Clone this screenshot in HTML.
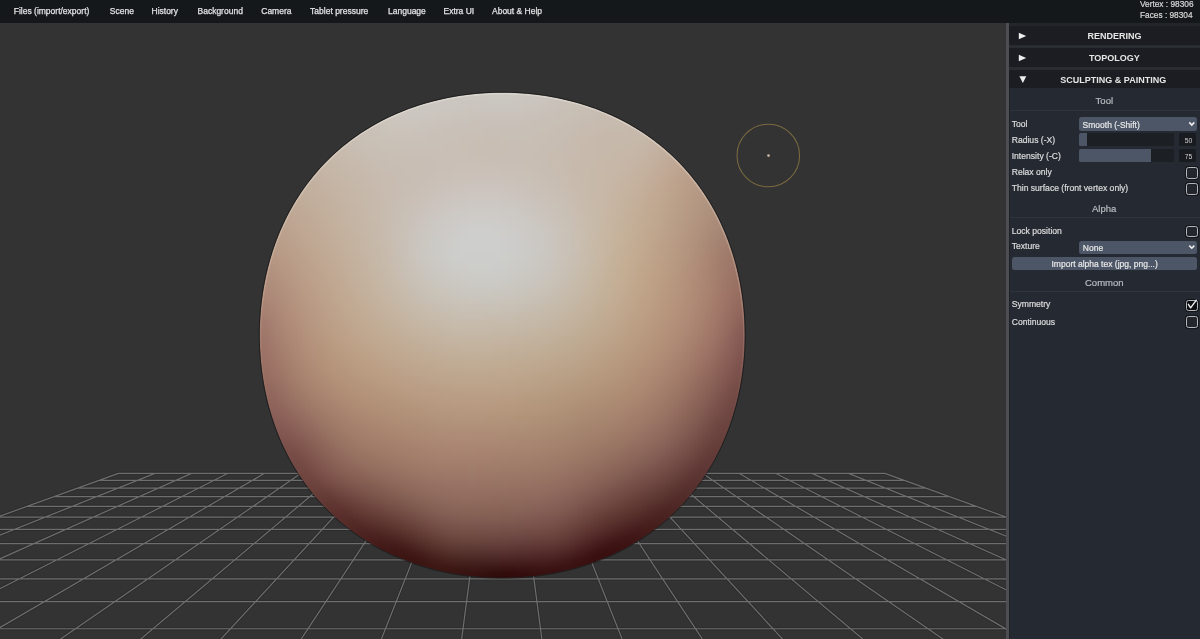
<!DOCTYPE html>
<html><head><meta charset="utf-8"><style>
html,body{-webkit-font-smoothing:antialiased;margin:0;padding:0;width:1200px;height:639px;overflow:hidden;background:#333333;font-family:"Liberation Sans",sans-serif}
#vp{position:absolute;left:0;top:0;width:1200px;height:639px}
#top{will-change:transform;position:absolute;left:0;top:0;width:1200px;height:23px;background:#14181b}
.mi{position:absolute;top:5.5px;font-size:8.5px;line-height:11px;color:#e2e2e2;white-space:pre;-webkit-text-stroke:0.25px #e2e2e2}
.st{position:absolute;left:1140px;font-size:8.3px;line-height:10px;color:#d8d8d8;white-space:pre;-webkit-text-stroke:0.2px #d8d8d8}
#side{will-change:transform;position:absolute;left:1006px;top:23px;width:194px;height:616px;background:#252a32}
#sb{position:absolute;left:0;top:0;width:3px;height:616px;background:#4c4e51;border-right:1px solid #1f2229}
.fh{position:absolute;left:3px;width:191px;height:22px;background:#1c1d22;border-top:3px solid #292d32;box-sizing:border-box}
.ft{position:absolute;font-size:9.0px;font-weight:bold;color:#e6e6e6;white-space:pre;line-height:11px}
.tri{position:absolute;width:0;height:0}
.lbl{position:absolute;left:1011.7px;font-size:8.6px;line-height:10px;color:#dcdcdc;white-space:pre;-webkit-text-stroke:0.2px #dcdcdc}
.ttl{position:absolute;font-size:9.5px;line-height:11px;color:#b8bcc0;white-space:pre;-webkit-text-stroke:0.2px #b8bcc0}
.sep{position:absolute;left:1010px;width:190px;height:1px;background:#30353c}
.sel{position:absolute;left:1078.8px;width:118.7px;height:13.5px;background:#4c5666;border-radius:2.5px}
.seltx{position:absolute;font-size:8.5px;line-height:10px;color:#e8e8e8;white-space:pre;-webkit-text-stroke:0.2px #e8e8e8}
.sl{position:absolute;left:1078.8px;width:95.7px;height:13px;background:#1c1f23;border-radius:1.5px;overflow:hidden}
.slf{position:absolute;left:0;top:0;height:13px;background:#4c5666}
.num{position:absolute;left:1178.7px;width:17.8px;height:13px;background:#181b1f;border-radius:1.5px}
.numtx{position:absolute;font-size:6.8px;line-height:8px;color:#d0d0d0;white-space:pre}
#vp rect{width:8px;height:8px}
.cb{position:absolute;left:1186px;width:9.6px;height:9.6px;border:1.1px solid #b4b8bc;border-radius:2.5px;background:#23272d;box-shadow:0 0 0 1px #121418}
</style></head><body>
<svg id="vp" width="1200" height="639" viewBox="0 0 1200 639">
<defs>
<linearGradient id="rimg" gradientUnits="userSpaceOnUse" x1="0" y1="92" x2="0" y2="420"><stop offset="0" stop-color="#e8e4de" stop-opacity="0.55"/><stop offset="0.6" stop-color="#e0c8b8" stop-opacity="0.3"/><stop offset="1" stop-color="#c09080" stop-opacity="0"/></linearGradient>
<clipPath id="sclip"><path d="M744.75 335.20L744.72 339.43L744.62 343.66L744.47 347.89L744.25 352.12L743.96 356.35L743.62 360.57L743.20 364.79L742.73 369.00L742.19 373.20L741.58 377.40L740.91 381.59L740.18 385.77L739.38 389.95L738.51 394.11L737.57 398.25L736.57 402.39L735.50 406.51L734.36 410.62L733.15 414.71L731.87 418.78L730.52 422.83L729.11 426.86L727.62 430.86L726.06 434.84L724.42 438.80L722.72 442.73L720.94 446.63L719.10 450.50L717.18 454.34L715.18 458.14L713.12 461.90L710.98 465.63L708.78 469.32L706.50 472.97L704.15 476.57L701.73 480.13L699.24 483.64L696.68 487.11L694.05 490.52L691.36 493.88L688.60 497.19L685.77 500.44L682.88 503.64L679.92 506.78L676.91 509.86L673.83 512.87L670.69 515.83L667.49 518.72L664.24 521.55L660.93 524.31L657.57 527.00L654.16 529.63L650.69 532.19L647.18 534.68L643.62 537.10L640.02 539.45L636.37 541.73L632.68 543.93L628.95 546.07L625.19 548.13L621.39 550.13L617.55 552.05L613.68 553.89L609.78 555.67L605.85 557.37L601.89 559.01L597.91 560.57L593.91 562.06L589.88 563.47L585.83 564.82L581.76 566.10L577.67 567.31L573.56 568.45L569.44 569.52L565.30 570.52L561.16 571.46L557.00 572.33L552.82 573.13L548.64 573.86L544.45 574.53L540.25 575.14L536.05 575.68L531.84 576.15L527.62 576.57L523.40 576.91L519.17 577.20L514.94 577.42L510.71 577.57L506.48 577.67L502.25 577.70L498.02 577.67L493.79 577.57L489.56 577.42L485.33 577.20L481.10 576.91L476.88 576.57L472.66 576.15L468.45 575.68L464.25 575.14L460.05 574.53L455.86 573.86L451.68 573.13L447.50 572.33L443.34 571.46L439.20 570.52L435.06 569.52L430.94 568.45L426.83 567.31L422.74 566.10L418.67 564.82L414.62 563.47L410.59 562.06L406.59 560.57L402.61 559.01L398.65 557.37L394.72 555.67L390.82 553.89L386.95 552.05L383.11 550.13L379.31 548.13L375.55 546.07L371.82 543.93L368.13 541.73L364.48 539.45L360.88 537.10L357.32 534.68L353.81 532.19L350.34 529.63L346.93 527.00L343.57 524.31L340.26 521.55L337.01 518.72L333.81 515.83L330.67 512.87L327.59 509.86L324.58 506.78L321.62 503.64L318.73 500.44L315.90 497.19L313.14 493.88L310.45 490.52L307.82 487.11L305.26 483.64L302.77 480.13L300.35 476.57L298.00 472.97L295.72 469.32L293.52 465.63L291.38 461.90L289.32 458.14L287.32 454.34L285.40 450.50L283.56 446.63L281.78 442.73L280.08 438.80L278.44 434.84L276.88 430.86L275.39 426.86L273.98 422.83L272.63 418.78L271.35 414.71L270.14 410.62L269.00 406.51L267.93 402.39L266.93 398.25L265.99 394.11L265.12 389.95L264.32 385.77L263.59 381.59L262.92 377.40L262.31 373.20L261.77 369.00L261.30 364.79L260.88 360.57L260.54 356.35L260.25 352.12L260.03 347.89L259.88 343.66L259.78 339.43L259.75 335.20L259.78 330.97L259.88 326.74L260.03 322.51L260.25 318.28L260.54 314.05L260.88 309.83L261.30 305.61L261.77 301.40L262.31 297.20L262.92 293.00L263.59 288.81L264.32 284.63L265.12 280.45L265.99 276.29L266.93 272.15L267.93 268.01L269.00 263.89L270.14 259.78L271.35 255.69L272.63 251.62L273.98 247.57L275.39 243.54L276.88 239.54L278.44 235.56L280.08 231.60L281.78 227.67L283.56 223.77L285.40 219.90L287.32 216.06L289.32 212.26L291.38 208.50L293.52 204.77L295.72 201.08L298.00 197.43L300.35 193.83L302.77 190.27L305.26 186.76L307.82 183.29L310.45 179.88L313.14 176.52L315.90 173.21L318.73 169.96L321.62 166.76L324.58 163.62L327.59 160.54L330.67 157.53L333.81 154.57L337.01 151.68L340.26 148.85L343.57 146.09L346.93 143.40L350.34 140.77L353.81 138.21L357.32 135.72L360.88 133.30L364.48 130.95L368.13 128.67L371.82 126.47L375.55 124.33L379.31 122.27L383.11 120.27L386.95 118.35L390.82 116.51L394.72 114.73L398.65 113.03L402.61 111.39L406.59 109.83L410.59 108.34L414.62 106.93L418.67 105.58L422.74 104.30L426.83 103.09L430.94 101.95L435.06 100.88L439.20 99.88L443.34 98.94L447.50 98.07L451.68 97.27L455.86 96.54L460.05 95.87L464.25 95.26L468.45 94.72L472.66 94.25L476.88 93.83L481.10 93.49L485.33 93.20L489.56 92.98L493.79 92.83L498.02 92.73L502.25 92.70L506.48 92.73L510.71 92.83L514.94 92.98L519.17 93.20L523.40 93.49L527.62 93.83L531.84 94.25L536.05 94.72L540.25 95.26L544.45 95.87L548.64 96.54L552.82 97.27L557.00 98.07L561.16 98.94L565.30 99.88L569.44 100.88L573.56 101.95L577.67 103.09L581.76 104.30L585.83 105.58L589.88 106.93L593.91 108.34L597.91 109.83L601.89 111.39L605.85 113.03L609.78 114.73L613.68 116.51L617.55 118.35L621.39 120.27L625.19 122.27L628.95 124.33L632.68 126.47L636.37 128.67L640.02 130.95L643.62 133.30L647.18 135.72L650.69 138.21L654.16 140.77L657.57 143.40L660.93 146.09L664.24 148.85L667.49 151.68L670.69 154.57L673.83 157.53L676.91 160.54L679.92 163.62L682.88 166.76L685.77 169.96L688.60 173.21L691.36 176.52L694.05 179.88L696.68 183.29L699.24 186.76L701.73 190.27L704.15 193.83L706.50 197.43L708.78 201.08L710.98 204.77L713.12 208.50L715.18 212.26L717.18 216.06L719.10 219.90L720.94 223.77L722.72 227.67L724.42 231.60L726.06 235.56L727.62 239.54L729.11 243.54L730.52 247.57L731.87 251.62L733.15 255.69L734.36 259.78L735.50 263.89L736.57 268.01L737.57 272.15L738.51 276.29L739.38 280.45L740.18 284.63L740.91 288.81L741.58 293.00L742.19 297.20L742.73 301.40L743.20 305.61L743.62 309.83L743.96 314.05L744.25 318.28L744.47 322.51L744.62 326.74L744.72 330.97Z"/></clipPath>
<filter id="sblur" x="-10%" y="-10%" width="120%" height="120%" color-interpolation-filters="sRGB"><feGaussianBlur stdDeviation="4"/></filter>
<radialGradient id="sbase" gradientUnits="userSpaceOnUse" cx="492.25" cy="275.2" r="303.125">
<stop offset="0" stop-color="#dcd0c4"/>
<stop offset="0.45" stop-color="#d4b8a2"/>
<stop offset="0.8" stop-color="#b89080"/>
<stop offset="1" stop-color="#9c7064"/>
</radialGradient>
<radialGradient id="sdark" gradientUnits="userSpaceOnUse" cx="502.25" cy="201.825" r="375.875">
<stop offset="0" stop-color="#3a0a0a" stop-opacity="0"/>
<stop offset="0.62" stop-color="#5a1c18" stop-opacity="0"/>
<stop offset="0.82" stop-color="#6a2a24" stop-opacity="0.45"/>
<stop offset="0.95" stop-color="#3a0c0a" stop-opacity="0.9"/>
<stop offset="1" stop-color="#2a0606" stop-opacity="1"/>
</radialGradient>
<radialGradient id="shl" gradientUnits="userSpaceOnUse" cx="482" cy="235" r="150.35">
<stop offset="0" stop-color="#dcdcd8" stop-opacity="1"/>
<stop offset="0.35" stop-color="#dad8d2" stop-opacity="0.9"/>
<stop offset="1" stop-color="#d8d0c8" stop-opacity="0"/>
</radialGradient>
</defs>
<path d="M118.52 473.33H884.98M99.15 480.32H904.35M77.73 488.05H925.77M53.89 496.66H949.61M27.22 506.28H976.28M-2.84 517.13H1006.34M-36.95 529.45H1040.45M-76.02 543.55H1079.52M-121.19 559.85H1124.69M-174.03 578.92H1177.53M-236.66 601.53H1240.16M-312.08 628.75H1315.58M118.52 473.33L-509.46 700M155.02 473.33L-413.16 700M191.51 473.33L-316.85 700M228.01 473.33L-220.55 700M264.51 473.33L-124.24 700M301.01 473.33L-27.93 700M337.51 473.33L68.37 700M374.01 473.33L164.68 700M410.50 473.33L260.98 700M447.00 473.33L357.29 700M483.50 473.33L453.60 700M520.00 473.33L549.90 700M556.50 473.33L646.21 700M593.00 473.33L742.52 700M629.49 473.33L838.82 700M665.99 473.33L935.13 700M702.49 473.33L1031.43 700M738.99 473.33L1127.74 700M775.49 473.33L1224.05 700M811.99 473.33L1320.35 700M848.48 473.33L1416.66 700M884.98 473.33L1512.96 700" stroke="#262626" stroke-opacity="0.5" stroke-width="3" fill="none"/>
<path d="M118.52 473.33H884.98M99.15 480.32H904.35M77.73 488.05H925.77M53.89 496.66H949.61M27.22 506.28H976.28M-2.84 517.13H1006.34M-36.95 529.45H1040.45M-76.02 543.55H1079.52M-121.19 559.85H1124.69M-174.03 578.92H1177.53M-236.66 601.53H1240.16M-312.08 628.75H1315.58M118.52 473.33L-509.46 700M155.02 473.33L-413.16 700M191.51 473.33L-316.85 700M228.01 473.33L-220.55 700M264.51 473.33L-124.24 700M301.01 473.33L-27.93 700M337.51 473.33L68.37 700M374.01 473.33L164.68 700M410.50 473.33L260.98 700M447.00 473.33L357.29 700M483.50 473.33L453.60 700M520.00 473.33L549.90 700M556.50 473.33L646.21 700M593.00 473.33L742.52 700M629.49 473.33L838.82 700M665.99 473.33L935.13 700M702.49 473.33L1031.43 700M738.99 473.33L1127.74 700M775.49 473.33L1224.05 700M811.99 473.33L1320.35 700M848.48 473.33L1416.66 700M884.98 473.33L1512.96 700" stroke="#6e6e6e" stroke-width="1.2" fill="none"/>
<g clip-path="url(#sclip)"><g filter="url(#sblur)"><g transform="translate(243.75 76.70)" shape-rendering="crispEdges"><rect x="176" y="0" fill="#cbc7c0"/><rect x="184" y="0" fill="#cbc7c0"/><rect x="192" y="0" fill="#cbc7c0"/><rect x="200" y="0" fill="#cbc7c0"/><rect x="208" y="0" fill="#cbc7c0"/><rect x="216" y="0" fill="#cbc7c0"/><rect x="224" y="0" fill="#cbc7c1"/><rect x="232" y="0" fill="#cbc7c1"/><rect x="240" y="0" fill="#cbc7c1"/><rect x="248" y="0" fill="#cbc8c2"/><rect x="256" y="0" fill="#cbc7c2"/><rect x="264" y="0" fill="#cbc7c1"/><rect x="272" y="0" fill="#cbc7c0"/><rect x="280" y="0" fill="#cac6bf"/><rect x="288" y="0" fill="#cac5be"/><rect x="296" y="0" fill="#cac4bd"/><rect x="304" y="0" fill="#cac3bb"/><rect x="312" y="0" fill="#c9c2ba"/><rect x="320" y="0" fill="#c9c1b9"/><rect x="328" y="0" fill="#c9c0b7"/><rect x="336" y="0" fill="#c8c0b6"/><rect x="152" y="8" fill="#cbc6bf"/><rect x="160" y="8" fill="#cbc6bf"/><rect x="168" y="8" fill="#cbc7bf"/><rect x="176" y="8" fill="#cbc7c0"/><rect x="184" y="8" fill="#cbc7c0"/><rect x="192" y="8" fill="#cbc7c0"/><rect x="200" y="8" fill="#cbc7c0"/><rect x="208" y="8" fill="#cbc7c0"/><rect x="216" y="8" fill="#cbc7c0"/><rect x="224" y="8" fill="#cbc7c1"/><rect x="232" y="8" fill="#cbc7c1"/><rect x="240" y="8" fill="#cbc7c1"/><rect x="248" y="8" fill="#cbc8c2"/><rect x="256" y="8" fill="#cbc7c2"/><rect x="264" y="8" fill="#cbc7c1"/><rect x="272" y="8" fill="#cbc7c0"/><rect x="280" y="8" fill="#cac6bf"/><rect x="288" y="8" fill="#cac5be"/><rect x="296" y="8" fill="#cac4bd"/><rect x="304" y="8" fill="#cac3bb"/><rect x="312" y="8" fill="#c9c2ba"/><rect x="320" y="8" fill="#c9c1b8"/><rect x="328" y="8" fill="#c9c0b7"/><rect x="336" y="8" fill="#c8bfb5"/><rect x="344" y="8" fill="#c8beb4"/><rect x="352" y="8" fill="#c8bdb2"/><rect x="360" y="8" fill="#c7bcb1"/><rect x="136" y="16" fill="#cbc5bd"/><rect x="144" y="16" fill="#cbc6be"/><rect x="152" y="16" fill="#cbc6bf"/><rect x="160" y="16" fill="#cbc6bf"/><rect x="168" y="16" fill="#cbc7bf"/><rect x="176" y="16" fill="#cbc7c0"/><rect x="184" y="16" fill="#cbc7c0"/><rect x="192" y="16" fill="#cbc7c0"/><rect x="200" y="16" fill="#cbc7c0"/><rect x="208" y="16" fill="#cbc7c0"/><rect x="216" y="16" fill="#cbc7c0"/><rect x="224" y="16" fill="#cbc7c1"/><rect x="232" y="16" fill="#cbc7c1"/><rect x="240" y="16" fill="#cbc7c1"/><rect x="248" y="16" fill="#cbc7c2"/><rect x="256" y="16" fill="#cbc7c1"/><rect x="264" y="16" fill="#cbc7c1"/><rect x="272" y="16" fill="#cbc6c0"/><rect x="280" y="16" fill="#cac6bf"/><rect x="288" y="16" fill="#cac5be"/><rect x="296" y="16" fill="#cac4bc"/><rect x="304" y="16" fill="#cac3bb"/><rect x="312" y="16" fill="#c9c2b9"/><rect x="320" y="16" fill="#c9c1b8"/><rect x="328" y="16" fill="#c9c0b6"/><rect x="336" y="16" fill="#c8bfb5"/><rect x="344" y="16" fill="#c8beb3"/><rect x="352" y="16" fill="#c7bdb2"/><rect x="360" y="16" fill="#c7bcb0"/><rect x="368" y="16" fill="#c7bbaf"/><rect x="376" y="16" fill="#c7bbae"/><rect x="120" y="24" fill="#cac3ba"/><rect x="128" y="24" fill="#cac4bc"/><rect x="136" y="24" fill="#cbc5bd"/><rect x="144" y="24" fill="#cbc6be"/><rect x="152" y="24" fill="#cbc6be"/><rect x="160" y="24" fill="#cbc6bf"/><rect x="168" y="24" fill="#cbc7bf"/><rect x="176" y="24" fill="#cbc7c0"/><rect x="184" y="24" fill="#cbc7c0"/><rect x="192" y="24" fill="#cbc7c0"/><rect x="200" y="24" fill="#cbc6bf"/><rect x="208" y="24" fill="#cbc6bf"/><rect x="216" y="24" fill="#cac6bf"/><rect x="224" y="24" fill="#cac5be"/><rect x="232" y="24" fill="#cac5be"/><rect x="240" y="24" fill="#cac5bf"/><rect x="248" y="24" fill="#cac5bf"/><rect x="256" y="24" fill="#cac5bf"/><rect x="264" y="24" fill="#cac5bf"/><rect x="272" y="24" fill="#cac5be"/><rect x="280" y="24" fill="#cac4bd"/><rect x="288" y="24" fill="#cac4bc"/><rect x="296" y="24" fill="#c9c3bb"/><rect x="304" y="24" fill="#c9c2ba"/><rect x="312" y="24" fill="#c9c1b9"/><rect x="320" y="24" fill="#c9c1b7"/><rect x="328" y="24" fill="#c8c0b6"/><rect x="336" y="24" fill="#c8beb4"/><rect x="344" y="24" fill="#c8bdb3"/><rect x="352" y="24" fill="#c7bcb1"/><rect x="360" y="24" fill="#c7bcb0"/><rect x="368" y="24" fill="#c7bbaf"/><rect x="376" y="24" fill="#c7baae"/><rect x="384" y="24" fill="#c7baad"/><rect x="392" y="24" fill="#c6baac"/><rect x="112" y="32" fill="#c9c2b8"/><rect x="120" y="32" fill="#cac3b9"/><rect x="128" y="32" fill="#cac4bb"/><rect x="136" y="32" fill="#cac4bc"/><rect x="144" y="32" fill="#cbc5bd"/><rect x="152" y="32" fill="#cbc6be"/><rect x="160" y="32" fill="#cbc6bf"/><rect x="168" y="32" fill="#cbc6bf"/><rect x="176" y="32" fill="#cbc6bf"/><rect x="184" y="32" fill="#cbc6be"/><rect x="192" y="32" fill="#cbc5be"/><rect x="200" y="32" fill="#cac5bd"/><rect x="208" y="32" fill="#cac4bc"/><rect x="216" y="32" fill="#cac4bc"/><rect x="224" y="32" fill="#cac3bc"/><rect x="232" y="32" fill="#c9c3bc"/><rect x="240" y="32" fill="#c9c3bc"/><rect x="248" y="32" fill="#c9c3bc"/><rect x="256" y="32" fill="#c9c3bc"/><rect x="264" y="32" fill="#c9c3bc"/><rect x="272" y="32" fill="#c9c3bb"/><rect x="280" y="32" fill="#c9c2bb"/><rect x="288" y="32" fill="#c9c2ba"/><rect x="296" y="32" fill="#c9c1b9"/><rect x="304" y="32" fill="#c9c1b8"/><rect x="312" y="32" fill="#c8c0b7"/><rect x="320" y="32" fill="#c8bfb5"/><rect x="328" y="32" fill="#c8bfb4"/><rect x="336" y="32" fill="#c8beb3"/><rect x="344" y="32" fill="#c8bdb2"/><rect x="352" y="32" fill="#c7bcb1"/><rect x="360" y="32" fill="#c7bbaf"/><rect x="368" y="32" fill="#c7bbae"/><rect x="376" y="32" fill="#c7baae"/><rect x="384" y="32" fill="#c6baad"/><rect x="392" y="32" fill="#c6b9ac"/><rect x="400" y="32" fill="#c6b9ab"/><rect x="96" y="40" fill="#c8bfb4"/><rect x="104" y="40" fill="#c9c0b5"/><rect x="112" y="40" fill="#c9c1b7"/><rect x="120" y="40" fill="#cac2b8"/><rect x="128" y="40" fill="#cac3ba"/><rect x="136" y="40" fill="#cac4bb"/><rect x="144" y="40" fill="#cbc5bd"/><rect x="152" y="40" fill="#cbc5be"/><rect x="160" y="40" fill="#cbc5bd"/><rect x="168" y="40" fill="#cac5bd"/><rect x="176" y="40" fill="#cac4bd"/><rect x="184" y="40" fill="#cac4bc"/><rect x="192" y="40" fill="#cac3bb"/><rect x="200" y="40" fill="#cac3bb"/><rect x="208" y="40" fill="#cac2ba"/><rect x="216" y="40" fill="#c9c2ba"/><rect x="224" y="40" fill="#c9c2b9"/><rect x="232" y="40" fill="#c9c1b9"/><rect x="240" y="40" fill="#c9c1b9"/><rect x="248" y="40" fill="#c9c1b9"/><rect x="256" y="40" fill="#c9c1b9"/><rect x="264" y="40" fill="#c9c1b9"/><rect x="272" y="40" fill="#c9c1b9"/><rect x="280" y="40" fill="#c9c1b8"/><rect x="288" y="40" fill="#c8c0b8"/><rect x="296" y="40" fill="#c8c0b7"/><rect x="304" y="40" fill="#c8bfb6"/><rect x="312" y="40" fill="#c8bfb5"/><rect x="320" y="40" fill="#c8beb4"/><rect x="328" y="40" fill="#c8bdb2"/><rect x="336" y="40" fill="#c7bcb1"/><rect x="344" y="40" fill="#c7bcb0"/><rect x="352" y="40" fill="#c7bbaf"/><rect x="360" y="40" fill="#c7bbaf"/><rect x="368" y="40" fill="#c7baae"/><rect x="376" y="40" fill="#c7baad"/><rect x="384" y="40" fill="#c6b9ac"/><rect x="392" y="40" fill="#c6b9ab"/><rect x="400" y="40" fill="#c6b8aa"/><rect x="408" y="40" fill="#c6b7a9"/><rect x="88" y="48" fill="#c8bdb1"/><rect x="96" y="48" fill="#c8beb2"/><rect x="104" y="48" fill="#c9bfb4"/><rect x="112" y="48" fill="#c9c0b6"/><rect x="120" y="48" fill="#c9c1b7"/><rect x="128" y="48" fill="#cac2b9"/><rect x="136" y="48" fill="#cac3ba"/><rect x="144" y="48" fill="#cac4bb"/><rect x="152" y="48" fill="#cac4bc"/><rect x="160" y="48" fill="#cac4bb"/><rect x="168" y="48" fill="#cac3bb"/><rect x="176" y="48" fill="#cac3bb"/><rect x="184" y="48" fill="#cac2ba"/><rect x="192" y="48" fill="#cac2b9"/><rect x="200" y="48" fill="#c9c1b9"/><rect x="208" y="48" fill="#c9c1b8"/><rect x="216" y="48" fill="#c9c0b8"/><rect x="224" y="48" fill="#c9c0b7"/><rect x="232" y="48" fill="#c9c0b7"/><rect x="240" y="48" fill="#c8c0b7"/><rect x="248" y="48" fill="#c8c0b7"/><rect x="256" y="48" fill="#c8c0b7"/><rect x="264" y="48" fill="#c8c0b7"/><rect x="272" y="48" fill="#c8c0b7"/><rect x="280" y="48" fill="#c8c0b7"/><rect x="288" y="48" fill="#c8bfb6"/><rect x="296" y="48" fill="#c8bfb5"/><rect x="304" y="48" fill="#c8beb4"/><rect x="312" y="48" fill="#c8bdb3"/><rect x="320" y="48" fill="#c7bdb2"/><rect x="328" y="48" fill="#c7bcb1"/><rect x="336" y="48" fill="#c7bbb0"/><rect x="344" y="48" fill="#c7bbaf"/><rect x="352" y="48" fill="#c7baae"/><rect x="360" y="48" fill="#c6baad"/><rect x="368" y="48" fill="#c6baad"/><rect x="376" y="48" fill="#c6baad"/><rect x="384" y="48" fill="#c6b9ac"/><rect x="392" y="48" fill="#c6b8ab"/><rect x="400" y="48" fill="#c6b7a9"/><rect x="408" y="48" fill="#c5b6a7"/><rect x="416" y="48" fill="#c5b4a4"/><rect x="424" y="48" fill="#c4b2a2"/><rect x="80" y="56" fill="#c7bbad"/><rect x="88" y="56" fill="#c7bcaf"/><rect x="96" y="56" fill="#c8bdb1"/><rect x="104" y="56" fill="#c8beb3"/><rect x="112" y="56" fill="#c9bfb4"/><rect x="120" y="56" fill="#c9c1b6"/><rect x="128" y="56" fill="#c9c1b7"/><rect x="136" y="56" fill="#c9c2b8"/><rect x="144" y="56" fill="#cac2b9"/><rect x="152" y="56" fill="#cac2b9"/><rect x="160" y="56" fill="#cac2b9"/><rect x="168" y="56" fill="#cac2b9"/><rect x="176" y="56" fill="#cac1b9"/><rect x="184" y="56" fill="#c9c1b8"/><rect x="192" y="56" fill="#c9c1b8"/><rect x="200" y="56" fill="#c9c0b7"/><rect x="208" y="56" fill="#c9c0b7"/><rect x="216" y="56" fill="#c9bfb6"/><rect x="224" y="56" fill="#c9bfb6"/><rect x="232" y="56" fill="#c9bfb5"/><rect x="240" y="56" fill="#c8beb5"/><rect x="248" y="56" fill="#c8beb5"/><rect x="256" y="56" fill="#c8bfb5"/><rect x="264" y="56" fill="#c8bfb6"/><rect x="272" y="56" fill="#c8bfb5"/><rect x="280" y="56" fill="#c8bfb5"/><rect x="288" y="56" fill="#c8beb5"/><rect x="296" y="56" fill="#c8beb4"/><rect x="304" y="56" fill="#c8bdb3"/><rect x="312" y="56" fill="#c7bdb2"/><rect x="320" y="56" fill="#c7bcb1"/><rect x="328" y="56" fill="#c7bbaf"/><rect x="336" y="56" fill="#c7bbae"/><rect x="344" y="56" fill="#c7baad"/><rect x="352" y="56" fill="#c6b9ac"/><rect x="360" y="56" fill="#c6b9ac"/><rect x="368" y="56" fill="#c6b9ac"/><rect x="376" y="56" fill="#c6b9ab"/><rect x="384" y="56" fill="#c6b9ab"/><rect x="392" y="56" fill="#c6b8aa"/><rect x="400" y="56" fill="#c5b6a8"/><rect x="408" y="56" fill="#c5b4a5"/><rect x="416" y="56" fill="#c4b2a2"/><rect x="424" y="56" fill="#c3b09f"/><rect x="432" y="56" fill="#c2ae9c"/><rect x="72" y="64" fill="#c6b8aa"/><rect x="80" y="64" fill="#c6b9ac"/><rect x="88" y="64" fill="#c7bbae"/><rect x="96" y="64" fill="#c7bcaf"/><rect x="104" y="64" fill="#c8bdb1"/><rect x="112" y="64" fill="#c8beb3"/><rect x="120" y="64" fill="#c9bfb4"/><rect x="128" y="64" fill="#c9c0b5"/><rect x="136" y="64" fill="#c9c0b6"/><rect x="144" y="64" fill="#c9c0b7"/><rect x="152" y="64" fill="#c9c1b7"/><rect x="160" y="64" fill="#c9c0b7"/><rect x="168" y="64" fill="#c9c0b7"/><rect x="176" y="64" fill="#c9c0b7"/><rect x="184" y="64" fill="#c9c0b7"/><rect x="192" y="64" fill="#c9c0b7"/><rect x="200" y="64" fill="#c9bfb6"/><rect x="208" y="64" fill="#c9bfb6"/><rect x="216" y="64" fill="#c9bfb5"/><rect x="224" y="64" fill="#c9beb5"/><rect x="232" y="64" fill="#c9beb4"/><rect x="240" y="64" fill="#c9beb4"/><rect x="248" y="64" fill="#c9beb4"/><rect x="256" y="64" fill="#c9beb4"/><rect x="264" y="64" fill="#c8beb5"/><rect x="272" y="64" fill="#c8beb5"/><rect x="280" y="64" fill="#c8beb4"/><rect x="288" y="64" fill="#c8beb4"/><rect x="296" y="64" fill="#c8bdb3"/><rect x="304" y="64" fill="#c8bdb2"/><rect x="312" y="64" fill="#c7bcb1"/><rect x="320" y="64" fill="#c7bbb0"/><rect x="328" y="64" fill="#c7bbae"/><rect x="336" y="64" fill="#c7baad"/><rect x="344" y="64" fill="#c6baac"/><rect x="352" y="64" fill="#c6b9ab"/><rect x="360" y="64" fill="#c6b9ab"/><rect x="368" y="64" fill="#c6b9aa"/><rect x="376" y="64" fill="#c6b8aa"/><rect x="384" y="64" fill="#c6b8a9"/><rect x="392" y="64" fill="#c6b7a8"/><rect x="400" y="64" fill="#c5b5a6"/><rect x="408" y="64" fill="#c4b3a3"/><rect x="416" y="64" fill="#c3b0a0"/><rect x="424" y="64" fill="#c2ae9c"/><rect x="432" y="64" fill="#c1ab99"/><rect x="440" y="64" fill="#c0a996"/><rect x="64" y="72" fill="#c5b6a7"/><rect x="72" y="72" fill="#c5b7a8"/><rect x="80" y="72" fill="#c6b8aa"/><rect x="88" y="72" fill="#c6baac"/><rect x="96" y="72" fill="#c7bbae"/><rect x="104" y="72" fill="#c7bcaf"/><rect x="112" y="72" fill="#c8bdb1"/><rect x="120" y="72" fill="#c8beb2"/><rect x="128" y="72" fill="#c8beb3"/><rect x="136" y="72" fill="#c8bfb4"/><rect x="144" y="72" fill="#c9bfb5"/><rect x="152" y="72" fill="#c9bfb5"/><rect x="160" y="72" fill="#c9bfb6"/><rect x="168" y="72" fill="#c9bfb6"/><rect x="176" y="72" fill="#c9bfb6"/><rect x="184" y="72" fill="#c9bfb6"/><rect x="192" y="72" fill="#c9bfb6"/><rect x="200" y="72" fill="#c9bfb6"/><rect x="208" y="72" fill="#c9bfb6"/><rect x="216" y="72" fill="#c9bfb5"/><rect x="224" y="72" fill="#c9beb5"/><rect x="232" y="72" fill="#c9beb4"/><rect x="240" y="72" fill="#c9beb4"/><rect x="248" y="72" fill="#c9beb4"/><rect x="256" y="72" fill="#c9beb4"/><rect x="264" y="72" fill="#c9beb5"/><rect x="272" y="72" fill="#c9beb4"/><rect x="280" y="72" fill="#c8beb4"/><rect x="288" y="72" fill="#c8bdb3"/><rect x="296" y="72" fill="#c8bdb2"/><rect x="304" y="72" fill="#c8bcb1"/><rect x="312" y="72" fill="#c7bcb0"/><rect x="320" y="72" fill="#c7bbaf"/><rect x="328" y="72" fill="#c7baae"/><rect x="336" y="72" fill="#c7baad"/><rect x="344" y="72" fill="#c7b9ac"/><rect x="352" y="72" fill="#c6b9ab"/><rect x="360" y="72" fill="#c6b8aa"/><rect x="368" y="72" fill="#c6b8a9"/><rect x="376" y="72" fill="#c6b7a8"/><rect x="384" y="72" fill="#c6b7a7"/><rect x="392" y="72" fill="#c5b5a6"/><rect x="400" y="72" fill="#c4b3a3"/><rect x="408" y="72" fill="#c3b1a0"/><rect x="416" y="72" fill="#c2ae9d"/><rect x="424" y="72" fill="#c1ac99"/><rect x="432" y="72" fill="#c0a996"/><rect x="440" y="72" fill="#bfa793"/><rect x="448" y="72" fill="#bea490"/><rect x="56" y="80" fill="#c4b3a3"/><rect x="64" y="80" fill="#c4b5a5"/><rect x="72" y="80" fill="#c5b6a7"/><rect x="80" y="80" fill="#c5b7a8"/><rect x="88" y="80" fill="#c6b8aa"/><rect x="96" y="80" fill="#c6baac"/><rect x="104" y="80" fill="#c7bbad"/><rect x="112" y="80" fill="#c7bbaf"/><rect x="120" y="80" fill="#c8bcb0"/><rect x="128" y="80" fill="#c8bdb1"/><rect x="136" y="80" fill="#c8bdb2"/><rect x="144" y="80" fill="#c8beb3"/><rect x="152" y="80" fill="#c9beb4"/><rect x="160" y="80" fill="#c9beb4"/><rect x="168" y="80" fill="#c9beb4"/><rect x="176" y="80" fill="#c9beb5"/><rect x="184" y="80" fill="#c9beb5"/><rect x="192" y="80" fill="#c9bfb6"/><rect x="200" y="80" fill="#cabfb6"/><rect x="208" y="80" fill="#cabfb6"/><rect x="216" y="80" fill="#cabfb6"/><rect x="224" y="80" fill="#cabfb6"/><rect x="232" y="80" fill="#cabfb5"/><rect x="240" y="80" fill="#cabeb5"/><rect x="248" y="80" fill="#c9beb5"/><rect x="256" y="80" fill="#c9beb5"/><rect x="264" y="80" fill="#c9beb5"/><rect x="272" y="80" fill="#c9beb5"/><rect x="280" y="80" fill="#c9beb4"/><rect x="288" y="80" fill="#c8beb3"/><rect x="296" y="80" fill="#c8bdb2"/><rect x="304" y="80" fill="#c8bcb1"/><rect x="312" y="80" fill="#c8bcb0"/><rect x="320" y="80" fill="#c7bbae"/><rect x="328" y="80" fill="#c7baad"/><rect x="336" y="80" fill="#c7baac"/><rect x="344" y="80" fill="#c7b9ab"/><rect x="352" y="80" fill="#c7b8aa"/><rect x="360" y="80" fill="#c6b8a9"/><rect x="368" y="80" fill="#c6b7a8"/><rect x="376" y="80" fill="#c6b6a7"/><rect x="384" y="80" fill="#c6b5a5"/><rect x="392" y="80" fill="#c5b4a3"/><rect x="400" y="80" fill="#c4b2a0"/><rect x="408" y="80" fill="#c3af9d"/><rect x="416" y="80" fill="#c1ac9a"/><rect x="424" y="80" fill="#c0a996"/><rect x="432" y="80" fill="#bfa793"/><rect x="440" y="80" fill="#bea490"/><rect x="448" y="80" fill="#bca28d"/><rect x="456" y="80" fill="#bba08b"/><rect x="48" y="88" fill="#c3b1a0"/><rect x="56" y="88" fill="#c3b2a2"/><rect x="64" y="88" fill="#c4b3a3"/><rect x="72" y="88" fill="#c4b4a5"/><rect x="80" y="88" fill="#c5b6a7"/><rect x="88" y="88" fill="#c5b7a8"/><rect x="96" y="88" fill="#c6b8aa"/><rect x="104" y="88" fill="#c6b9ac"/><rect x="112" y="88" fill="#c7baad"/><rect x="120" y="88" fill="#c7bbaf"/><rect x="128" y="88" fill="#c8bcb0"/><rect x="136" y="88" fill="#c8bdb1"/><rect x="144" y="88" fill="#c8bdb2"/><rect x="152" y="88" fill="#c8bdb3"/><rect x="160" y="88" fill="#c9beb3"/><rect x="168" y="88" fill="#c9beb4"/><rect x="176" y="88" fill="#c9beb4"/><rect x="184" y="88" fill="#c9beb5"/><rect x="192" y="88" fill="#cabfb6"/><rect x="200" y="88" fill="#cabfb7"/><rect x="208" y="88" fill="#cac0b7"/><rect x="216" y="88" fill="#cac0b7"/><rect x="224" y="88" fill="#cac0b7"/><rect x="232" y="88" fill="#cac0b7"/><rect x="240" y="88" fill="#cac0b7"/><rect x="248" y="88" fill="#cac0b7"/><rect x="256" y="88" fill="#cabfb7"/><rect x="264" y="88" fill="#cabfb6"/><rect x="272" y="88" fill="#c9bfb6"/><rect x="280" y="88" fill="#c9bfb5"/><rect x="288" y="88" fill="#c9beb4"/><rect x="296" y="88" fill="#c8bdb3"/><rect x="304" y="88" fill="#c8bdb1"/><rect x="312" y="88" fill="#c8bcb0"/><rect x="320" y="88" fill="#c7bbae"/><rect x="328" y="88" fill="#c7baad"/><rect x="336" y="88" fill="#c7baac"/><rect x="344" y="88" fill="#c7b9aa"/><rect x="352" y="88" fill="#c7b8a9"/><rect x="360" y="88" fill="#c6b7a8"/><rect x="368" y="88" fill="#c6b7a6"/><rect x="376" y="88" fill="#c6b6a5"/><rect x="384" y="88" fill="#c5b4a3"/><rect x="392" y="88" fill="#c5b2a0"/><rect x="400" y="88" fill="#c4b09e"/><rect x="408" y="88" fill="#c2ad9a"/><rect x="416" y="88" fill="#c1aa97"/><rect x="424" y="88" fill="#bfa793"/><rect x="432" y="88" fill="#bea490"/><rect x="440" y="88" fill="#bca28d"/><rect x="448" y="88" fill="#bba08a"/><rect x="456" y="88" fill="#ba9e89"/><rect x="464" y="88" fill="#b89c87"/><rect x="40" y="96" fill="#c2af9d"/><rect x="48" y="96" fill="#c2b09e"/><rect x="56" y="96" fill="#c3b1a0"/><rect x="64" y="96" fill="#c3b2a1"/><rect x="72" y="96" fill="#c4b3a3"/><rect x="80" y="96" fill="#c4b4a5"/><rect x="88" y="96" fill="#c5b6a6"/><rect x="96" y="96" fill="#c5b7a8"/><rect x="104" y="96" fill="#c6b8aa"/><rect x="112" y="96" fill="#c6b9ac"/><rect x="120" y="96" fill="#c7baad"/><rect x="128" y="96" fill="#c7bbaf"/><rect x="136" y="96" fill="#c8bcb0"/><rect x="144" y="96" fill="#c8bcb1"/><rect x="152" y="96" fill="#c8bdb2"/><rect x="160" y="96" fill="#c9bdb3"/><rect x="168" y="96" fill="#c9beb4"/><rect x="176" y="96" fill="#c9beb5"/><rect x="184" y="96" fill="#cabfb6"/><rect x="192" y="96" fill="#cac0b7"/><rect x="200" y="96" fill="#cac0b8"/><rect x="208" y="96" fill="#cac1b9"/><rect x="216" y="96" fill="#cbc1b9"/><rect x="224" y="96" fill="#cbc1b9"/><rect x="232" y="96" fill="#cbc1b9"/><rect x="240" y="96" fill="#cbc1b9"/><rect x="248" y="96" fill="#cbc1b9"/><rect x="256" y="96" fill="#cac1b9"/><rect x="264" y="96" fill="#cac1b8"/><rect x="272" y="96" fill="#cac0b8"/><rect x="280" y="96" fill="#c9c0b6"/><rect x="288" y="96" fill="#c9bfb5"/><rect x="296" y="96" fill="#c9beb4"/><rect x="304" y="96" fill="#c8bdb2"/><rect x="312" y="96" fill="#c8bcb0"/><rect x="320" y="96" fill="#c8bbaf"/><rect x="328" y="96" fill="#c7bbad"/><rect x="336" y="96" fill="#c7baac"/><rect x="344" y="96" fill="#c7b9aa"/><rect x="352" y="96" fill="#c7b8a8"/><rect x="360" y="96" fill="#c7b7a7"/><rect x="368" y="96" fill="#c6b6a5"/><rect x="376" y="96" fill="#c6b5a3"/><rect x="384" y="96" fill="#c5b3a1"/><rect x="392" y="96" fill="#c4b19e"/><rect x="400" y="96" fill="#c3ae9b"/><rect x="408" y="96" fill="#c2ac98"/><rect x="416" y="96" fill="#c0a894"/><rect x="424" y="96" fill="#bea590"/><rect x="432" y="96" fill="#bca28d"/><rect x="440" y="96" fill="#bb9f8a"/><rect x="448" y="96" fill="#b99e88"/><rect x="456" y="96" fill="#b89c87"/><rect x="464" y="96" fill="#b79a85"/><rect x="40" y="104" fill="#c1ad9b"/><rect x="48" y="104" fill="#c1ae9c"/><rect x="56" y="104" fill="#c2af9e"/><rect x="64" y="104" fill="#c2b09f"/><rect x="72" y="104" fill="#c3b2a1"/><rect x="80" y="104" fill="#c4b3a3"/><rect x="88" y="104" fill="#c4b4a4"/><rect x="96" y="104" fill="#c5b6a6"/><rect x="104" y="104" fill="#c6b7a8"/><rect x="112" y="104" fill="#c6b8aa"/><rect x="120" y="104" fill="#c7b9ac"/><rect x="128" y="104" fill="#c7baae"/><rect x="136" y="104" fill="#c8bbaf"/><rect x="144" y="104" fill="#c8bcb1"/><rect x="152" y="104" fill="#c8bdb2"/><rect x="160" y="104" fill="#c9beb4"/><rect x="168" y="104" fill="#c9beb5"/><rect x="176" y="104" fill="#cabfb6"/><rect x="184" y="104" fill="#cac0b8"/><rect x="192" y="104" fill="#cac1b9"/><rect x="200" y="104" fill="#cbc2ba"/><rect x="208" y="104" fill="#cbc2bb"/><rect x="216" y="104" fill="#cbc3bb"/><rect x="224" y="104" fill="#cbc3bc"/><rect x="232" y="104" fill="#cbc3bc"/><rect x="240" y="104" fill="#cbc3bc"/><rect x="248" y="104" fill="#cbc3bc"/><rect x="256" y="104" fill="#cbc3bb"/><rect x="264" y="104" fill="#cbc2bb"/><rect x="272" y="104" fill="#cac2ba"/><rect x="280" y="104" fill="#cac1b8"/><rect x="288" y="104" fill="#cac0b7"/><rect x="296" y="104" fill="#c9bfb5"/><rect x="304" y="104" fill="#c9beb3"/><rect x="312" y="104" fill="#c8bdb1"/><rect x="320" y="104" fill="#c8bcaf"/><rect x="328" y="104" fill="#c8bbae"/><rect x="336" y="104" fill="#c8baac"/><rect x="344" y="104" fill="#c7b9aa"/><rect x="352" y="104" fill="#c7b8a8"/><rect x="360" y="104" fill="#c7b7a6"/><rect x="368" y="104" fill="#c6b5a4"/><rect x="376" y="104" fill="#c6b4a1"/><rect x="384" y="104" fill="#c5b29f"/><rect x="392" y="104" fill="#c4b09c"/><rect x="400" y="104" fill="#c3ad99"/><rect x="408" y="104" fill="#c1aa95"/><rect x="416" y="104" fill="#c0a792"/><rect x="424" y="104" fill="#bea48e"/><rect x="432" y="104" fill="#bba08b"/><rect x="440" y="104" fill="#b99d88"/><rect x="448" y="104" fill="#b89b86"/><rect x="456" y="104" fill="#b69a85"/><rect x="464" y="104" fill="#b59883"/><rect x="472" y="104" fill="#b39782"/><rect x="32" y="112" fill="#c0aa98"/><rect x="40" y="112" fill="#c0ab99"/><rect x="48" y="112" fill="#c1ad9a"/><rect x="56" y="112" fill="#c1ae9c"/><rect x="64" y="112" fill="#c2af9d"/><rect x="72" y="112" fill="#c3b09f"/><rect x="80" y="112" fill="#c3b2a1"/><rect x="88" y="112" fill="#c4b3a3"/><rect x="96" y="112" fill="#c5b5a5"/><rect x="104" y="112" fill="#c5b6a7"/><rect x="112" y="112" fill="#c6b8a9"/><rect x="120" y="112" fill="#c6b9ab"/><rect x="128" y="112" fill="#c7baad"/><rect x="136" y="112" fill="#c8bbaf"/><rect x="144" y="112" fill="#c8bcb1"/><rect x="152" y="112" fill="#c9bdb3"/><rect x="160" y="112" fill="#c9beb4"/><rect x="168" y="112" fill="#c9bfb6"/><rect x="176" y="112" fill="#cac0b8"/><rect x="184" y="112" fill="#cac1b9"/><rect x="192" y="112" fill="#cbc2bb"/><rect x="200" y="112" fill="#cbc3bc"/><rect x="208" y="112" fill="#ccc4bd"/><rect x="216" y="112" fill="#ccc4be"/><rect x="224" y="112" fill="#ccc5bf"/><rect x="232" y="112" fill="#ccc5bf"/><rect x="240" y="112" fill="#ccc5bf"/><rect x="248" y="112" fill="#ccc5bf"/><rect x="256" y="112" fill="#ccc4be"/><rect x="264" y="112" fill="#cbc4bd"/><rect x="272" y="112" fill="#cbc3bc"/><rect x="280" y="112" fill="#cac2bb"/><rect x="288" y="112" fill="#cac1b9"/><rect x="296" y="112" fill="#cac0b7"/><rect x="304" y="112" fill="#c9bfb5"/><rect x="312" y="112" fill="#c9beb3"/><rect x="320" y="112" fill="#c8bdb0"/><rect x="328" y="112" fill="#c8bcae"/><rect x="336" y="112" fill="#c8baac"/><rect x="344" y="112" fill="#c7b9aa"/><rect x="352" y="112" fill="#c7b8a7"/><rect x="360" y="112" fill="#c7b6a5"/><rect x="368" y="112" fill="#c6b5a2"/><rect x="376" y="112" fill="#c5b3a0"/><rect x="384" y="112" fill="#c5b19d"/><rect x="392" y="112" fill="#c3af9a"/><rect x="400" y="112" fill="#c2ac97"/><rect x="408" y="112" fill="#c1a993"/><rect x="416" y="112" fill="#bfa690"/><rect x="424" y="112" fill="#bda38c"/><rect x="432" y="112" fill="#bb9f89"/><rect x="440" y="112" fill="#b89c86"/><rect x="448" y="112" fill="#b69984"/><rect x="456" y="112" fill="#b49783"/><rect x="464" y="112" fill="#b39681"/><rect x="472" y="112" fill="#b19480"/><rect x="480" y="112" fill="#b0937f"/><rect x="24" y="120" fill="#bea895"/><rect x="32" y="120" fill="#bfa996"/><rect x="40" y="120" fill="#bfaa97"/><rect x="48" y="120" fill="#c0ab98"/><rect x="56" y="120" fill="#c0ac9a"/><rect x="64" y="120" fill="#c1ae9c"/><rect x="72" y="120" fill="#c2af9d"/><rect x="80" y="120" fill="#c3b19f"/><rect x="88" y="120" fill="#c4b2a1"/><rect x="96" y="120" fill="#c4b4a4"/><rect x="104" y="120" fill="#c5b6a6"/><rect x="112" y="120" fill="#c6b7a8"/><rect x="120" y="120" fill="#c6b8aa"/><rect x="128" y="120" fill="#c7baad"/><rect x="136" y="120" fill="#c7bbaf"/><rect x="144" y="120" fill="#c8bcb1"/><rect x="152" y="120" fill="#c9beb3"/><rect x="160" y="120" fill="#c9bfb5"/><rect x="168" y="120" fill="#cac0b7"/><rect x="176" y="120" fill="#cac1ba"/><rect x="184" y="120" fill="#cbc3bb"/><rect x="192" y="120" fill="#cbc4bd"/><rect x="200" y="120" fill="#ccc5bf"/><rect x="208" y="120" fill="#ccc6c0"/><rect x="216" y="120" fill="#ccc6c1"/><rect x="224" y="120" fill="#cdc7c2"/><rect x="232" y="120" fill="#cdc7c2"/><rect x="240" y="120" fill="#cdc7c2"/><rect x="248" y="120" fill="#cdc7c2"/><rect x="256" y="120" fill="#ccc6c1"/><rect x="264" y="120" fill="#ccc6c0"/><rect x="272" y="120" fill="#cbc5be"/><rect x="280" y="120" fill="#cbc4bd"/><rect x="288" y="120" fill="#cac3bb"/><rect x="296" y="120" fill="#cac2b9"/><rect x="304" y="120" fill="#cac0b7"/><rect x="312" y="120" fill="#c9bfb4"/><rect x="320" y="120" fill="#c9beb2"/><rect x="328" y="120" fill="#c8bcaf"/><rect x="336" y="120" fill="#c8bbac"/><rect x="344" y="120" fill="#c8b9aa"/><rect x="352" y="120" fill="#c7b8a7"/><rect x="360" y="120" fill="#c7b6a4"/><rect x="368" y="120" fill="#c6b4a1"/><rect x="376" y="120" fill="#c5b39e"/><rect x="384" y="120" fill="#c4b09b"/><rect x="392" y="120" fill="#c3ae98"/><rect x="400" y="120" fill="#c2ab95"/><rect x="408" y="120" fill="#c0a892"/><rect x="416" y="120" fill="#bea58e"/><rect x="424" y="120" fill="#bca28b"/><rect x="432" y="120" fill="#ba9f88"/><rect x="440" y="120" fill="#b79b85"/><rect x="448" y="120" fill="#b49883"/><rect x="456" y="120" fill="#b29581"/><rect x="464" y="120" fill="#b0937f"/><rect x="472" y="120" fill="#af927e"/><rect x="480" y="120" fill="#ae907d"/><rect x="24" y="128" fill="#bda693"/><rect x="32" y="128" fill="#bea794"/><rect x="40" y="128" fill="#bea895"/><rect x="48" y="128" fill="#bfa996"/><rect x="56" y="128" fill="#c0ab98"/><rect x="64" y="128" fill="#c1ac9a"/><rect x="72" y="128" fill="#c2ae9c"/><rect x="80" y="128" fill="#c3b09e"/><rect x="88" y="128" fill="#c3b2a0"/><rect x="96" y="128" fill="#c4b3a2"/><rect x="104" y="128" fill="#c5b5a5"/><rect x="112" y="128" fill="#c6b6a7"/><rect x="120" y="128" fill="#c6b8aa"/><rect x="128" y="128" fill="#c7baac"/><rect x="136" y="128" fill="#c7bbaf"/><rect x="144" y="128" fill="#c8bdb1"/><rect x="152" y="128" fill="#c9beb4"/><rect x="160" y="128" fill="#c9c0b7"/><rect x="168" y="128" fill="#cac1b9"/><rect x="176" y="128" fill="#cac3bb"/><rect x="184" y="128" fill="#cbc4be"/><rect x="192" y="128" fill="#ccc5c0"/><rect x="200" y="128" fill="#ccc7c1"/><rect x="208" y="128" fill="#cdc8c3"/><rect x="216" y="128" fill="#cdc8c4"/><rect x="224" y="128" fill="#cdc9c5"/><rect x="232" y="128" fill="#cdc9c5"/><rect x="240" y="128" fill="#cdc9c5"/><rect x="248" y="128" fill="#cdc9c5"/><rect x="256" y="128" fill="#cdc8c4"/><rect x="264" y="128" fill="#ccc8c3"/><rect x="272" y="128" fill="#ccc7c1"/><rect x="280" y="128" fill="#cbc5bf"/><rect x="288" y="128" fill="#cbc4bd"/><rect x="296" y="128" fill="#cac3bb"/><rect x="304" y="128" fill="#cac2b8"/><rect x="312" y="128" fill="#c9c0b6"/><rect x="320" y="128" fill="#c9bfb3"/><rect x="328" y="128" fill="#c9bdb0"/><rect x="336" y="128" fill="#c8bbad"/><rect x="344" y="128" fill="#c8baaa"/><rect x="352" y="128" fill="#c7b8a7"/><rect x="360" y="128" fill="#c7b6a3"/><rect x="368" y="128" fill="#c6b4a0"/><rect x="376" y="128" fill="#c5b29d"/><rect x="384" y="128" fill="#c4b09a"/><rect x="392" y="128" fill="#c3ad97"/><rect x="400" y="128" fill="#c1aa94"/><rect x="408" y="128" fill="#c0a790"/><rect x="416" y="128" fill="#bea48d"/><rect x="424" y="128" fill="#bba18a"/><rect x="432" y="128" fill="#b99e87"/><rect x="440" y="128" fill="#b69a85"/><rect x="448" y="128" fill="#b39782"/><rect x="456" y="128" fill="#b0937f"/><rect x="464" y="128" fill="#ae917d"/><rect x="472" y="128" fill="#ad8f7c"/><rect x="480" y="128" fill="#ab8d7a"/><rect x="488" y="128" fill="#aa8c79"/><rect x="16" y="136" fill="#bca38f"/><rect x="24" y="136" fill="#bca490"/><rect x="32" y="136" fill="#bda592"/><rect x="40" y="136" fill="#bda693"/><rect x="48" y="136" fill="#bea794"/><rect x="56" y="136" fill="#bfa996"/><rect x="64" y="136" fill="#c0ab98"/><rect x="72" y="136" fill="#c1ad9a"/><rect x="80" y="136" fill="#c2af9c"/><rect x="88" y="136" fill="#c3b19f"/><rect x="96" y="136" fill="#c4b3a1"/><rect x="104" y="136" fill="#c5b4a4"/><rect x="112" y="136" fill="#c5b6a6"/><rect x="120" y="136" fill="#c6b8a9"/><rect x="128" y="136" fill="#c7b9ac"/><rect x="136" y="136" fill="#c7bbaf"/><rect x="144" y="136" fill="#c8bdb2"/><rect x="152" y="136" fill="#c9bfb5"/><rect x="160" y="136" fill="#c9c1b8"/><rect x="168" y="136" fill="#cac2ba"/><rect x="176" y="136" fill="#cbc4bd"/><rect x="184" y="136" fill="#cbc6c0"/><rect x="192" y="136" fill="#ccc7c2"/><rect x="200" y="136" fill="#ccc8c4"/><rect x="208" y="136" fill="#cdc9c5"/><rect x="216" y="136" fill="#cdcac7"/><rect x="224" y="136" fill="#cecbc8"/><rect x="232" y="136" fill="#cecbc8"/><rect x="240" y="136" fill="#cecbc8"/><rect x="248" y="136" fill="#cecbc7"/><rect x="256" y="136" fill="#cdcac6"/><rect x="264" y="136" fill="#cdc9c5"/><rect x="272" y="136" fill="#ccc8c3"/><rect x="280" y="136" fill="#ccc7c2"/><rect x="288" y="136" fill="#cbc6bf"/><rect x="296" y="136" fill="#cbc4bd"/><rect x="304" y="136" fill="#cac3ba"/><rect x="312" y="136" fill="#cac1b7"/><rect x="320" y="136" fill="#c9bfb4"/><rect x="328" y="136" fill="#c9beb1"/><rect x="336" y="136" fill="#c8bcad"/><rect x="344" y="136" fill="#c8baaa"/><rect x="352" y="136" fill="#c7b8a6"/><rect x="360" y="136" fill="#c7b6a3"/><rect x="368" y="136" fill="#c6b49f"/><rect x="376" y="136" fill="#c5b29c"/><rect x="384" y="136" fill="#c4af99"/><rect x="392" y="136" fill="#c3ac95"/><rect x="400" y="136" fill="#c1aa92"/><rect x="408" y="136" fill="#bfa78f"/><rect x="416" y="136" fill="#bda38c"/><rect x="424" y="136" fill="#bba089"/><rect x="432" y="136" fill="#b89d86"/><rect x="440" y="136" fill="#b59984"/><rect x="448" y="136" fill="#b29681"/><rect x="456" y="136" fill="#af927e"/><rect x="464" y="136" fill="#ac8e7b"/><rect x="472" y="136" fill="#aa8c79"/><rect x="480" y="136" fill="#a98a78"/><rect x="488" y="136" fill="#a88876"/><rect x="16" y="144" fill="#bba18d"/><rect x="24" y="144" fill="#bba28e"/><rect x="32" y="144" fill="#bca38f"/><rect x="40" y="144" fill="#bca490"/><rect x="48" y="144" fill="#bda692"/><rect x="56" y="144" fill="#bfa894"/><rect x="64" y="144" fill="#c0aa96"/><rect x="72" y="144" fill="#c1ac99"/><rect x="80" y="144" fill="#c2ae9b"/><rect x="88" y="144" fill="#c3b09d"/><rect x="96" y="144" fill="#c4b2a0"/><rect x="104" y="144" fill="#c4b4a2"/><rect x="112" y="144" fill="#c5b5a5"/><rect x="120" y="144" fill="#c6b7a8"/><rect x="128" y="144" fill="#c7b9ab"/><rect x="136" y="144" fill="#c7bbae"/><rect x="144" y="144" fill="#c8bdb2"/><rect x="152" y="144" fill="#c9bfb5"/><rect x="160" y="144" fill="#c9c1b8"/><rect x="168" y="144" fill="#cac3bc"/><rect x="176" y="144" fill="#cbc5bf"/><rect x="184" y="144" fill="#cbc7c2"/><rect x="192" y="144" fill="#ccc8c4"/><rect x="200" y="144" fill="#cdcac6"/><rect x="208" y="144" fill="#cdcbc8"/><rect x="216" y="144" fill="#ceccc9"/><rect x="224" y="144" fill="#cecdca"/><rect x="232" y="144" fill="#cecdca"/><rect x="240" y="144" fill="#cecdca"/><rect x="248" y="144" fill="#ceccca"/><rect x="256" y="144" fill="#ceccc9"/><rect x="264" y="144" fill="#cdcbc7"/><rect x="272" y="144" fill="#cdcac5"/><rect x="280" y="144" fill="#ccc8c4"/><rect x="288" y="144" fill="#cbc7c1"/><rect x="296" y="144" fill="#cbc5bf"/><rect x="304" y="144" fill="#cac4bc"/><rect x="312" y="144" fill="#cac2b9"/><rect x="320" y="144" fill="#c9c0b5"/><rect x="328" y="144" fill="#c9beb1"/><rect x="336" y="144" fill="#c8bcae"/><rect x="344" y="144" fill="#c8baaa"/><rect x="352" y="144" fill="#c7b8a6"/><rect x="360" y="144" fill="#c7b6a2"/><rect x="368" y="144" fill="#c6b39e"/><rect x="376" y="144" fill="#c5b19b"/><rect x="384" y="144" fill="#c4ae97"/><rect x="392" y="144" fill="#c2ac94"/><rect x="400" y="144" fill="#c1a991"/><rect x="408" y="144" fill="#bfa68e"/><rect x="416" y="144" fill="#bda38b"/><rect x="424" y="144" fill="#ba9f88"/><rect x="432" y="144" fill="#b79c85"/><rect x="440" y="144" fill="#b49882"/><rect x="448" y="144" fill="#b1947f"/><rect x="456" y="144" fill="#ae907c"/><rect x="464" y="144" fill="#aa8b79"/><rect x="472" y="144" fill="#a88876"/><rect x="480" y="144" fill="#a78775"/><rect x="488" y="144" fill="#a68573"/><rect x="496" y="144" fill="#a58372"/><rect x="8" y="152" fill="#b99e8a"/><rect x="16" y="152" fill="#b99f8b"/><rect x="24" y="152" fill="#baa08c"/><rect x="32" y="152" fill="#bba18d"/><rect x="40" y="152" fill="#bba28e"/><rect x="48" y="152" fill="#bda490"/><rect x="56" y="152" fill="#bea793"/><rect x="64" y="152" fill="#bfa995"/><rect x="72" y="152" fill="#c1ab97"/><rect x="80" y="152" fill="#c2ad9a"/><rect x="88" y="152" fill="#c3af9c"/><rect x="96" y="152" fill="#c3b19f"/><rect x="104" y="152" fill="#c4b3a1"/><rect x="112" y="152" fill="#c5b5a4"/><rect x="120" y="152" fill="#c6b7a7"/><rect x="128" y="152" fill="#c6b9ab"/><rect x="136" y="152" fill="#c7bbae"/><rect x="144" y="152" fill="#c8bdb2"/><rect x="152" y="152" fill="#c9c0b5"/><rect x="160" y="152" fill="#c9c2b9"/><rect x="168" y="152" fill="#cac4bd"/><rect x="176" y="152" fill="#cbc6c0"/><rect x="184" y="152" fill="#ccc8c3"/><rect x="192" y="152" fill="#ccc9c6"/><rect x="200" y="152" fill="#cdcbc8"/><rect x="208" y="152" fill="#cdccc9"/><rect x="216" y="152" fill="#cecdcb"/><rect x="224" y="152" fill="#cececc"/><rect x="232" y="152" fill="#cfcecc"/><rect x="240" y="152" fill="#cececc"/><rect x="248" y="152" fill="#cececb"/><rect x="256" y="152" fill="#cecdca"/><rect x="264" y="152" fill="#cdccc9"/><rect x="272" y="152" fill="#cdcbc7"/><rect x="280" y="152" fill="#ccc9c5"/><rect x="288" y="152" fill="#cbc8c3"/><rect x="296" y="152" fill="#cbc6c0"/><rect x="304" y="152" fill="#cac5bd"/><rect x="312" y="152" fill="#cac3ba"/><rect x="320" y="152" fill="#c9c1b6"/><rect x="328" y="152" fill="#c9bfb2"/><rect x="336" y="152" fill="#c8bdae"/><rect x="344" y="152" fill="#c8baa9"/><rect x="352" y="152" fill="#c7b8a5"/><rect x="360" y="152" fill="#c7b6a1"/><rect x="368" y="152" fill="#c6b39d"/><rect x="376" y="152" fill="#c5b19a"/><rect x="384" y="152" fill="#c3ae96"/><rect x="392" y="152" fill="#c2ab93"/><rect x="400" y="152" fill="#c0a88f"/><rect x="408" y="152" fill="#bea58c"/><rect x="416" y="152" fill="#bca28a"/><rect x="424" y="152" fill="#ba9e87"/><rect x="432" y="152" fill="#b79b84"/><rect x="440" y="152" fill="#b49781"/><rect x="448" y="152" fill="#b0927e"/><rect x="456" y="152" fill="#ad8e7a"/><rect x="464" y="152" fill="#a98977"/><rect x="472" y="152" fill="#a58573"/><rect x="480" y="152" fill="#a48372"/><rect x="488" y="152" fill="#a38170"/><rect x="496" y="152" fill="#a2806f"/><rect x="8" y="160" fill="#b79b87"/><rect x="16" y="160" fill="#b89c88"/><rect x="24" y="160" fill="#b99d89"/><rect x="32" y="160" fill="#b99e8a"/><rect x="40" y="160" fill="#baa08c"/><rect x="48" y="160" fill="#bca38e"/><rect x="56" y="160" fill="#bea591"/><rect x="64" y="160" fill="#bfa893"/><rect x="72" y="160" fill="#c0aa96"/><rect x="80" y="160" fill="#c1ac98"/><rect x="88" y="160" fill="#c2ae9b"/><rect x="96" y="160" fill="#c3b09d"/><rect x="104" y="160" fill="#c4b2a0"/><rect x="112" y="160" fill="#c5b4a3"/><rect x="120" y="160" fill="#c6b6a6"/><rect x="128" y="160" fill="#c6b9aa"/><rect x="136" y="160" fill="#c7bbad"/><rect x="144" y="160" fill="#c8bdb1"/><rect x="152" y="160" fill="#c9c0b5"/><rect x="160" y="160" fill="#c9c2b9"/><rect x="168" y="160" fill="#cac4bd"/><rect x="176" y="160" fill="#cbc7c1"/><rect x="184" y="160" fill="#cbc9c4"/><rect x="192" y="160" fill="#cccac7"/><rect x="200" y="160" fill="#cdccc9"/><rect x="208" y="160" fill="#cdcdca"/><rect x="216" y="160" fill="#cececc"/><rect x="224" y="160" fill="#cececd"/><rect x="232" y="160" fill="#cecfcd"/><rect x="240" y="160" fill="#cecfcd"/><rect x="248" y="160" fill="#cececc"/><rect x="256" y="160" fill="#cecdcb"/><rect x="264" y="160" fill="#cdccca"/><rect x="272" y="160" fill="#cdcbc8"/><rect x="280" y="160" fill="#cccac6"/><rect x="288" y="160" fill="#cbc8c4"/><rect x="296" y="160" fill="#cbc7c1"/><rect x="304" y="160" fill="#cac5be"/><rect x="312" y="160" fill="#cac3ba"/><rect x="320" y="160" fill="#c9c1b6"/><rect x="328" y="160" fill="#c9bfb2"/><rect x="336" y="160" fill="#c8bdad"/><rect x="344" y="160" fill="#c8baa9"/><rect x="352" y="160" fill="#c7b8a5"/><rect x="360" y="160" fill="#c6b5a0"/><rect x="368" y="160" fill="#c6b39c"/><rect x="376" y="160" fill="#c5b098"/><rect x="384" y="160" fill="#c3ad95"/><rect x="392" y="160" fill="#c2aa91"/><rect x="400" y="160" fill="#c0a78e"/><rect x="408" y="160" fill="#bea48b"/><rect x="416" y="160" fill="#bca188"/><rect x="424" y="160" fill="#b99d85"/><rect x="432" y="160" fill="#b69982"/><rect x="440" y="160" fill="#b3957f"/><rect x="448" y="160" fill="#af917c"/><rect x="456" y="160" fill="#ac8c78"/><rect x="464" y="160" fill="#a88775"/><rect x="472" y="160" fill="#a48271"/><rect x="480" y="160" fill="#a27f6f"/><rect x="488" y="160" fill="#a17e6e"/><rect x="496" y="160" fill="#a07d6d"/><rect x="504" y="160" fill="#a07b6c"/><rect x="8" y="168" fill="#b69885"/><rect x="16" y="168" fill="#b69986"/><rect x="24" y="168" fill="#b79a87"/><rect x="32" y="168" fill="#b89c88"/><rect x="40" y="168" fill="#ba9e8a"/><rect x="48" y="168" fill="#bba18d"/><rect x="56" y="168" fill="#bda48f"/><rect x="64" y="168" fill="#bea691"/><rect x="72" y="168" fill="#c0a994"/><rect x="80" y="168" fill="#c1ab96"/><rect x="88" y="168" fill="#c2ad99"/><rect x="96" y="168" fill="#c3af9c"/><rect x="104" y="168" fill="#c4b19f"/><rect x="112" y="168" fill="#c5b4a2"/><rect x="120" y="168" fill="#c5b6a5"/><rect x="128" y="168" fill="#c6b8a9"/><rect x="136" y="168" fill="#c7baac"/><rect x="144" y="168" fill="#c8bdb0"/><rect x="152" y="168" fill="#c8bfb5"/><rect x="160" y="168" fill="#c9c2b9"/><rect x="168" y="168" fill="#cac4bd"/><rect x="176" y="168" fill="#cbc7c1"/><rect x="184" y="168" fill="#cbc9c5"/><rect x="192" y="168" fill="#cccac7"/><rect x="200" y="168" fill="#cdccc9"/><rect x="208" y="168" fill="#cdcdcb"/><rect x="216" y="168" fill="#cececc"/><rect x="224" y="168" fill="#cececd"/><rect x="232" y="168" fill="#cecfcd"/><rect x="240" y="168" fill="#cecfcd"/><rect x="248" y="168" fill="#cececc"/><rect x="256" y="168" fill="#cdcdcb"/><rect x="264" y="168" fill="#cdccca"/><rect x="272" y="168" fill="#cccbc8"/><rect x="280" y="168" fill="#cccac6"/><rect x="288" y="168" fill="#cbc9c4"/><rect x="296" y="168" fill="#cbc7c2"/><rect x="304" y="168" fill="#cac5be"/><rect x="312" y="168" fill="#cac3ba"/><rect x="320" y="168" fill="#c9c1b6"/><rect x="328" y="168" fill="#c9bfb2"/><rect x="336" y="168" fill="#c8bcad"/><rect x="344" y="168" fill="#c8baa8"/><rect x="352" y="168" fill="#c7b7a4"/><rect x="360" y="168" fill="#c6b59f"/><rect x="368" y="168" fill="#c5b29b"/><rect x="376" y="168" fill="#c4af97"/><rect x="384" y="168" fill="#c3ac93"/><rect x="392" y="168" fill="#c2aa90"/><rect x="400" y="168" fill="#c0a68d"/><rect x="408" y="168" fill="#bea38a"/><rect x="416" y="168" fill="#bba087"/><rect x="424" y="168" fill="#b99c84"/><rect x="432" y="168" fill="#b69881"/><rect x="440" y="168" fill="#b3947e"/><rect x="448" y="168" fill="#af8f7a"/><rect x="456" y="168" fill="#ab8a77"/><rect x="464" y="168" fill="#a78573"/><rect x="472" y="168" fill="#a3806f"/><rect x="480" y="168" fill="#a07c6c"/><rect x="488" y="168" fill="#9f7b6b"/><rect x="496" y="168" fill="#9f7a6a"/><rect x="504" y="168" fill="#9e796a"/><rect x="0" y="176" fill="#b39582"/><rect x="8" y="176" fill="#b49683"/><rect x="16" y="176" fill="#b59783"/><rect x="24" y="176" fill="#b59884"/><rect x="32" y="176" fill="#b69986"/><rect x="40" y="176" fill="#b99c88"/><rect x="48" y="176" fill="#ba9f8b"/><rect x="56" y="176" fill="#bca28d"/><rect x="64" y="176" fill="#bea590"/><rect x="72" y="176" fill="#bfa792"/><rect x="80" y="176" fill="#c0aa95"/><rect x="88" y="176" fill="#c2ac98"/><rect x="96" y="176" fill="#c3ae9a"/><rect x="104" y="176" fill="#c3b19d"/><rect x="112" y="176" fill="#c4b3a0"/><rect x="120" y="176" fill="#c5b5a4"/><rect x="128" y="176" fill="#c6b7a7"/><rect x="136" y="176" fill="#c7baab"/><rect x="144" y="176" fill="#c7bcaf"/><rect x="152" y="176" fill="#c8bfb4"/><rect x="160" y="176" fill="#c9c2b8"/><rect x="168" y="176" fill="#cac4bd"/><rect x="176" y="176" fill="#cac7c1"/><rect x="184" y="176" fill="#cbc9c4"/><rect x="192" y="176" fill="#cccac6"/><rect x="200" y="176" fill="#ccccc8"/><rect x="208" y="176" fill="#cdcdca"/><rect x="216" y="176" fill="#cdcdcb"/><rect x="224" y="176" fill="#cdcecc"/><rect x="232" y="176" fill="#cdcecc"/><rect x="240" y="176" fill="#cdcecc"/><rect x="248" y="176" fill="#cdcecb"/><rect x="256" y="176" fill="#cdcdca"/><rect x="264" y="176" fill="#ccccc9"/><rect x="272" y="176" fill="#cccbc8"/><rect x="280" y="176" fill="#cbcac6"/><rect x="288" y="176" fill="#cbc8c4"/><rect x="296" y="176" fill="#cac7c1"/><rect x="304" y="176" fill="#cac5be"/><rect x="312" y="176" fill="#c9c3ba"/><rect x="320" y="176" fill="#c9c1b5"/><rect x="328" y="176" fill="#c8beb1"/><rect x="336" y="176" fill="#c8bcac"/><rect x="344" y="176" fill="#c7b9a7"/><rect x="352" y="176" fill="#c7b7a3"/><rect x="360" y="176" fill="#c6b49e"/><rect x="368" y="176" fill="#c5b19a"/><rect x="376" y="176" fill="#c4af95"/><rect x="384" y="176" fill="#c3ac92"/><rect x="392" y="176" fill="#c1a98f"/><rect x="400" y="176" fill="#bfa68c"/><rect x="408" y="176" fill="#bda289"/><rect x="416" y="176" fill="#bb9f86"/><rect x="424" y="176" fill="#b89b83"/><rect x="432" y="176" fill="#b69780"/><rect x="440" y="176" fill="#b2937c"/><rect x="448" y="176" fill="#af8e79"/><rect x="456" y="176" fill="#ab8975"/><rect x="464" y="176" fill="#a78471"/><rect x="472" y="176" fill="#a27e6d"/><rect x="480" y="176" fill="#9e796a"/><rect x="488" y="176" fill="#9e7869"/><rect x="496" y="176" fill="#9d7768"/><rect x="504" y="176" fill="#9d7768"/><rect x="0" y="184" fill="#b2927f"/><rect x="8" y="184" fill="#b29280"/><rect x="16" y="184" fill="#b39381"/><rect x="24" y="184" fill="#b39482"/><rect x="32" y="184" fill="#b59784"/><rect x="40" y="184" fill="#b79a86"/><rect x="48" y="184" fill="#b99d89"/><rect x="56" y="184" fill="#bba08b"/><rect x="64" y="184" fill="#bda38e"/><rect x="72" y="184" fill="#bfa691"/><rect x="80" y="184" fill="#c0a893"/><rect x="88" y="184" fill="#c1ab96"/><rect x="96" y="184" fill="#c2ad99"/><rect x="104" y="184" fill="#c3b09c"/><rect x="112" y="184" fill="#c4b29f"/><rect x="120" y="184" fill="#c5b4a2"/><rect x="128" y="184" fill="#c6b7a6"/><rect x="136" y="184" fill="#c6b9aa"/><rect x="144" y="184" fill="#c7bcae"/><rect x="152" y="184" fill="#c8beb2"/><rect x="160" y="184" fill="#c9c1b7"/><rect x="168" y="184" fill="#c9c3bb"/><rect x="176" y="184" fill="#cac6bf"/><rect x="184" y="184" fill="#cbc8c2"/><rect x="192" y="184" fill="#cbc9c5"/><rect x="200" y="184" fill="#cccbc7"/><rect x="208" y="184" fill="#ccccc8"/><rect x="216" y="184" fill="#cdccc9"/><rect x="224" y="184" fill="#cdcdca"/><rect x="232" y="184" fill="#cdcdca"/><rect x="240" y="184" fill="#cdcdca"/><rect x="248" y="184" fill="#cccdca"/><rect x="256" y="184" fill="#ccccc9"/><rect x="264" y="184" fill="#cccbc8"/><rect x="272" y="184" fill="#cbcac6"/><rect x="280" y="184" fill="#cbc9c4"/><rect x="288" y="184" fill="#cac8c2"/><rect x="296" y="184" fill="#cac6bf"/><rect x="304" y="184" fill="#c9c4bc"/><rect x="312" y="184" fill="#c9c2b8"/><rect x="320" y="184" fill="#c9c0b4"/><rect x="328" y="184" fill="#c8beaf"/><rect x="336" y="184" fill="#c8bbab"/><rect x="344" y="184" fill="#c7b9a6"/><rect x="352" y="184" fill="#c6b6a1"/><rect x="360" y="184" fill="#c6b39d"/><rect x="368" y="184" fill="#c5b198"/><rect x="376" y="184" fill="#c4ae94"/><rect x="384" y="184" fill="#c2ab91"/><rect x="392" y="184" fill="#c1a88d"/><rect x="400" y="184" fill="#bfa58a"/><rect x="408" y="184" fill="#bda187"/><rect x="416" y="184" fill="#bb9e85"/><rect x="424" y="184" fill="#b89a82"/><rect x="432" y="184" fill="#b5967e"/><rect x="440" y="184" fill="#b2917b"/><rect x="448" y="184" fill="#af8d78"/><rect x="456" y="184" fill="#ab8874"/><rect x="464" y="184" fill="#a78270"/><rect x="472" y="184" fill="#a27d6c"/><rect x="480" y="184" fill="#9e7869"/><rect x="488" y="184" fill="#9c7667"/><rect x="496" y="184" fill="#9c7566"/><rect x="504" y="184" fill="#9b7466"/><rect x="512" y="184" fill="#9b7465"/><rect x="0" y="192" fill="#b08f7d"/><rect x="8" y="192" fill="#b08f7d"/><rect x="16" y="192" fill="#b1907e"/><rect x="24" y="192" fill="#b1917f"/><rect x="32" y="192" fill="#b49581"/><rect x="40" y="192" fill="#b69884"/><rect x="48" y="192" fill="#b89b87"/><rect x="56" y="192" fill="#ba9f8a"/><rect x="64" y="192" fill="#bca28c"/><rect x="72" y="192" fill="#bea48f"/><rect x="80" y="192" fill="#bfa792"/><rect x="88" y="192" fill="#c1aa95"/><rect x="96" y="192" fill="#c2ac97"/><rect x="104" y="192" fill="#c3af9a"/><rect x="112" y="192" fill="#c4b19e"/><rect x="120" y="192" fill="#c5b3a1"/><rect x="128" y="192" fill="#c5b6a4"/><rect x="136" y="192" fill="#c6b8a8"/><rect x="144" y="192" fill="#c7bbac"/><rect x="152" y="192" fill="#c8bdb1"/><rect x="160" y="192" fill="#c8c0b5"/><rect x="168" y="192" fill="#c9c2b9"/><rect x="176" y="192" fill="#cac4bc"/><rect x="184" y="192" fill="#cac6c0"/><rect x="192" y="192" fill="#cbc8c2"/><rect x="200" y="192" fill="#cbc9c4"/><rect x="208" y="192" fill="#cccac6"/><rect x="216" y="192" fill="#cccbc7"/><rect x="224" y="192" fill="#ccccc8"/><rect x="232" y="192" fill="#ccccc8"/><rect x="240" y="192" fill="#ccccc8"/><rect x="248" y="192" fill="#cccbc8"/><rect x="256" y="192" fill="#cbcbc7"/><rect x="264" y="192" fill="#cbcac6"/><rect x="272" y="192" fill="#cbc9c4"/><rect x="280" y="192" fill="#cac8c2"/><rect x="288" y="192" fill="#cac6c0"/><rect x="296" y="192" fill="#c9c5bd"/><rect x="304" y="192" fill="#c9c3ba"/><rect x="312" y="192" fill="#c9c1b6"/><rect x="320" y="192" fill="#c8bfb2"/><rect x="328" y="192" fill="#c8bdae"/><rect x="336" y="192" fill="#c7baa9"/><rect x="344" y="192" fill="#c6b8a4"/><rect x="352" y="192" fill="#c6b5a0"/><rect x="360" y="192" fill="#c5b29b"/><rect x="368" y="192" fill="#c4b097"/><rect x="376" y="192" fill="#c3ad93"/><rect x="384" y="192" fill="#c2aa90"/><rect x="392" y="192" fill="#c0a78c"/><rect x="400" y="192" fill="#bfa489"/><rect x="408" y="192" fill="#bda086"/><rect x="416" y="192" fill="#bb9d83"/><rect x="424" y="192" fill="#b89981"/><rect x="432" y="192" fill="#b5957d"/><rect x="440" y="192" fill="#b2907a"/><rect x="448" y="192" fill="#af8c77"/><rect x="456" y="192" fill="#ab8773"/><rect x="464" y="192" fill="#a7826f"/><rect x="472" y="192" fill="#a27c6c"/><rect x="480" y="192" fill="#9e7768"/><rect x="488" y="192" fill="#9b7365"/><rect x="496" y="192" fill="#9a7365"/><rect x="504" y="192" fill="#9a7264"/><rect x="512" y="192" fill="#9a7164"/><rect x="0" y="200" fill="#ad8b7a"/><rect x="8" y="200" fill="#ae8c7b"/><rect x="16" y="200" fill="#ae8d7b"/><rect x="24" y="200" fill="#b08e7d"/><rect x="32" y="200" fill="#b2927f"/><rect x="40" y="200" fill="#b59682"/><rect x="48" y="200" fill="#b79985"/><rect x="56" y="200" fill="#ba9d88"/><rect x="64" y="200" fill="#bca08a"/><rect x="72" y="200" fill="#bda38d"/><rect x="80" y="200" fill="#bfa690"/><rect x="88" y="200" fill="#c0a893"/><rect x="96" y="200" fill="#c1ab96"/><rect x="104" y="200" fill="#c2ae99"/><rect x="112" y="200" fill="#c3b09c"/><rect x="120" y="200" fill="#c4b29f"/><rect x="128" y="200" fill="#c5b5a3"/><rect x="136" y="200" fill="#c6b7a6"/><rect x="144" y="200" fill="#c7baaa"/><rect x="152" y="200" fill="#c7bcae"/><rect x="160" y="200" fill="#c8bfb2"/><rect x="168" y="200" fill="#c9c1b6"/><rect x="176" y="200" fill="#c9c3ba"/><rect x="184" y="200" fill="#cac5bd"/><rect x="192" y="200" fill="#cac6bf"/><rect x="200" y="200" fill="#cbc8c1"/><rect x="208" y="200" fill="#cbc8c3"/><rect x="216" y="200" fill="#cbc9c4"/><rect x="224" y="200" fill="#cbcac4"/><rect x="232" y="200" fill="#cbcac5"/><rect x="240" y="200" fill="#cbcac5"/><rect x="248" y="200" fill="#cbcac5"/><rect x="256" y="200" fill="#cbc9c4"/><rect x="264" y="200" fill="#cac8c3"/><rect x="272" y="200" fill="#cac7c1"/><rect x="280" y="200" fill="#cac6bf"/><rect x="288" y="200" fill="#c9c5bd"/><rect x="296" y="200" fill="#c9c3ba"/><rect x="304" y="200" fill="#c8c2b7"/><rect x="312" y="200" fill="#c8c0b3"/><rect x="320" y="200" fill="#c7beb0"/><rect x="328" y="200" fill="#c7bbab"/><rect x="336" y="200" fill="#c6b9a7"/><rect x="344" y="200" fill="#c6b7a3"/><rect x="352" y="200" fill="#c5b49e"/><rect x="360" y="200" fill="#c4b19a"/><rect x="368" y="200" fill="#c4af96"/><rect x="376" y="200" fill="#c3ac92"/><rect x="384" y="200" fill="#c1a98f"/><rect x="392" y="200" fill="#c0a68b"/><rect x="400" y="200" fill="#bea388"/><rect x="408" y="200" fill="#bc9f85"/><rect x="416" y="200" fill="#ba9c82"/><rect x="424" y="200" fill="#b89880"/><rect x="432" y="200" fill="#b5947d"/><rect x="440" y="200" fill="#b28f79"/><rect x="448" y="200" fill="#af8b76"/><rect x="456" y="200" fill="#ab8672"/><rect x="464" y="200" fill="#a7816f"/><rect x="472" y="200" fill="#a27b6b"/><rect x="480" y="200" fill="#9e7667"/><rect x="488" y="200" fill="#997163"/><rect x="496" y="200" fill="#997063"/><rect x="504" y="200" fill="#997062"/><rect x="512" y="200" fill="#986f62"/><rect x="0" y="208" fill="#ab8878"/><rect x="8" y="208" fill="#ac8978"/><rect x="16" y="208" fill="#ac8979"/><rect x="24" y="208" fill="#ae8c7a"/><rect x="32" y="208" fill="#b1907d"/><rect x="40" y="208" fill="#b49480"/><rect x="48" y="208" fill="#b69783"/><rect x="56" y="208" fill="#b99b86"/><rect x="64" y="208" fill="#bb9e89"/><rect x="72" y="208" fill="#bda18b"/><rect x="80" y="208" fill="#bea48e"/><rect x="88" y="208" fill="#c0a791"/><rect x="96" y="208" fill="#c1aa94"/><rect x="104" y="208" fill="#c2ac97"/><rect x="112" y="208" fill="#c3af9a"/><rect x="120" y="208" fill="#c4b19d"/><rect x="128" y="208" fill="#c5b4a1"/><rect x="136" y="208" fill="#c5b6a4"/><rect x="144" y="208" fill="#c6b8a8"/><rect x="152" y="208" fill="#c7bbac"/><rect x="160" y="208" fill="#c7bdaf"/><rect x="168" y="208" fill="#c8bfb3"/><rect x="176" y="208" fill="#c9c1b6"/><rect x="184" y="208" fill="#c9c3b9"/><rect x="192" y="208" fill="#cac4bb"/><rect x="200" y="208" fill="#cac5bd"/><rect x="208" y="208" fill="#cac6bf"/><rect x="216" y="208" fill="#cac7c0"/><rect x="224" y="208" fill="#cac7c1"/><rect x="232" y="208" fill="#cac8c1"/><rect x="240" y="208" fill="#cac8c1"/><rect x="248" y="208" fill="#cac7c1"/><rect x="256" y="208" fill="#cac7c0"/><rect x="264" y="208" fill="#cac6bf"/><rect x="272" y="208" fill="#c9c5bd"/><rect x="280" y="208" fill="#c9c4bc"/><rect x="288" y="208" fill="#c9c3b9"/><rect x="296" y="208" fill="#c8c1b7"/><rect x="304" y="208" fill="#c8c0b4"/><rect x="312" y="208" fill="#c7beb0"/><rect x="320" y="208" fill="#c7bcad"/><rect x="328" y="208" fill="#c6baa9"/><rect x="336" y="208" fill="#c6b8a5"/><rect x="344" y="208" fill="#c5b5a1"/><rect x="352" y="208" fill="#c4b39c"/><rect x="360" y="208" fill="#c4b098"/><rect x="368" y="208" fill="#c3ad95"/><rect x="376" y="208" fill="#c2ab91"/><rect x="384" y="208" fill="#c1a88d"/><rect x="392" y="208" fill="#bfa58a"/><rect x="400" y="208" fill="#bea287"/><rect x="408" y="208" fill="#bc9e84"/><rect x="416" y="208" fill="#ba9b82"/><rect x="424" y="208" fill="#b7977f"/><rect x="432" y="208" fill="#b5937c"/><rect x="440" y="208" fill="#b28f78"/><rect x="448" y="208" fill="#ae8a75"/><rect x="456" y="208" fill="#ab8572"/><rect x="464" y="208" fill="#a7806e"/><rect x="472" y="208" fill="#a27a6a"/><rect x="480" y="208" fill="#9d7566"/><rect x="488" y="208" fill="#986f62"/><rect x="496" y="208" fill="#976e61"/><rect x="504" y="208" fill="#976d61"/><rect x="512" y="208" fill="#966d60"/><rect x="0" y="216" fill="#a98575"/><rect x="8" y="216" fill="#a98575"/><rect x="16" y="216" fill="#aa8676"/><rect x="24" y="216" fill="#ac8978"/><rect x="32" y="216" fill="#af8d7b"/><rect x="40" y="216" fill="#b2917e"/><rect x="48" y="216" fill="#b59581"/><rect x="56" y="216" fill="#b89984"/><rect x="64" y="216" fill="#ba9d87"/><rect x="72" y="216" fill="#bca08a"/><rect x="80" y="216" fill="#bea38c"/><rect x="88" y="216" fill="#bfa68f"/><rect x="96" y="216" fill="#c0a992"/><rect x="104" y="216" fill="#c2ab95"/><rect x="112" y="216" fill="#c3ae98"/><rect x="120" y="216" fill="#c3b09b"/><rect x="128" y="216" fill="#c4b29f"/><rect x="136" y="216" fill="#c5b5a2"/><rect x="144" y="216" fill="#c6b7a5"/><rect x="152" y="216" fill="#c6b9a9"/><rect x="160" y="216" fill="#c7bbac"/><rect x="168" y="216" fill="#c7bdb0"/><rect x="176" y="216" fill="#c8bfb3"/><rect x="184" y="216" fill="#c8c1b5"/><rect x="192" y="216" fill="#c9c2b7"/><rect x="200" y="216" fill="#c9c3b9"/><rect x="208" y="216" fill="#c9c4bb"/><rect x="216" y="216" fill="#c9c5bc"/><rect x="224" y="216" fill="#cac5bd"/><rect x="232" y="216" fill="#c9c5bd"/><rect x="240" y="216" fill="#c9c5bd"/><rect x="248" y="216" fill="#c9c5bc"/><rect x="256" y="216" fill="#c9c4bc"/><rect x="264" y="216" fill="#c9c4bb"/><rect x="272" y="216" fill="#c8c3b9"/><rect x="280" y="216" fill="#c8c2b7"/><rect x="288" y="216" fill="#c8c1b5"/><rect x="296" y="216" fill="#c7bfb3"/><rect x="304" y="216" fill="#c7beb0"/><rect x="312" y="216" fill="#c6bcad"/><rect x="320" y="216" fill="#c6baa9"/><rect x="328" y="216" fill="#c5b8a6"/><rect x="336" y="216" fill="#c5b6a2"/><rect x="344" y="216" fill="#c4b49e"/><rect x="352" y="216" fill="#c3b19a"/><rect x="360" y="216" fill="#c3af97"/><rect x="368" y="216" fill="#c2ac93"/><rect x="376" y="216" fill="#c1a98f"/><rect x="384" y="216" fill="#c0a68c"/><rect x="392" y="216" fill="#bea389"/><rect x="400" y="216" fill="#bda086"/><rect x="408" y="216" fill="#bb9d83"/><rect x="416" y="216" fill="#b99980"/><rect x="424" y="216" fill="#b7967e"/><rect x="432" y="216" fill="#b4927b"/><rect x="440" y="216" fill="#b18d78"/><rect x="448" y="216" fill="#ae8974"/><rect x="456" y="216" fill="#aa8471"/><rect x="464" y="216" fill="#a67f6d"/><rect x="472" y="216" fill="#a27969"/><rect x="480" y="216" fill="#9d7365"/><rect x="488" y="216" fill="#976d60"/><rect x="496" y="216" fill="#956b5f"/><rect x="504" y="216" fill="#946a5f"/><rect x="512" y="216" fill="#946a5e"/><rect x="0" y="224" fill="#a78272"/><rect x="8" y="224" fill="#a78273"/><rect x="16" y="224" fill="#a78273"/><rect x="24" y="224" fill="#aa8676"/><rect x="32" y="224" fill="#ae8b79"/><rect x="40" y="224" fill="#b18f7c"/><rect x="48" y="224" fill="#b4937f"/><rect x="56" y="224" fill="#b79782"/><rect x="64" y="224" fill="#b99b85"/><rect x="72" y="224" fill="#bb9e88"/><rect x="80" y="224" fill="#bda18b"/><rect x="88" y="224" fill="#bfa48d"/><rect x="96" y="224" fill="#c0a790"/><rect x="104" y="224" fill="#c1aa93"/><rect x="112" y="224" fill="#c2ac96"/><rect x="120" y="224" fill="#c3ae99"/><rect x="128" y="224" fill="#c4b19c"/><rect x="136" y="224" fill="#c4b39f"/><rect x="144" y="224" fill="#c5b5a3"/><rect x="152" y="224" fill="#c6b7a6"/><rect x="160" y="224" fill="#c6b9a9"/><rect x="168" y="224" fill="#c7bbac"/><rect x="176" y="224" fill="#c7bdaf"/><rect x="184" y="224" fill="#c8beb1"/><rect x="192" y="224" fill="#c8bfb3"/><rect x="200" y="224" fill="#c8c0b5"/><rect x="208" y="224" fill="#c8c1b6"/><rect x="216" y="224" fill="#c9c2b7"/><rect x="224" y="224" fill="#c9c2b8"/><rect x="232" y="224" fill="#c9c2b8"/><rect x="240" y="224" fill="#c8c2b8"/><rect x="248" y="224" fill="#c8c2b8"/><rect x="256" y="224" fill="#c8c1b7"/><rect x="264" y="224" fill="#c8c1b6"/><rect x="272" y="224" fill="#c7c0b5"/><rect x="280" y="224" fill="#c7bfb3"/><rect x="288" y="224" fill="#c7beb1"/><rect x="296" y="224" fill="#c6bdaf"/><rect x="304" y="224" fill="#c6bbac"/><rect x="312" y="224" fill="#c5baa9"/><rect x="320" y="224" fill="#c5b8a6"/><rect x="328" y="224" fill="#c4b6a3"/><rect x="336" y="224" fill="#c4b49f"/><rect x="344" y="224" fill="#c3b29c"/><rect x="352" y="224" fill="#c2af98"/><rect x="360" y="224" fill="#c2ad95"/><rect x="368" y="224" fill="#c1aa91"/><rect x="376" y="224" fill="#c0a88e"/><rect x="384" y="224" fill="#bfa58b"/><rect x="392" y="224" fill="#bea288"/><rect x="400" y="224" fill="#bc9f85"/><rect x="408" y="224" fill="#ba9c82"/><rect x="416" y="224" fill="#b9987f"/><rect x="424" y="224" fill="#b6947d"/><rect x="432" y="224" fill="#b4907a"/><rect x="440" y="224" fill="#b18c77"/><rect x="448" y="224" fill="#ad8873"/><rect x="456" y="224" fill="#aa8370"/><rect x="464" y="224" fill="#a67d6c"/><rect x="472" y="224" fill="#a17868"/><rect x="480" y="224" fill="#9b7164"/><rect x="488" y="224" fill="#956b5f"/><rect x="496" y="224" fill="#92675d"/><rect x="504" y="224" fill="#92675c"/><rect x="512" y="224" fill="#91675c"/><rect x="0" y="232" fill="#a57e70"/><rect x="8" y="232" fill="#a57f70"/><rect x="16" y="232" fill="#a57f70"/><rect x="24" y="232" fill="#a98373"/><rect x="32" y="232" fill="#ac8877"/><rect x="40" y="232" fill="#b08d7a"/><rect x="48" y="232" fill="#b3917d"/><rect x="56" y="232" fill="#b69580"/><rect x="64" y="232" fill="#b89983"/><rect x="72" y="232" fill="#ba9d86"/><rect x="80" y="232" fill="#bca089"/><rect x="88" y="232" fill="#bea38b"/><rect x="96" y="232" fill="#bfa68e"/><rect x="104" y="232" fill="#c0a891"/><rect x="112" y="232" fill="#c1ab94"/><rect x="120" y="232" fill="#c2ad97"/><rect x="128" y="232" fill="#c3af9a"/><rect x="136" y="232" fill="#c4b19d"/><rect x="144" y="232" fill="#c4b39f"/><rect x="152" y="232" fill="#c5b5a2"/><rect x="160" y="232" fill="#c5b7a5"/><rect x="168" y="232" fill="#c6b9a8"/><rect x="176" y="232" fill="#c6baab"/><rect x="184" y="232" fill="#c7bcad"/><rect x="192" y="232" fill="#c7bdaf"/><rect x="200" y="232" fill="#c7beb0"/><rect x="208" y="232" fill="#c8beb2"/><rect x="216" y="232" fill="#c8bfb3"/><rect x="224" y="232" fill="#c8bfb3"/><rect x="232" y="232" fill="#c8bfb3"/><rect x="240" y="232" fill="#c7bfb3"/><rect x="248" y="232" fill="#c7bfb3"/><rect x="256" y="232" fill="#c7beb2"/><rect x="264" y="232" fill="#c7beb1"/><rect x="272" y="232" fill="#c6bdb0"/><rect x="280" y="232" fill="#c6bcae"/><rect x="288" y="232" fill="#c6bbad"/><rect x="296" y="232" fill="#c5baaa"/><rect x="304" y="232" fill="#c5b9a8"/><rect x="312" y="232" fill="#c4b7a5"/><rect x="320" y="232" fill="#c4b6a2"/><rect x="328" y="232" fill="#c3b49f"/><rect x="336" y="232" fill="#c3b29c"/><rect x="344" y="232" fill="#c2b099"/><rect x="352" y="232" fill="#c1ad96"/><rect x="360" y="232" fill="#c1ab92"/><rect x="368" y="232" fill="#c0a98f"/><rect x="376" y="232" fill="#bfa68c"/><rect x="384" y="232" fill="#bea389"/><rect x="392" y="232" fill="#bda086"/><rect x="400" y="232" fill="#bb9d84"/><rect x="408" y="232" fill="#ba9a81"/><rect x="416" y="232" fill="#b8977e"/><rect x="424" y="232" fill="#b5937b"/><rect x="432" y="232" fill="#b38f79"/><rect x="440" y="232" fill="#b08b76"/><rect x="448" y="232" fill="#ad8672"/><rect x="456" y="232" fill="#a9816f"/><rect x="464" y="232" fill="#a47c6b"/><rect x="472" y="232" fill="#9f7667"/><rect x="480" y="232" fill="#996f62"/><rect x="488" y="232" fill="#92685d"/><rect x="496" y="232" fill="#8f645a"/><rect x="504" y="232" fill="#8e635a"/><rect x="512" y="232" fill="#8e635a"/><rect x="0" y="240" fill="#a27b6d"/><rect x="8" y="240" fill="#a27b6e"/><rect x="16" y="240" fill="#a27b6e"/><rect x="24" y="240" fill="#a78171"/><rect x="32" y="240" fill="#ab8675"/><rect x="40" y="240" fill="#af8b78"/><rect x="48" y="240" fill="#b28f7b"/><rect x="56" y="240" fill="#b5947e"/><rect x="64" y="240" fill="#b79781"/><rect x="72" y="240" fill="#ba9b84"/><rect x="80" y="240" fill="#bb9e87"/><rect x="88" y="240" fill="#bda189"/><rect x="96" y="240" fill="#bea48c"/><rect x="104" y="240" fill="#c0a68f"/><rect x="112" y="240" fill="#c1a991"/><rect x="120" y="240" fill="#c1ab94"/><rect x="128" y="240" fill="#c2ad97"/><rect x="136" y="240" fill="#c3af9a"/><rect x="144" y="240" fill="#c3b19c"/><rect x="152" y="240" fill="#c4b39f"/><rect x="160" y="240" fill="#c5b5a2"/><rect x="168" y="240" fill="#c5b6a4"/><rect x="176" y="240" fill="#c5b8a6"/><rect x="184" y="240" fill="#c6b9a9"/><rect x="192" y="240" fill="#c6baaa"/><rect x="200" y="240" fill="#c6bbac"/><rect x="208" y="240" fill="#c7bcad"/><rect x="216" y="240" fill="#c7bcae"/><rect x="224" y="240" fill="#c7bcae"/><rect x="232" y="240" fill="#c7bcae"/><rect x="240" y="240" fill="#c6bcae"/><rect x="248" y="240" fill="#c6bcad"/><rect x="256" y="240" fill="#c6bbad"/><rect x="264" y="240" fill="#c6bbac"/><rect x="272" y="240" fill="#c5baab"/><rect x="280" y="240" fill="#c5b9a9"/><rect x="288" y="240" fill="#c5b9a8"/><rect x="296" y="240" fill="#c4b7a6"/><rect x="304" y="240" fill="#c4b6a4"/><rect x="312" y="240" fill="#c3b5a1"/><rect x="320" y="240" fill="#c3b39f"/><rect x="328" y="240" fill="#c2b19c"/><rect x="336" y="240" fill="#c1b099"/><rect x="344" y="240" fill="#c1ae96"/><rect x="352" y="240" fill="#c0ab93"/><rect x="360" y="240" fill="#bfa990"/><rect x="368" y="240" fill="#bea78d"/><rect x="376" y="240" fill="#bea48a"/><rect x="384" y="240" fill="#bda187"/><rect x="392" y="240" fill="#bb9f85"/><rect x="400" y="240" fill="#ba9c82"/><rect x="408" y="240" fill="#b8987f"/><rect x="416" y="240" fill="#b6957d"/><rect x="424" y="240" fill="#b4917a"/><rect x="432" y="240" fill="#b28d77"/><rect x="440" y="240" fill="#af8974"/><rect x="448" y="240" fill="#ab8471"/><rect x="456" y="240" fill="#a77f6e"/><rect x="464" y="240" fill="#a37a6a"/><rect x="472" y="240" fill="#9d7366"/><rect x="480" y="240" fill="#976c61"/><rect x="488" y="240" fill="#90655b"/><rect x="496" y="240" fill="#8b6057"/><rect x="504" y="240" fill="#8b6057"/><rect x="512" y="240" fill="#8a5f57"/><rect x="0" y="248" fill="#a0786b"/><rect x="8" y="248" fill="#a0786b"/><rect x="16" y="248" fill="#a0786b"/><rect x="24" y="248" fill="#a57e6f"/><rect x="32" y="248" fill="#aa8473"/><rect x="40" y="248" fill="#ad8976"/><rect x="48" y="248" fill="#b18d79"/><rect x="56" y="248" fill="#b4927c"/><rect x="64" y="248" fill="#b6967f"/><rect x="72" y="248" fill="#b89982"/><rect x="80" y="248" fill="#ba9d84"/><rect x="88" y="248" fill="#bca087"/><rect x="96" y="248" fill="#bda28a"/><rect x="104" y="248" fill="#bfa58c"/><rect x="112" y="248" fill="#c0a78f"/><rect x="120" y="248" fill="#c1a991"/><rect x="128" y="248" fill="#c1ab94"/><rect x="136" y="248" fill="#c2ad96"/><rect x="144" y="248" fill="#c3af99"/><rect x="152" y="248" fill="#c3b09b"/><rect x="160" y="248" fill="#c4b29e"/><rect x="168" y="248" fill="#c4b4a0"/><rect x="176" y="248" fill="#c4b5a2"/><rect x="184" y="248" fill="#c5b6a4"/><rect x="192" y="248" fill="#c5b7a6"/><rect x="200" y="248" fill="#c5b8a7"/><rect x="208" y="248" fill="#c6b9a8"/><rect x="216" y="248" fill="#c6b9a9"/><rect x="224" y="248" fill="#c6b9a9"/><rect x="232" y="248" fill="#c6b9a9"/><rect x="240" y="248" fill="#c5b9a9"/><rect x="248" y="248" fill="#c5b8a8"/><rect x="256" y="248" fill="#c5b8a7"/><rect x="264" y="248" fill="#c5b8a7"/><rect x="272" y="248" fill="#c4b7a6"/><rect x="280" y="248" fill="#c4b6a5"/><rect x="288" y="248" fill="#c4b6a3"/><rect x="296" y="248" fill="#c3b5a2"/><rect x="304" y="248" fill="#c3b3a0"/><rect x="312" y="248" fill="#c2b29d"/><rect x="320" y="248" fill="#c2b19b"/><rect x="328" y="248" fill="#c1af98"/><rect x="336" y="248" fill="#c0ad96"/><rect x="344" y="248" fill="#bfab93"/><rect x="352" y="248" fill="#bfa990"/><rect x="360" y="248" fill="#bea78d"/><rect x="368" y="248" fill="#bda58b"/><rect x="376" y="248" fill="#bca288"/><rect x="384" y="248" fill="#bb9f85"/><rect x="392" y="248" fill="#ba9d83"/><rect x="400" y="248" fill="#b99a80"/><rect x="408" y="248" fill="#b7977e"/><rect x="416" y="248" fill="#b5937b"/><rect x="424" y="248" fill="#b38f79"/><rect x="432" y="248" fill="#b08b76"/><rect x="440" y="248" fill="#ad8773"/><rect x="448" y="248" fill="#aa8270"/><rect x="456" y="248" fill="#a67d6c"/><rect x="464" y="248" fill="#a17768"/><rect x="472" y="248" fill="#9b7164"/><rect x="480" y="248" fill="#956a5f"/><rect x="488" y="248" fill="#8c6159"/><rect x="496" y="248" fill="#875c55"/><rect x="504" y="248" fill="#875c55"/><rect x="512" y="248" fill="#875c54"/><rect x="0" y="256" fill="#9e7569"/><rect x="8" y="256" fill="#9e7569"/><rect x="16" y="256" fill="#9e7669"/><rect x="24" y="256" fill="#a37c6d"/><rect x="32" y="256" fill="#a88271"/><rect x="40" y="256" fill="#ac8774"/><rect x="48" y="256" fill="#af8b77"/><rect x="56" y="256" fill="#b2907a"/><rect x="64" y="256" fill="#b5947d"/><rect x="72" y="256" fill="#b79780"/><rect x="80" y="256" fill="#b99b82"/><rect x="88" y="256" fill="#bb9e85"/><rect x="96" y="256" fill="#bca087"/><rect x="104" y="256" fill="#bea38a"/><rect x="112" y="256" fill="#bfa58c"/><rect x="120" y="256" fill="#c0a78f"/><rect x="128" y="256" fill="#c0a991"/><rect x="136" y="256" fill="#c1ab93"/><rect x="144" y="256" fill="#c2ac96"/><rect x="152" y="256" fill="#c2ae98"/><rect x="160" y="256" fill="#c3af9a"/><rect x="168" y="256" fill="#c3b19c"/><rect x="176" y="256" fill="#c3b29e"/><rect x="184" y="256" fill="#c4b3a0"/><rect x="192" y="256" fill="#c4b4a1"/><rect x="200" y="256" fill="#c4b5a3"/><rect x="208" y="256" fill="#c4b6a3"/><rect x="216" y="256" fill="#c4b6a4"/><rect x="224" y="256" fill="#c4b6a4"/><rect x="232" y="256" fill="#c4b6a4"/><rect x="240" y="256" fill="#c4b6a4"/><rect x="248" y="256" fill="#c4b5a3"/><rect x="256" y="256" fill="#c4b5a2"/><rect x="264" y="256" fill="#c4b4a2"/><rect x="272" y="256" fill="#c3b4a1"/><rect x="280" y="256" fill="#c3b3a0"/><rect x="288" y="256" fill="#c2b39f"/><rect x="296" y="256" fill="#c2b29d"/><rect x="304" y="256" fill="#c1b19b"/><rect x="312" y="256" fill="#c1af99"/><rect x="320" y="256" fill="#c0ae97"/><rect x="328" y="256" fill="#c0ac95"/><rect x="336" y="256" fill="#bfab92"/><rect x="344" y="256" fill="#bea990"/><rect x="352" y="256" fill="#bda78d"/><rect x="360" y="256" fill="#bca58b"/><rect x="368" y="256" fill="#bca288"/><rect x="376" y="256" fill="#bba086"/><rect x="384" y="256" fill="#ba9d83"/><rect x="392" y="256" fill="#b99b81"/><rect x="400" y="256" fill="#b7987e"/><rect x="408" y="256" fill="#b5947c"/><rect x="416" y="256" fill="#b39179"/><rect x="424" y="256" fill="#b18d77"/><rect x="432" y="256" fill="#ae8974"/><rect x="440" y="256" fill="#ab8571"/><rect x="448" y="256" fill="#a7806e"/><rect x="456" y="256" fill="#a37b6a"/><rect x="464" y="256" fill="#9e7567"/><rect x="472" y="256" fill="#996f62"/><rect x="480" y="256" fill="#92675d"/><rect x="488" y="256" fill="#895e57"/><rect x="496" y="256" fill="#845952"/><rect x="504" y="256" fill="#845952"/><rect x="512" y="256" fill="#845952"/><rect x="0" y="264" fill="#9c7367"/><rect x="8" y="264" fill="#9c7367"/><rect x="16" y="264" fill="#9c7367"/><rect x="24" y="264" fill="#a1796b"/><rect x="32" y="264" fill="#a67f6f"/><rect x="40" y="264" fill="#aa8472"/><rect x="48" y="264" fill="#ae8975"/><rect x="56" y="264" fill="#b18e78"/><rect x="64" y="264" fill="#b4927b"/><rect x="72" y="264" fill="#b6957d"/><rect x="80" y="264" fill="#b89980"/><rect x="88" y="264" fill="#ba9c83"/><rect x="96" y="264" fill="#bb9e85"/><rect x="104" y="264" fill="#bda187"/><rect x="112" y="264" fill="#bea38a"/><rect x="120" y="264" fill="#bea58c"/><rect x="128" y="264" fill="#bfa78e"/><rect x="136" y="264" fill="#c0a890"/><rect x="144" y="264" fill="#c0aa92"/><rect x="152" y="264" fill="#c1ab94"/><rect x="160" y="264" fill="#c1ad96"/><rect x="168" y="264" fill="#c2ae98"/><rect x="176" y="264" fill="#c2af9a"/><rect x="184" y="264" fill="#c3b09c"/><rect x="192" y="264" fill="#c3b19d"/><rect x="200" y="264" fill="#c3b29e"/><rect x="208" y="264" fill="#c3b29f"/><rect x="216" y="264" fill="#c3b39f"/><rect x="224" y="264" fill="#c3b39f"/><rect x="232" y="264" fill="#c3b39f"/><rect x="240" y="264" fill="#c3b39f"/><rect x="248" y="264" fill="#c3b29e"/><rect x="256" y="264" fill="#c3b29e"/><rect x="264" y="264" fill="#c2b19d"/><rect x="272" y="264" fill="#c2b19c"/><rect x="280" y="264" fill="#c2b09b"/><rect x="288" y="264" fill="#c1b09a"/><rect x="296" y="264" fill="#c1af99"/><rect x="304" y="264" fill="#c0ae97"/><rect x="312" y="264" fill="#bfac95"/><rect x="320" y="264" fill="#bfab93"/><rect x="328" y="264" fill="#beaa91"/><rect x="336" y="264" fill="#bda88f"/><rect x="344" y="264" fill="#bda68d"/><rect x="352" y="264" fill="#bca48a"/><rect x="360" y="264" fill="#bba288"/><rect x="368" y="264" fill="#baa086"/><rect x="376" y="264" fill="#b99e83"/><rect x="384" y="264" fill="#b89b81"/><rect x="392" y="264" fill="#b7987f"/><rect x="400" y="264" fill="#b6957c"/><rect x="408" y="264" fill="#b4927a"/><rect x="416" y="264" fill="#b28f77"/><rect x="424" y="264" fill="#af8b75"/><rect x="432" y="264" fill="#ac8772"/><rect x="440" y="264" fill="#a9826f"/><rect x="448" y="264" fill="#a57d6c"/><rect x="456" y="264" fill="#a17868"/><rect x="464" y="264" fill="#9c7264"/><rect x="472" y="264" fill="#966b60"/><rect x="480" y="264" fill="#8f645b"/><rect x="488" y="264" fill="#875c55"/><rect x="496" y="264" fill="#825650"/><rect x="504" y="264" fill="#825751"/><rect x="512" y="264" fill="#825751"/><rect x="0" y="272" fill="#9b7265"/><rect x="8" y="272" fill="#9b7165"/><rect x="16" y="272" fill="#9b7165"/><rect x="24" y="272" fill="#9f7769"/><rect x="32" y="272" fill="#a47d6c"/><rect x="40" y="272" fill="#a88270"/><rect x="48" y="272" fill="#ac8773"/><rect x="56" y="272" fill="#af8c76"/><rect x="64" y="272" fill="#b29079"/><rect x="72" y="272" fill="#b4937b"/><rect x="80" y="272" fill="#b6977e"/><rect x="88" y="272" fill="#b89a80"/><rect x="96" y="272" fill="#ba9c83"/><rect x="104" y="272" fill="#bb9f85"/><rect x="112" y="272" fill="#bca187"/><rect x="120" y="272" fill="#bda389"/><rect x="128" y="272" fill="#bea48b"/><rect x="136" y="272" fill="#bfa68d"/><rect x="144" y="272" fill="#bfa78f"/><rect x="152" y="272" fill="#c0a991"/><rect x="160" y="272" fill="#c0aa93"/><rect x="168" y="272" fill="#c1ab94"/><rect x="176" y="272" fill="#c1ac96"/><rect x="184" y="272" fill="#c1ad97"/><rect x="192" y="272" fill="#c2ae99"/><rect x="200" y="272" fill="#c2af9a"/><rect x="208" y="272" fill="#c2af9a"/><rect x="216" y="272" fill="#c2b09b"/><rect x="224" y="272" fill="#c2b09b"/><rect x="232" y="272" fill="#c2b09b"/><rect x="240" y="272" fill="#c2b09a"/><rect x="248" y="272" fill="#c2af9a"/><rect x="256" y="272" fill="#c1af99"/><rect x="264" y="272" fill="#c1ae98"/><rect x="272" y="272" fill="#c1ae98"/><rect x="280" y="272" fill="#c0ad97"/><rect x="288" y="272" fill="#c0ad96"/><rect x="296" y="272" fill="#bfac94"/><rect x="304" y="272" fill="#bfab93"/><rect x="312" y="272" fill="#bea991"/><rect x="320" y="272" fill="#bda890"/><rect x="328" y="272" fill="#bda78e"/><rect x="336" y="272" fill="#bca58c"/><rect x="344" y="272" fill="#bba389"/><rect x="352" y="272" fill="#baa187"/><rect x="360" y="272" fill="#ba9f85"/><rect x="368" y="272" fill="#b99d83"/><rect x="376" y="272" fill="#b89b81"/><rect x="384" y="272" fill="#b7997f"/><rect x="392" y="272" fill="#b5967d"/><rect x="400" y="272" fill="#b4937a"/><rect x="408" y="272" fill="#b29078"/><rect x="416" y="272" fill="#b08c75"/><rect x="424" y="272" fill="#ad8873"/><rect x="432" y="272" fill="#aa8470"/><rect x="440" y="272" fill="#a67f6d"/><rect x="448" y="272" fill="#a27a69"/><rect x="456" y="272" fill="#9e7566"/><rect x="464" y="272" fill="#986f62"/><rect x="472" y="272" fill="#92685d"/><rect x="480" y="272" fill="#8b6158"/><rect x="488" y="272" fill="#845952"/><rect x="496" y="272" fill="#7f544f"/><rect x="504" y="272" fill="#80554f"/><rect x="512" y="272" fill="#80554f"/><rect x="0" y="280" fill="#997064"/><rect x="8" y="280" fill="#997064"/><rect x="16" y="280" fill="#996f63"/><rect x="24" y="280" fill="#9d7467"/><rect x="32" y="280" fill="#a27a6a"/><rect x="40" y="280" fill="#a6806d"/><rect x="48" y="280" fill="#aa8571"/><rect x="56" y="280" fill="#ad8973"/><rect x="64" y="280" fill="#b08d76"/><rect x="72" y="280" fill="#b39179"/><rect x="80" y="280" fill="#b5947b"/><rect x="88" y="280" fill="#b7977e"/><rect x="96" y="280" fill="#b89a80"/><rect x="104" y="280" fill="#ba9c82"/><rect x="112" y="280" fill="#bb9e84"/><rect x="120" y="280" fill="#bca086"/><rect x="128" y="280" fill="#bda288"/><rect x="136" y="280" fill="#bda38a"/><rect x="144" y="280" fill="#bea58c"/><rect x="152" y="280" fill="#bea68e"/><rect x="160" y="280" fill="#bfa78f"/><rect x="168" y="280" fill="#bfa891"/><rect x="176" y="280" fill="#c0aa92"/><rect x="184" y="280" fill="#c0aa93"/><rect x="192" y="280" fill="#c0ab94"/><rect x="200" y="280" fill="#c0ac95"/><rect x="208" y="280" fill="#c1ac96"/><rect x="216" y="280" fill="#c1ad96"/><rect x="224" y="280" fill="#c1ad96"/><rect x="232" y="280" fill="#c1ad96"/><rect x="240" y="280" fill="#c0ad96"/><rect x="248" y="280" fill="#c0ac95"/><rect x="256" y="280" fill="#c0ac95"/><rect x="264" y="280" fill="#c0ab94"/><rect x="272" y="280" fill="#bfab93"/><rect x="280" y="280" fill="#bfaa93"/><rect x="288" y="280" fill="#beaa91"/><rect x="296" y="280" fill="#bea990"/><rect x="304" y="280" fill="#bda88f"/><rect x="312" y="280" fill="#bca68d"/><rect x="320" y="280" fill="#bca58c"/><rect x="328" y="280" fill="#bba48a"/><rect x="336" y="280" fill="#baa288"/><rect x="344" y="280" fill="#baa086"/><rect x="352" y="280" fill="#b99f84"/><rect x="360" y="280" fill="#b89d82"/><rect x="368" y="280" fill="#b79b80"/><rect x="376" y="280" fill="#b6987e"/><rect x="384" y="280" fill="#b5967c"/><rect x="392" y="280" fill="#b4937a"/><rect x="400" y="280" fill="#b29078"/><rect x="408" y="280" fill="#b08d76"/><rect x="416" y="280" fill="#ad8973"/><rect x="424" y="280" fill="#aa8570"/><rect x="432" y="280" fill="#a7816e"/><rect x="440" y="280" fill="#a37c6a"/><rect x="448" y="280" fill="#9f7767"/><rect x="456" y="280" fill="#9a7163"/><rect x="464" y="280" fill="#956b5f"/><rect x="472" y="280" fill="#8f655a"/><rect x="480" y="280" fill="#885e55"/><rect x="488" y="280" fill="#815650"/><rect x="496" y="280" fill="#7d524d"/><rect x="504" y="280" fill="#7e534d"/><rect x="512" y="280" fill="#7e534d"/><rect x="0" y="288" fill="#986e62"/><rect x="8" y="288" fill="#976e62"/><rect x="16" y="288" fill="#976d62"/><rect x="24" y="288" fill="#9b7264"/><rect x="32" y="288" fill="#9f7768"/><rect x="40" y="288" fill="#a37d6b"/><rect x="48" y="288" fill="#a7826e"/><rect x="56" y="288" fill="#ab8771"/><rect x="64" y="288" fill="#ae8b74"/><rect x="72" y="288" fill="#b18f77"/><rect x="80" y="288" fill="#b39279"/><rect x="88" y="288" fill="#b5957b"/><rect x="96" y="288" fill="#b6977e"/><rect x="104" y="288" fill="#b89a80"/><rect x="112" y="288" fill="#b99c82"/><rect x="120" y="288" fill="#ba9d84"/><rect x="128" y="288" fill="#bb9f85"/><rect x="136" y="288" fill="#bca187"/><rect x="144" y="288" fill="#bca289"/><rect x="152" y="288" fill="#bda38a"/><rect x="160" y="288" fill="#bda48c"/><rect x="168" y="288" fill="#bea58d"/><rect x="176" y="288" fill="#bea68e"/><rect x="184" y="288" fill="#bea78f"/><rect x="192" y="288" fill="#bfa890"/><rect x="200" y="288" fill="#bfa991"/><rect x="208" y="288" fill="#bfa992"/><rect x="216" y="288" fill="#bfa992"/><rect x="224" y="288" fill="#bfaa92"/><rect x="232" y="288" fill="#bfaa92"/><rect x="240" y="288" fill="#bfa992"/><rect x="248" y="288" fill="#bfa991"/><rect x="256" y="288" fill="#bfa991"/><rect x="264" y="288" fill="#bea890"/><rect x="272" y="288" fill="#bea88f"/><rect x="280" y="288" fill="#bda78e"/><rect x="288" y="288" fill="#bda68d"/><rect x="296" y="288" fill="#bca58c"/><rect x="304" y="288" fill="#bba48b"/><rect x="312" y="288" fill="#bba38a"/><rect x="320" y="288" fill="#baa288"/><rect x="328" y="288" fill="#b9a187"/><rect x="336" y="288" fill="#b99f85"/><rect x="344" y="288" fill="#b89d83"/><rect x="352" y="288" fill="#b79c81"/><rect x="360" y="288" fill="#b69a80"/><rect x="368" y="288" fill="#b5987e"/><rect x="376" y="288" fill="#b4967c"/><rect x="384" y="288" fill="#b3937a"/><rect x="392" y="288" fill="#b29078"/><rect x="400" y="288" fill="#b08d76"/><rect x="408" y="288" fill="#ad8a73"/><rect x="416" y="288" fill="#ab8671"/><rect x="424" y="288" fill="#a8826e"/><rect x="432" y="288" fill="#a47e6b"/><rect x="440" y="288" fill="#a07968"/><rect x="448" y="288" fill="#9c7464"/><rect x="456" y="288" fill="#976e60"/><rect x="464" y="288" fill="#91685c"/><rect x="472" y="288" fill="#8b6157"/><rect x="480" y="288" fill="#845a52"/><rect x="488" y="288" fill="#7e534d"/><rect x="496" y="288" fill="#7b504b"/><rect x="504" y="288" fill="#7b514b"/><rect x="512" y="288" fill="#7c514c"/><rect x="0" y="296" fill="#966c61"/><rect x="8" y="296" fill="#966c60"/><rect x="16" y="296" fill="#956b60"/><rect x="24" y="296" fill="#986f62"/><rect x="32" y="296" fill="#9c7466"/><rect x="40" y="296" fill="#a17a69"/><rect x="48" y="296" fill="#a57f6c"/><rect x="56" y="296" fill="#a8846f"/><rect x="64" y="296" fill="#ab8872"/><rect x="72" y="296" fill="#ae8c74"/><rect x="80" y="296" fill="#b18f77"/><rect x="88" y="296" fill="#b39279"/><rect x="96" y="296" fill="#b4947b"/><rect x="104" y="296" fill="#b6977d"/><rect x="112" y="296" fill="#b7997f"/><rect x="120" y="296" fill="#b89b81"/><rect x="128" y="296" fill="#b99c82"/><rect x="136" y="296" fill="#ba9e84"/><rect x="144" y="296" fill="#bb9f85"/><rect x="152" y="296" fill="#bba087"/><rect x="160" y="296" fill="#bca188"/><rect x="168" y="296" fill="#bca289"/><rect x="176" y="296" fill="#bca38b"/><rect x="184" y="296" fill="#bda48c"/><rect x="192" y="296" fill="#bda58d"/><rect x="200" y="296" fill="#bda58d"/><rect x="208" y="296" fill="#bda68e"/><rect x="216" y="296" fill="#bea68e"/><rect x="224" y="296" fill="#bea68e"/><rect x="232" y="296" fill="#bea68e"/><rect x="240" y="296" fill="#bda68e"/><rect x="248" y="296" fill="#bda68d"/><rect x="256" y="296" fill="#bda68d"/><rect x="264" y="296" fill="#bda58c"/><rect x="272" y="296" fill="#bca58b"/><rect x="280" y="296" fill="#bca48b"/><rect x="288" y="296" fill="#bba38a"/><rect x="296" y="296" fill="#baa289"/><rect x="304" y="296" fill="#baa187"/><rect x="312" y="296" fill="#b9a086"/><rect x="320" y="296" fill="#b89f85"/><rect x="328" y="296" fill="#b79d83"/><rect x="336" y="296" fill="#b79c82"/><rect x="344" y="296" fill="#b69a80"/><rect x="352" y="296" fill="#b5997e"/><rect x="360" y="296" fill="#b4977d"/><rect x="368" y="296" fill="#b3957b"/><rect x="376" y="296" fill="#b29379"/><rect x="384" y="296" fill="#b19077"/><rect x="392" y="296" fill="#af8d75"/><rect x="400" y="296" fill="#ad8a73"/><rect x="408" y="296" fill="#ab8771"/><rect x="416" y="296" fill="#a8836f"/><rect x="424" y="296" fill="#a57f6c"/><rect x="432" y="296" fill="#a17b69"/><rect x="440" y="296" fill="#9d7665"/><rect x="448" y="296" fill="#987061"/><rect x="456" y="296" fill="#936b5d"/><rect x="464" y="296" fill="#8d6459"/><rect x="472" y="296" fill="#875e54"/><rect x="480" y="296" fill="#81574f"/><rect x="488" y="296" fill="#7a504a"/><rect x="496" y="296" fill="#794e49"/><rect x="504" y="296" fill="#794f4a"/><rect x="512" y="296" fill="#7a4f4a"/><rect x="0" y="304" fill="#946a5f"/><rect x="8" y="304" fill="#946a5f"/><rect x="16" y="304" fill="#93695f"/><rect x="24" y="304" fill="#956b60"/><rect x="32" y="304" fill="#997163"/><rect x="40" y="304" fill="#9e7667"/><rect x="48" y="304" fill="#a27c6a"/><rect x="56" y="304" fill="#a5816d"/><rect x="64" y="304" fill="#a9856f"/><rect x="72" y="304" fill="#ac8872"/><rect x="80" y="304" fill="#ae8c74"/><rect x="88" y="304" fill="#b08f76"/><rect x="96" y="304" fill="#b29179"/><rect x="104" y="304" fill="#b4947a"/><rect x="112" y="304" fill="#b5967c"/><rect x="120" y="304" fill="#b6977e"/><rect x="128" y="304" fill="#b7997f"/><rect x="136" y="304" fill="#b89b81"/><rect x="144" y="304" fill="#b99c82"/><rect x="152" y="304" fill="#b99d84"/><rect x="160" y="304" fill="#ba9e85"/><rect x="168" y="304" fill="#ba9f86"/><rect x="176" y="304" fill="#bba087"/><rect x="184" y="304" fill="#bba188"/><rect x="192" y="304" fill="#bba289"/><rect x="200" y="304" fill="#bca289"/><rect x="208" y="304" fill="#bca38a"/><rect x="216" y="304" fill="#bca38a"/><rect x="224" y="304" fill="#bca38a"/><rect x="232" y="304" fill="#bca38a"/><rect x="240" y="304" fill="#bca38a"/><rect x="248" y="304" fill="#bca389"/><rect x="256" y="304" fill="#bba389"/><rect x="264" y="304" fill="#bba288"/><rect x="272" y="304" fill="#baa188"/><rect x="280" y="304" fill="#baa187"/><rect x="288" y="304" fill="#b9a086"/><rect x="296" y="304" fill="#b89f85"/><rect x="304" y="304" fill="#b89e84"/><rect x="312" y="304" fill="#b79d82"/><rect x="320" y="304" fill="#b69b81"/><rect x="328" y="304" fill="#b59a80"/><rect x="336" y="304" fill="#b4997e"/><rect x="344" y="304" fill="#b4977d"/><rect x="352" y="304" fill="#b3957b"/><rect x="360" y="304" fill="#b2947a"/><rect x="368" y="304" fill="#b19278"/><rect x="376" y="304" fill="#b09077"/><rect x="384" y="304" fill="#af8d75"/><rect x="392" y="304" fill="#ad8a73"/><rect x="400" y="304" fill="#ab8771"/><rect x="408" y="304" fill="#a8846f"/><rect x="416" y="304" fill="#a5806c"/><rect x="424" y="304" fill="#a27c69"/><rect x="432" y="304" fill="#9e7766"/><rect x="440" y="304" fill="#997262"/><rect x="448" y="304" fill="#946d5f"/><rect x="456" y="304" fill="#8f675a"/><rect x="464" y="304" fill="#896156"/><rect x="472" y="304" fill="#835a51"/><rect x="480" y="304" fill="#7d534c"/><rect x="488" y="304" fill="#764c47"/><rect x="496" y="304" fill="#774d47"/><rect x="504" y="304" fill="#774d48"/><rect x="512" y="304" fill="#784d48"/><rect x="0" y="312" fill="#92685e"/><rect x="8" y="312" fill="#92675d"/><rect x="16" y="312" fill="#91675d"/><rect x="24" y="312" fill="#91675d"/><rect x="32" y="312" fill="#966d61"/><rect x="40" y="312" fill="#9a7364"/><rect x="48" y="312" fill="#9f7867"/><rect x="56" y="312" fill="#a27d6a"/><rect x="64" y="312" fill="#a6816d"/><rect x="72" y="312" fill="#a9856f"/><rect x="80" y="312" fill="#ab8872"/><rect x="88" y="312" fill="#ae8b74"/><rect x="96" y="312" fill="#b08e76"/><rect x="104" y="312" fill="#b19078"/><rect x="112" y="312" fill="#b39279"/><rect x="120" y="312" fill="#b4947b"/><rect x="128" y="312" fill="#b5967c"/><rect x="136" y="312" fill="#b6977e"/><rect x="144" y="312" fill="#b7997f"/><rect x="152" y="312" fill="#b79a80"/><rect x="160" y="312" fill="#b89b81"/><rect x="168" y="312" fill="#b89c83"/><rect x="176" y="312" fill="#b99d84"/><rect x="184" y="312" fill="#b99d84"/><rect x="192" y="312" fill="#b99e85"/><rect x="200" y="312" fill="#ba9f86"/><rect x="208" y="312" fill="#ba9f86"/><rect x="216" y="312" fill="#ba9f86"/><rect x="224" y="312" fill="#baa087"/><rect x="232" y="312" fill="#baa086"/><rect x="240" y="312" fill="#baa086"/><rect x="248" y="312" fill="#baa086"/><rect x="256" y="312" fill="#b99f85"/><rect x="264" y="312" fill="#b99f85"/><rect x="272" y="312" fill="#b89e84"/><rect x="280" y="312" fill="#b89d83"/><rect x="288" y="312" fill="#b79d82"/><rect x="296" y="312" fill="#b69c81"/><rect x="304" y="312" fill="#b59a80"/><rect x="312" y="312" fill="#b5997f"/><rect x="320" y="312" fill="#b4987e"/><rect x="328" y="312" fill="#b3977c"/><rect x="336" y="312" fill="#b2957b"/><rect x="344" y="312" fill="#b1947a"/><rect x="352" y="312" fill="#b09278"/><rect x="360" y="312" fill="#b09077"/><rect x="368" y="312" fill="#af8e76"/><rect x="376" y="312" fill="#ae8c74"/><rect x="384" y="312" fill="#ac8a72"/><rect x="392" y="312" fill="#aa8771"/><rect x="400" y="312" fill="#a8846f"/><rect x="408" y="312" fill="#a5816c"/><rect x="416" y="312" fill="#a27d6a"/><rect x="424" y="312" fill="#9f7867"/><rect x="432" y="312" fill="#9a7463"/><rect x="440" y="312" fill="#966f60"/><rect x="448" y="312" fill="#91695c"/><rect x="456" y="312" fill="#8b6357"/><rect x="464" y="312" fill="#855d53"/><rect x="472" y="312" fill="#7f564e"/><rect x="480" y="312" fill="#794f49"/><rect x="488" y="312" fill="#744a45"/><rect x="496" y="312" fill="#744b46"/><rect x="504" y="312" fill="#754b46"/><rect x="512" y="312" fill="#754b46"/><rect x="0" y="320" fill="#90665c"/><rect x="8" y="320" fill="#8f655c"/><rect x="16" y="320" fill="#8f645b"/><rect x="24" y="320" fill="#8e645b"/><rect x="32" y="320" fill="#92695e"/><rect x="40" y="320" fill="#976e62"/><rect x="48" y="320" fill="#9b7365"/><rect x="56" y="320" fill="#9f7868"/><rect x="64" y="320" fill="#a27d6a"/><rect x="72" y="320" fill="#a5816d"/><rect x="80" y="320" fill="#a8846f"/><rect x="88" y="320" fill="#ab8771"/><rect x="96" y="320" fill="#ad8a73"/><rect x="104" y="320" fill="#af8d75"/><rect x="112" y="320" fill="#b08f77"/><rect x="120" y="320" fill="#b29178"/><rect x="128" y="320" fill="#b39279"/><rect x="136" y="320" fill="#b3947b"/><rect x="144" y="320" fill="#b4957c"/><rect x="152" y="320" fill="#b5967d"/><rect x="160" y="320" fill="#b5977e"/><rect x="168" y="320" fill="#b6987f"/><rect x="176" y="320" fill="#b69980"/><rect x="184" y="320" fill="#b79a81"/><rect x="192" y="320" fill="#b79b82"/><rect x="200" y="320" fill="#b89b82"/><rect x="208" y="320" fill="#b89c83"/><rect x="216" y="320" fill="#b89c83"/><rect x="224" y="320" fill="#b89c83"/><rect x="232" y="320" fill="#b89c83"/><rect x="240" y="320" fill="#b89c83"/><rect x="248" y="320" fill="#b89c82"/><rect x="256" y="320" fill="#b79c82"/><rect x="264" y="320" fill="#b79b81"/><rect x="272" y="320" fill="#b69b81"/><rect x="280" y="320" fill="#b69a80"/><rect x="288" y="320" fill="#b5997f"/><rect x="296" y="320" fill="#b4987e"/><rect x="304" y="320" fill="#b3977d"/><rect x="312" y="320" fill="#b2967c"/><rect x="320" y="320" fill="#b1947a"/><rect x="328" y="320" fill="#b09379"/><rect x="336" y="320" fill="#af9178"/><rect x="344" y="320" fill="#af9077"/><rect x="352" y="320" fill="#ae8e75"/><rect x="360" y="320" fill="#ad8d74"/><rect x="368" y="320" fill="#ac8b73"/><rect x="376" y="320" fill="#ab8971"/><rect x="384" y="320" fill="#a98670"/><rect x="392" y="320" fill="#a8846e"/><rect x="400" y="320" fill="#a5816c"/><rect x="408" y="320" fill="#a27d6a"/><rect x="416" y="320" fill="#9f7967"/><rect x="424" y="320" fill="#9b7564"/><rect x="432" y="320" fill="#977061"/><rect x="440" y="320" fill="#926b5d"/><rect x="448" y="320" fill="#8d6559"/><rect x="456" y="320" fill="#875f54"/><rect x="464" y="320" fill="#815950"/><rect x="472" y="320" fill="#7b524b"/><rect x="480" y="320" fill="#754b46"/><rect x="488" y="320" fill="#724844"/><rect x="496" y="320" fill="#724944"/><rect x="504" y="320" fill="#734944"/><rect x="512" y="320" fill="#734a45"/><rect x="0" y="328" fill="#8e635b"/><rect x="8" y="328" fill="#8d635a"/><rect x="16" y="328" fill="#8c625a"/><rect x="24" y="328" fill="#8c6159"/><rect x="32" y="328" fill="#8e645b"/><rect x="40" y="328" fill="#93695f"/><rect x="48" y="328" fill="#976f62"/><rect x="56" y="328" fill="#9b7365"/><rect x="64" y="328" fill="#9e7867"/><rect x="72" y="328" fill="#a17c6a"/><rect x="80" y="328" fill="#a5806c"/><rect x="88" y="328" fill="#a7836e"/><rect x="96" y="328" fill="#aa8670"/><rect x="104" y="328" fill="#ac8972"/><rect x="112" y="328" fill="#ad8b74"/><rect x="120" y="328" fill="#af8d75"/><rect x="128" y="328" fill="#b08f76"/><rect x="136" y="328" fill="#b19078"/><rect x="144" y="328" fill="#b29179"/><rect x="152" y="328" fill="#b2937a"/><rect x="160" y="328" fill="#b3947b"/><rect x="168" y="328" fill="#b4957c"/><rect x="176" y="328" fill="#b4967d"/><rect x="184" y="328" fill="#b5967e"/><rect x="192" y="328" fill="#b5977f"/><rect x="200" y="328" fill="#b5987f"/><rect x="208" y="328" fill="#b69880"/><rect x="216" y="328" fill="#b69880"/><rect x="224" y="328" fill="#b69980"/><rect x="232" y="328" fill="#b69980"/><rect x="240" y="328" fill="#b6997f"/><rect x="248" y="328" fill="#b6987f"/><rect x="256" y="328" fill="#b5987f"/><rect x="264" y="328" fill="#b5987e"/><rect x="272" y="328" fill="#b4977d"/><rect x="280" y="328" fill="#b3967d"/><rect x="288" y="328" fill="#b3967c"/><rect x="296" y="328" fill="#b2957b"/><rect x="304" y="328" fill="#b1937a"/><rect x="312" y="328" fill="#b09279"/><rect x="320" y="328" fill="#af9177"/><rect x="328" y="328" fill="#ae8f76"/><rect x="336" y="328" fill="#ad8e75"/><rect x="344" y="328" fill="#ac8c74"/><rect x="352" y="328" fill="#ab8b73"/><rect x="360" y="328" fill="#aa8971"/><rect x="368" y="328" fill="#a98770"/><rect x="376" y="328" fill="#a8856f"/><rect x="384" y="328" fill="#a6836d"/><rect x="392" y="328" fill="#a4806c"/><rect x="400" y="328" fill="#a27d6a"/><rect x="408" y="328" fill="#9f7a68"/><rect x="416" y="328" fill="#9b7665"/><rect x="424" y="328" fill="#977162"/><rect x="432" y="328" fill="#936c5e"/><rect x="440" y="328" fill="#8e675a"/><rect x="448" y="328" fill="#886156"/><rect x="456" y="328" fill="#835b51"/><rect x="464" y="328" fill="#7d544d"/><rect x="472" y="328" fill="#774e48"/><rect x="480" y="328" fill="#704743"/><rect x="488" y="328" fill="#704642"/><rect x="496" y="328" fill="#704742"/><rect x="504" y="328" fill="#714743"/><rect x="512" y="328" fill="#714843"/><rect x="0" y="336" fill="#8c6159"/><rect x="8" y="336" fill="#8b6058"/><rect x="16" y="336" fill="#8a5f58"/><rect x="24" y="336" fill="#895e57"/><rect x="32" y="336" fill="#895f57"/><rect x="40" y="336" fill="#8e645b"/><rect x="48" y="336" fill="#92695e"/><rect x="56" y="336" fill="#966e61"/><rect x="64" y="336" fill="#9a7364"/><rect x="72" y="336" fill="#9d7766"/><rect x="80" y="336" fill="#a17b69"/><rect x="88" y="336" fill="#a47f6b"/><rect x="96" y="336" fill="#a6826d"/><rect x="104" y="336" fill="#a9856f"/><rect x="112" y="336" fill="#aa8771"/><rect x="120" y="336" fill="#ac8972"/><rect x="128" y="336" fill="#ad8b73"/><rect x="136" y="336" fill="#ae8c75"/><rect x="144" y="336" fill="#af8e76"/><rect x="152" y="336" fill="#b08f77"/><rect x="160" y="336" fill="#b09078"/><rect x="168" y="336" fill="#b19179"/><rect x="176" y="336" fill="#b2927a"/><rect x="184" y="336" fill="#b2937b"/><rect x="192" y="336" fill="#b3947c"/><rect x="200" y="336" fill="#b3947c"/><rect x="208" y="336" fill="#b3957d"/><rect x="216" y="336" fill="#b4957d"/><rect x="224" y="336" fill="#b4957d"/><rect x="232" y="336" fill="#b4957d"/><rect x="240" y="336" fill="#b3957c"/><rect x="248" y="336" fill="#b3957c"/><rect x="256" y="336" fill="#b3947b"/><rect x="264" y="336" fill="#b2947b"/><rect x="272" y="336" fill="#b2937a"/><rect x="280" y="336" fill="#b1937a"/><rect x="288" y="336" fill="#b09279"/><rect x="296" y="336" fill="#af9178"/><rect x="304" y="336" fill="#ae9077"/><rect x="312" y="336" fill="#ad8f76"/><rect x="320" y="336" fill="#ac8d75"/><rect x="328" y="336" fill="#ab8c73"/><rect x="336" y="336" fill="#aa8a72"/><rect x="344" y="336" fill="#a98971"/><rect x="352" y="336" fill="#a88770"/><rect x="360" y="336" fill="#a7866f"/><rect x="368" y="336" fill="#a6846e"/><rect x="376" y="336" fill="#a5826c"/><rect x="384" y="336" fill="#a37f6b"/><rect x="392" y="336" fill="#a17d69"/><rect x="400" y="336" fill="#9e7967"/><rect x="408" y="336" fill="#9b7665"/><rect x="416" y="336" fill="#987262"/><rect x="424" y="336" fill="#946d5f"/><rect x="432" y="336" fill="#8f685b"/><rect x="440" y="336" fill="#8a6357"/><rect x="448" y="336" fill="#845d53"/><rect x="456" y="336" fill="#7e564e"/><rect x="464" y="336" fill="#785049"/><rect x="472" y="336" fill="#724a44"/><rect x="480" y="336" fill="#6d4440"/><rect x="488" y="336" fill="#6d4540"/><rect x="496" y="336" fill="#6e4541"/><rect x="504" y="336" fill="#6f4641"/><rect x="8" y="344" fill="#885d56"/><rect x="16" y="344" fill="#875c56"/><rect x="24" y="344" fill="#865b55"/><rect x="32" y="344" fill="#855a54"/><rect x="40" y="344" fill="#895e57"/><rect x="48" y="344" fill="#8d645a"/><rect x="56" y="344" fill="#91695d"/><rect x="64" y="344" fill="#956d60"/><rect x="72" y="344" fill="#997263"/><rect x="80" y="344" fill="#9d7765"/><rect x="88" y="344" fill="#a07b68"/><rect x="96" y="344" fill="#a37e6a"/><rect x="104" y="344" fill="#a5816c"/><rect x="112" y="344" fill="#a7836e"/><rect x="120" y="344" fill="#a9856f"/><rect x="128" y="344" fill="#aa8770"/><rect x="136" y="344" fill="#ab8871"/><rect x="144" y="344" fill="#ac8a73"/><rect x="152" y="344" fill="#ad8b74"/><rect x="160" y="344" fill="#ae8c75"/><rect x="168" y="344" fill="#ae8d76"/><rect x="176" y="344" fill="#af8e77"/><rect x="184" y="344" fill="#b08f78"/><rect x="192" y="344" fill="#b09079"/><rect x="200" y="344" fill="#b19079"/><rect x="208" y="344" fill="#b1917a"/><rect x="216" y="344" fill="#b1917a"/><rect x="224" y="344" fill="#b1917a"/><rect x="232" y="344" fill="#b1917a"/><rect x="240" y="344" fill="#b19179"/><rect x="248" y="344" fill="#b19179"/><rect x="256" y="344" fill="#b09179"/><rect x="264" y="344" fill="#b09078"/><rect x="272" y="344" fill="#af9078"/><rect x="280" y="344" fill="#ae8f77"/><rect x="288" y="344" fill="#ae8e76"/><rect x="296" y="344" fill="#ad8d75"/><rect x="304" y="344" fill="#ac8c74"/><rect x="312" y="344" fill="#ab8b73"/><rect x="320" y="344" fill="#a98a72"/><rect x="328" y="344" fill="#a88871"/><rect x="336" y="344" fill="#a7866f"/><rect x="344" y="344" fill="#a6856e"/><rect x="352" y="344" fill="#a5836d"/><rect x="360" y="344" fill="#a4826c"/><rect x="368" y="344" fill="#a2806b"/><rect x="376" y="344" fill="#a17e6a"/><rect x="384" y="344" fill="#9f7b68"/><rect x="392" y="344" fill="#9d7967"/><rect x="400" y="344" fill="#9a7565"/><rect x="408" y="344" fill="#977263"/><rect x="416" y="344" fill="#946e60"/><rect x="424" y="344" fill="#8f695c"/><rect x="432" y="344" fill="#8a6459"/><rect x="440" y="344" fill="#855e54"/><rect x="448" y="344" fill="#7f584f"/><rect x="456" y="344" fill="#79524b"/><rect x="464" y="344" fill="#734b46"/><rect x="472" y="344" fill="#6d4540"/><rect x="480" y="344" fill="#6b423e"/><rect x="488" y="344" fill="#6b433f"/><rect x="496" y="344" fill="#6c433f"/><rect x="504" y="344" fill="#6d4440"/><rect x="8" y="352" fill="#855a54"/><rect x="16" y="352" fill="#845953"/><rect x="24" y="352" fill="#835852"/><rect x="32" y="352" fill="#825750"/><rect x="40" y="352" fill="#835851"/><rect x="48" y="352" fill="#875d55"/><rect x="56" y="352" fill="#8b6258"/><rect x="64" y="352" fill="#90685b"/><rect x="72" y="352" fill="#946d5f"/><rect x="80" y="352" fill="#987262"/><rect x="88" y="352" fill="#9c7665"/><rect x="96" y="352" fill="#9f7a67"/><rect x="104" y="352" fill="#a27d69"/><rect x="112" y="352" fill="#a47f6b"/><rect x="120" y="352" fill="#a6816c"/><rect x="128" y="352" fill="#a7836e"/><rect x="136" y="352" fill="#a8846f"/><rect x="144" y="352" fill="#a98670"/><rect x="152" y="352" fill="#aa8771"/><rect x="160" y="352" fill="#ab8972"/><rect x="168" y="352" fill="#ac8a73"/><rect x="176" y="352" fill="#ac8b74"/><rect x="184" y="352" fill="#ad8c75"/><rect x="192" y="352" fill="#ae8c76"/><rect x="200" y="352" fill="#ae8d77"/><rect x="208" y="352" fill="#ae8d77"/><rect x="216" y="352" fill="#ae8d77"/><rect x="224" y="352" fill="#ae8d77"/><rect x="232" y="352" fill="#ae8d77"/><rect x="240" y="352" fill="#ae8d77"/><rect x="248" y="352" fill="#ae8d76"/><rect x="256" y="352" fill="#ad8d76"/><rect x="264" y="352" fill="#ad8c75"/><rect x="272" y="352" fill="#ac8c75"/><rect x="280" y="352" fill="#ac8b74"/><rect x="288" y="352" fill="#ab8b74"/><rect x="296" y="352" fill="#aa8a73"/><rect x="304" y="352" fill="#a98972"/><rect x="312" y="352" fill="#a88771"/><rect x="320" y="352" fill="#a7866f"/><rect x="328" y="352" fill="#a5846e"/><rect x="336" y="352" fill="#a4836d"/><rect x="344" y="352" fill="#a3816c"/><rect x="352" y="352" fill="#a2806b"/><rect x="360" y="352" fill="#a07e6a"/><rect x="368" y="352" fill="#9f7c68"/><rect x="376" y="352" fill="#9d7a67"/><rect x="384" y="352" fill="#9b7766"/><rect x="392" y="352" fill="#997464"/><rect x="400" y="352" fill="#967162"/><rect x="408" y="352" fill="#936e60"/><rect x="416" y="352" fill="#8f695d"/><rect x="424" y="352" fill="#8b6559"/><rect x="432" y="352" fill="#865f55"/><rect x="440" y="352" fill="#805a51"/><rect x="448" y="352" fill="#7b534c"/><rect x="456" y="352" fill="#754d47"/><rect x="464" y="352" fill="#6f4742"/><rect x="472" y="352" fill="#68403d"/><rect x="480" y="352" fill="#69413d"/><rect x="488" y="352" fill="#6a413d"/><rect x="496" y="352" fill="#6a423e"/><rect x="504" y="352" fill="#6b423f"/><rect x="8" y="360" fill="#835751"/><rect x="16" y="360" fill="#815650"/><rect x="24" y="360" fill="#80554f"/><rect x="32" y="360" fill="#7e534d"/><rect x="40" y="360" fill="#7d524c"/><rect x="48" y="360" fill="#81574f"/><rect x="56" y="360" fill="#855c53"/><rect x="64" y="360" fill="#8a6256"/><rect x="72" y="360" fill="#8f675a"/><rect x="80" y="360" fill="#946c5e"/><rect x="88" y="360" fill="#987161"/><rect x="96" y="360" fill="#9b7564"/><rect x="104" y="360" fill="#9e7866"/><rect x="112" y="360" fill="#a07b68"/><rect x="120" y="360" fill="#a27d69"/><rect x="128" y="360" fill="#a47f6b"/><rect x="136" y="360" fill="#a5816c"/><rect x="144" y="360" fill="#a6826d"/><rect x="152" y="360" fill="#a7836e"/><rect x="160" y="360" fill="#a8856f"/><rect x="168" y="360" fill="#a98671"/><rect x="176" y="360" fill="#aa8772"/><rect x="184" y="360" fill="#aa8873"/><rect x="192" y="360" fill="#ab8873"/><rect x="200" y="360" fill="#ab8974"/><rect x="208" y="360" fill="#ac8974"/><rect x="216" y="360" fill="#ac8974"/><rect x="224" y="360" fill="#ac8974"/><rect x="232" y="360" fill="#ab8974"/><rect x="240" y="360" fill="#ab8974"/><rect x="248" y="360" fill="#ab8974"/><rect x="256" y="360" fill="#aa8973"/><rect x="264" y="360" fill="#aa8873"/><rect x="272" y="360" fill="#a98872"/><rect x="280" y="360" fill="#a98872"/><rect x="288" y="360" fill="#a88771"/><rect x="296" y="360" fill="#a78670"/><rect x="304" y="360" fill="#a6856f"/><rect x="312" y="360" fill="#a5846e"/><rect x="320" y="360" fill="#a4826d"/><rect x="328" y="360" fill="#a2816c"/><rect x="336" y="360" fill="#a17f6b"/><rect x="344" y="360" fill="#a07d69"/><rect x="352" y="360" fill="#9e7c68"/><rect x="360" y="360" fill="#9c7a67"/><rect x="368" y="360" fill="#9b7765"/><rect x="376" y="360" fill="#997564"/><rect x="384" y="360" fill="#977262"/><rect x="392" y="360" fill="#947061"/><rect x="400" y="360" fill="#926c5f"/><rect x="408" y="360" fill="#8e695c"/><rect x="416" y="360" fill="#8b6559"/><rect x="424" y="360" fill="#866056"/><rect x="432" y="360" fill="#815a51"/><rect x="440" y="360" fill="#7b544d"/><rect x="448" y="360" fill="#754e48"/><rect x="456" y="360" fill="#6f4843"/><rect x="464" y="360" fill="#69423e"/><rect x="472" y="360" fill="#663e3b"/><rect x="480" y="360" fill="#673f3b"/><rect x="488" y="360" fill="#68403c"/><rect x="496" y="360" fill="#69403d"/><rect x="16" y="368" fill="#7e534d"/><rect x="24" y="368" fill="#7d524c"/><rect x="32" y="368" fill="#7b504a"/><rect x="40" y="368" fill="#794e48"/><rect x="48" y="368" fill="#7b5049"/><rect x="56" y="368" fill="#7f564d"/><rect x="64" y="368" fill="#855c52"/><rect x="72" y="368" fill="#8a6256"/><rect x="80" y="368" fill="#8f675a"/><rect x="88" y="368" fill="#936c5e"/><rect x="96" y="368" fill="#977061"/><rect x="104" y="368" fill="#9a7463"/><rect x="112" y="368" fill="#9c7765"/><rect x="120" y="368" fill="#9e7966"/><rect x="128" y="368" fill="#a07b68"/><rect x="136" y="368" fill="#a17c69"/><rect x="144" y="368" fill="#a37e6a"/><rect x="152" y="368" fill="#a4806c"/><rect x="160" y="368" fill="#a5816d"/><rect x="168" y="368" fill="#a6826e"/><rect x="176" y="368" fill="#a7836f"/><rect x="184" y="368" fill="#a78470"/><rect x="192" y="368" fill="#a88571"/><rect x="200" y="368" fill="#a88571"/><rect x="208" y="368" fill="#a98572"/><rect x="216" y="368" fill="#a98672"/><rect x="224" y="368" fill="#a98672"/><rect x="232" y="368" fill="#a88571"/><rect x="240" y="368" fill="#a88571"/><rect x="248" y="368" fill="#a88571"/><rect x="256" y="368" fill="#a78570"/><rect x="264" y="368" fill="#a78570"/><rect x="272" y="368" fill="#a68470"/><rect x="280" y="368" fill="#a6846f"/><rect x="288" y="368" fill="#a5836f"/><rect x="296" y="368" fill="#a4826e"/><rect x="304" y="368" fill="#a3816d"/><rect x="312" y="368" fill="#a2806c"/><rect x="320" y="368" fill="#a17f6b"/><rect x="328" y="368" fill="#9f7d69"/><rect x="336" y="368" fill="#9e7b68"/><rect x="344" y="368" fill="#9c7967"/><rect x="352" y="368" fill="#9a7765"/><rect x="360" y="368" fill="#987564"/><rect x="368" y="368" fill="#967362"/><rect x="376" y="368" fill="#947060"/><rect x="384" y="368" fill="#926d5f"/><rect x="392" y="368" fill="#8f6a5d"/><rect x="400" y="368" fill="#8c675b"/><rect x="408" y="368" fill="#896358"/><rect x="416" y="368" fill="#855f55"/><rect x="424" y="368" fill="#805a51"/><rect x="432" y="368" fill="#7b554d"/><rect x="440" y="368" fill="#764f48"/><rect x="448" y="368" fill="#704943"/><rect x="456" y="368" fill="#6a433e"/><rect x="464" y="368" fill="#643d39"/><rect x="472" y="368" fill="#643d39"/><rect x="480" y="368" fill="#653e3a"/><rect x="488" y="368" fill="#663e3b"/><rect x="496" y="368" fill="#673f3b"/><rect x="16" y="376" fill="#7b504a"/><rect x="24" y="376" fill="#7a4f49"/><rect x="32" y="376" fill="#784d47"/><rect x="40" y="376" fill="#774c46"/><rect x="48" y="376" fill="#754a44"/><rect x="56" y="376" fill="#7a4f48"/><rect x="64" y="376" fill="#7f564d"/><rect x="72" y="376" fill="#855c52"/><rect x="80" y="376" fill="#8a6256"/><rect x="88" y="376" fill="#8f675a"/><rect x="96" y="376" fill="#926b5d"/><rect x="104" y="376" fill="#956f5f"/><rect x="112" y="376" fill="#987261"/><rect x="120" y="376" fill="#9a7463"/><rect x="128" y="376" fill="#9c7664"/><rect x="136" y="376" fill="#9d7866"/><rect x="144" y="376" fill="#9f7a67"/><rect x="152" y="376" fill="#a07b69"/><rect x="160" y="376" fill="#a17d6a"/><rect x="168" y="376" fill="#a27e6b"/><rect x="176" y="376" fill="#a37f6d"/><rect x="184" y="376" fill="#a4806e"/><rect x="192" y="376" fill="#a5816e"/><rect x="200" y="376" fill="#a5816f"/><rect x="208" y="376" fill="#a5816f"/><rect x="216" y="376" fill="#a5826f"/><rect x="224" y="376" fill="#a5826f"/><rect x="232" y="376" fill="#a5816f"/><rect x="240" y="376" fill="#a5816e"/><rect x="248" y="376" fill="#a4816e"/><rect x="256" y="376" fill="#a4816e"/><rect x="264" y="376" fill="#a3806d"/><rect x="272" y="376" fill="#a3806d"/><rect x="280" y="376" fill="#a3806d"/><rect x="288" y="376" fill="#a27f6c"/><rect x="296" y="376" fill="#a17f6c"/><rect x="304" y="376" fill="#a07d6b"/><rect x="312" y="376" fill="#9f7c6a"/><rect x="320" y="376" fill="#9d7b68"/><rect x="328" y="376" fill="#9c7967"/><rect x="336" y="376" fill="#9a7765"/><rect x="344" y="376" fill="#987564"/><rect x="352" y="376" fill="#967362"/><rect x="360" y="376" fill="#947060"/><rect x="368" y="376" fill="#926e5e"/><rect x="376" y="376" fill="#8f6b5d"/><rect x="384" y="376" fill="#8c685b"/><rect x="392" y="376" fill="#8a6558"/><rect x="400" y="376" fill="#866156"/><rect x="408" y="376" fill="#835d53"/><rect x="416" y="376" fill="#7f5950"/><rect x="424" y="376" fill="#7a544c"/><rect x="432" y="376" fill="#754f48"/><rect x="440" y="376" fill="#6f4943"/><rect x="448" y="376" fill="#6a433e"/><rect x="456" y="376" fill="#643d39"/><rect x="464" y="376" fill="#613a37"/><rect x="472" y="376" fill="#633b38"/><rect x="480" y="376" fill="#633c39"/><rect x="488" y="376" fill="#643d39"/><rect x="24" y="384" fill="#774c46"/><rect x="32" y="384" fill="#764b45"/><rect x="40" y="384" fill="#744a44"/><rect x="48" y="384" fill="#734843"/><rect x="56" y="384" fill="#744943"/><rect x="64" y="384" fill="#7a5048"/><rect x="72" y="384" fill="#80564d"/><rect x="80" y="384" fill="#855c52"/><rect x="88" y="384" fill="#8a6156"/><rect x="96" y="384" fill="#8d6559"/><rect x="104" y="384" fill="#90695b"/><rect x="112" y="384" fill="#936c5d"/><rect x="120" y="384" fill="#956f5f"/><rect x="128" y="384" fill="#977161"/><rect x="136" y="384" fill="#987362"/><rect x="144" y="384" fill="#9a7564"/><rect x="152" y="384" fill="#9c7765"/><rect x="160" y="384" fill="#9d7867"/><rect x="168" y="384" fill="#9e7a69"/><rect x="176" y="384" fill="#a07b6a"/><rect x="184" y="384" fill="#a07c6b"/><rect x="192" y="384" fill="#a17d6b"/><rect x="200" y="384" fill="#a27d6c"/><rect x="208" y="384" fill="#a27d6c"/><rect x="216" y="384" fill="#a27d6c"/><rect x="224" y="384" fill="#a27e6c"/><rect x="232" y="384" fill="#a27d6c"/><rect x="240" y="384" fill="#a17d6c"/><rect x="248" y="384" fill="#a17d6b"/><rect x="256" y="384" fill="#a07d6b"/><rect x="264" y="384" fill="#a07c6b"/><rect x="272" y="384" fill="#a07c6a"/><rect x="280" y="384" fill="#9f7c6a"/><rect x="288" y="384" fill="#9f7b6a"/><rect x="296" y="384" fill="#9e7b69"/><rect x="304" y="384" fill="#9d7968"/><rect x="312" y="384" fill="#9b7867"/><rect x="320" y="384" fill="#9a7666"/><rect x="328" y="384" fill="#987464"/><rect x="336" y="384" fill="#967262"/><rect x="344" y="384" fill="#947060"/><rect x="352" y="384" fill="#916e5f"/><rect x="360" y="384" fill="#8f6b5d"/><rect x="368" y="384" fill="#8c685a"/><rect x="376" y="384" fill="#8a6558"/><rect x="384" y="384" fill="#876256"/><rect x="392" y="384" fill="#835e53"/><rect x="400" y="384" fill="#805b51"/><rect x="408" y="384" fill="#7c574e"/><rect x="416" y="384" fill="#78524a"/><rect x="424" y="384" fill="#734d47"/><rect x="432" y="384" fill="#6e4842"/><rect x="440" y="384" fill="#69423e"/><rect x="448" y="384" fill="#633d39"/><rect x="456" y="384" fill="#5e3734"/><rect x="464" y="384" fill="#603936"/><rect x="472" y="384" fill="#613a36"/><rect x="480" y="384" fill="#623b37"/><rect x="488" y="384" fill="#633b38"/><rect x="24" y="392" fill="#754a44"/><rect x="32" y="392" fill="#744943"/><rect x="40" y="392" fill="#734842"/><rect x="48" y="392" fill="#724741"/><rect x="56" y="392" fill="#714640"/><rect x="64" y="392" fill="#744943"/><rect x="72" y="392" fill="#7a5048"/><rect x="80" y="392" fill="#7f564d"/><rect x="88" y="392" fill="#845b51"/><rect x="96" y="392" fill="#875f53"/><rect x="104" y="392" fill="#8a6256"/><rect x="112" y="392" fill="#8d6558"/><rect x="120" y="392" fill="#8f685a"/><rect x="128" y="392" fill="#916b5c"/><rect x="136" y="392" fill="#936d5e"/><rect x="144" y="392" fill="#956f60"/><rect x="152" y="392" fill="#977262"/><rect x="160" y="392" fill="#987464"/><rect x="168" y="392" fill="#9a7565"/><rect x="176" y="392" fill="#9b7767"/><rect x="184" y="392" fill="#9c7868"/><rect x="192" y="392" fill="#9d7869"/><rect x="200" y="392" fill="#9e7969"/><rect x="208" y="392" fill="#9e7969"/><rect x="216" y="392" fill="#9e7969"/><rect x="224" y="392" fill="#9e7a69"/><rect x="232" y="392" fill="#9e7969"/><rect x="240" y="392" fill="#9d7969"/><rect x="248" y="392" fill="#9d7968"/><rect x="256" y="392" fill="#9c7868"/><rect x="264" y="392" fill="#9c7868"/><rect x="272" y="392" fill="#9c7868"/><rect x="280" y="392" fill="#9c7867"/><rect x="288" y="392" fill="#9b7767"/><rect x="296" y="392" fill="#9a7666"/><rect x="304" y="392" fill="#997565"/><rect x="312" y="392" fill="#987464"/><rect x="320" y="392" fill="#967263"/><rect x="328" y="392" fill="#947061"/><rect x="336" y="392" fill="#916d5f"/><rect x="344" y="392" fill="#8f6b5d"/><rect x="352" y="392" fill="#8c685b"/><rect x="360" y="392" fill="#8a6558"/><rect x="368" y="392" fill="#876256"/><rect x="376" y="392" fill="#845f53"/><rect x="384" y="392" fill="#805b51"/><rect x="392" y="392" fill="#7d574e"/><rect x="400" y="392" fill="#79544b"/><rect x="408" y="392" fill="#754f48"/><rect x="416" y="392" fill="#714b44"/><rect x="424" y="392" fill="#6c4640"/><rect x="432" y="392" fill="#67413c"/><rect x="440" y="392" fill="#623c37"/><rect x="448" y="392" fill="#5c3633"/><rect x="456" y="392" fill="#5c3633"/><rect x="464" y="392" fill="#5e3734"/><rect x="472" y="392" fill="#5f3835"/><rect x="480" y="392" fill="#603936"/><rect x="32" y="400" fill="#724741"/><rect x="40" y="400" fill="#714641"/><rect x="48" y="400" fill="#704540"/><rect x="56" y="400" fill="#6f443f"/><rect x="64" y="400" fill="#6d433d"/><rect x="72" y="400" fill="#724842"/><rect x="80" y="400" fill="#784e47"/><rect x="88" y="400" fill="#7c534a"/><rect x="96" y="400" fill="#80574d"/><rect x="104" y="400" fill="#835b50"/><rect x="112" y="400" fill="#855e52"/><rect x="120" y="400" fill="#886155"/><rect x="128" y="400" fill="#8a6457"/><rect x="136" y="400" fill="#8d6759"/><rect x="144" y="400" fill="#8f695b"/><rect x="152" y="400" fill="#916c5d"/><rect x="160" y="400" fill="#936e60"/><rect x="168" y="400" fill="#957062"/><rect x="176" y="400" fill="#977263"/><rect x="184" y="400" fill="#987364"/><rect x="192" y="400" fill="#997465"/><rect x="200" y="400" fill="#9a7466"/><rect x="208" y="400" fill="#9a7566"/><rect x="216" y="400" fill="#9a7566"/><rect x="224" y="400" fill="#9a7666"/><rect x="232" y="400" fill="#9a7566"/><rect x="240" y="400" fill="#9a7566"/><rect x="248" y="400" fill="#997565"/><rect x="256" y="400" fill="#997565"/><rect x="264" y="400" fill="#987465"/><rect x="272" y="400" fill="#987465"/><rect x="280" y="400" fill="#987464"/><rect x="288" y="400" fill="#977364"/><rect x="296" y="400" fill="#967263"/><rect x="304" y="400" fill="#957162"/><rect x="312" y="400" fill="#946f61"/><rect x="320" y="400" fill="#926d5f"/><rect x="328" y="400" fill="#8f6b5d"/><rect x="336" y="400" fill="#8d685b"/><rect x="344" y="400" fill="#8a6559"/><rect x="352" y="400" fill="#876256"/><rect x="360" y="400" fill="#845f53"/><rect x="368" y="400" fill="#805b51"/><rect x="376" y="400" fill="#7d584e"/><rect x="384" y="400" fill="#7a544b"/><rect x="392" y="400" fill="#765048"/><rect x="400" y="400" fill="#724c45"/><rect x="408" y="400" fill="#6e4841"/><rect x="416" y="400" fill="#69433d"/><rect x="424" y="400" fill="#653f39"/><rect x="432" y="400" fill="#603a35"/><rect x="440" y="400" fill="#5b3431"/><rect x="448" y="400" fill="#59322f"/><rect x="456" y="400" fill="#5a3431"/><rect x="464" y="400" fill="#5c3532"/><rect x="472" y="400" fill="#5d3633"/><rect x="480" y="400" fill="#5e3734"/><rect x="40" y="408" fill="#70453f"/><rect x="48" y="408" fill="#6e443e"/><rect x="56" y="408" fill="#6d423d"/><rect x="64" y="408" fill="#6b403b"/><rect x="72" y="408" fill="#693f3a"/><rect x="80" y="408" fill="#6e443e"/><rect x="88" y="408" fill="#734942"/><rect x="96" y="408" fill="#774e46"/><rect x="104" y="408" fill="#7a5249"/><rect x="112" y="408" fill="#7e564b"/><rect x="120" y="408" fill="#80594e"/><rect x="128" y="408" fill="#835c51"/><rect x="136" y="408" fill="#865f53"/><rect x="144" y="408" fill="#886256"/><rect x="152" y="408" fill="#8b6558"/><rect x="160" y="408" fill="#8d685b"/><rect x="168" y="408" fill="#8f6b5d"/><rect x="176" y="408" fill="#916d5f"/><rect x="184" y="408" fill="#936e61"/><rect x="192" y="408" fill="#946f62"/><rect x="200" y="408" fill="#957062"/><rect x="208" y="408" fill="#967163"/><rect x="216" y="408" fill="#967163"/><rect x="224" y="408" fill="#967163"/><rect x="232" y="408" fill="#967163"/><rect x="240" y="408" fill="#967162"/><rect x="248" y="408" fill="#957162"/><rect x="256" y="408" fill="#957162"/><rect x="264" y="408" fill="#957061"/><rect x="272" y="408" fill="#947061"/><rect x="280" y="408" fill="#946f61"/><rect x="288" y="408" fill="#936f61"/><rect x="296" y="408" fill="#926d60"/><rect x="304" y="408" fill="#916c5f"/><rect x="312" y="408" fill="#8f6a5e"/><rect x="320" y="408" fill="#8d685c"/><rect x="328" y="408" fill="#8a6559"/><rect x="336" y="408" fill="#876257"/><rect x="344" y="408" fill="#845f54"/><rect x="352" y="408" fill="#815b51"/><rect x="360" y="408" fill="#7d584e"/><rect x="368" y="408" fill="#7a544b"/><rect x="376" y="408" fill="#765048"/><rect x="384" y="408" fill="#724c44"/><rect x="392" y="408" fill="#6e4841"/><rect x="400" y="408" fill="#6a443e"/><rect x="408" y="408" fill="#66403a"/><rect x="416" y="408" fill="#623c36"/><rect x="424" y="408" fill="#5d3732"/><rect x="432" y="408" fill="#58322e"/><rect x="440" y="408" fill="#552f2c"/><rect x="448" y="408" fill="#57302d"/><rect x="456" y="408" fill="#58322f"/><rect x="464" y="408" fill="#5a3330"/><rect x="472" y="408" fill="#5b3532"/><rect x="48" y="416" fill="#6c423d"/><rect x="56" y="416" fill="#6b403b"/><rect x="64" y="416" fill="#683e39"/><rect x="72" y="416" fill="#663b37"/><rect x="80" y="416" fill="#643a35"/><rect x="88" y="416" fill="#693f39"/><rect x="96" y="416" fill="#6d443d"/><rect x="104" y="416" fill="#714841"/><rect x="112" y="416" fill="#754c44"/><rect x="120" y="416" fill="#785047"/><rect x="128" y="416" fill="#7b544a"/><rect x="136" y="416" fill="#7e574c"/><rect x="144" y="416" fill="#815b4f"/><rect x="152" y="416" fill="#835e52"/><rect x="160" y="416" fill="#866155"/><rect x="168" y="416" fill="#896458"/><rect x="176" y="416" fill="#8b675a"/><rect x="184" y="416" fill="#8d695c"/><rect x="192" y="416" fill="#8f6a5e"/><rect x="200" y="416" fill="#906b5f"/><rect x="208" y="416" fill="#916c5f"/><rect x="216" y="416" fill="#926d60"/><rect x="224" y="416" fill="#926d60"/><rect x="232" y="416" fill="#916d5f"/><rect x="240" y="416" fill="#916d5f"/><rect x="248" y="416" fill="#916c5e"/><rect x="256" y="416" fill="#906c5e"/><rect x="264" y="416" fill="#906c5e"/><rect x="272" y="416" fill="#906b5e"/><rect x="280" y="416" fill="#8f6b5e"/><rect x="288" y="416" fill="#8f6a5d"/><rect x="296" y="416" fill="#8e685d"/><rect x="304" y="416" fill="#8c675b"/><rect x="312" y="416" fill="#8a645a"/><rect x="320" y="416" fill="#886257"/><rect x="328" y="416" fill="#855f55"/><rect x="336" y="416" fill="#815b52"/><rect x="344" y="416" fill="#7e584e"/><rect x="352" y="416" fill="#7a544b"/><rect x="360" y="416" fill="#765048"/><rect x="368" y="416" fill="#724c44"/><rect x="376" y="416" fill="#6f4841"/><rect x="384" y="416" fill="#6b443e"/><rect x="392" y="416" fill="#67403a"/><rect x="400" y="416" fill="#623c37"/><rect x="408" y="416" fill="#5e3833"/><rect x="416" y="416" fill="#59332f"/><rect x="424" y="416" fill="#552f2b"/><rect x="432" y="416" fill="#512b28"/><rect x="440" y="416" fill="#532d29"/><rect x="448" y="416" fill="#552f2b"/><rect x="456" y="416" fill="#56302d"/><rect x="464" y="416" fill="#58322e"/><rect x="48" y="424" fill="#6a3f3b"/><rect x="56" y="424" fill="#683d39"/><rect x="64" y="424" fill="#653b36"/><rect x="72" y="424" fill="#623834"/><rect x="80" y="424" fill="#5f3531"/><rect x="88" y="424" fill="#5f3430"/><rect x="96" y="424" fill="#633a34"/><rect x="104" y="424" fill="#683e38"/><rect x="112" y="424" fill="#6c433c"/><rect x="120" y="424" fill="#6f473f"/><rect x="128" y="424" fill="#724a42"/><rect x="136" y="424" fill="#754e45"/><rect x="144" y="424" fill="#785248"/><rect x="152" y="424" fill="#7b554b"/><rect x="160" y="424" fill="#7e594e"/><rect x="168" y="424" fill="#815d52"/><rect x="176" y="424" fill="#846054"/><rect x="184" y="424" fill="#876257"/><rect x="192" y="424" fill="#896459"/><rect x="200" y="424" fill="#8a665a"/><rect x="208" y="424" fill="#8c675b"/><rect x="216" y="424" fill="#8c685b"/><rect x="224" y="424" fill="#8c685b"/><rect x="232" y="424" fill="#8c685b"/><rect x="240" y="424" fill="#8c685b"/><rect x="248" y="424" fill="#8c675a"/><rect x="256" y="424" fill="#8b675a"/><rect x="264" y="424" fill="#8b675a"/><rect x="272" y="424" fill="#8b665a"/><rect x="280" y="424" fill="#8a655a"/><rect x="288" y="424" fill="#8a6459"/><rect x="296" y="424" fill="#886358"/><rect x="304" y="424" fill="#876157"/><rect x="312" y="424" fill="#855f55"/><rect x="320" y="424" fill="#825c52"/><rect x="328" y="424" fill="#7f584f"/><rect x="336" y="424" fill="#7b544c"/><rect x="344" y="424" fill="#775048"/><rect x="352" y="424" fill="#734c45"/><rect x="360" y="424" fill="#6f4841"/><rect x="368" y="424" fill="#6b443d"/><rect x="376" y="424" fill="#67403a"/><rect x="384" y="424" fill="#633c36"/><rect x="392" y="424" fill="#5f3833"/><rect x="400" y="424" fill="#5a332f"/><rect x="408" y="424" fill="#562f2b"/><rect x="416" y="424" fill="#512b27"/><rect x="424" y="424" fill="#4e2724"/><rect x="432" y="424" fill="#4f2925"/><rect x="440" y="424" fill="#512b27"/><rect x="448" y="424" fill="#532d29"/><rect x="456" y="424" fill="#542e2b"/><rect x="56" y="432" fill="#653a36"/><rect x="64" y="432" fill="#623833"/><rect x="72" y="432" fill="#5f3531"/><rect x="80" y="432" fill="#5d332f"/><rect x="88" y="432" fill="#5b302d"/><rect x="96" y="432" fill="#5a2f2c"/><rect x="104" y="432" fill="#5e3430"/><rect x="112" y="432" fill="#623933"/><rect x="120" y="432" fill="#653d37"/><rect x="128" y="432" fill="#69403a"/><rect x="136" y="432" fill="#6c443d"/><rect x="144" y="432" fill="#6f4840"/><rect x="152" y="432" fill="#724c43"/><rect x="160" y="432" fill="#755047"/><rect x="168" y="432" fill="#79544a"/><rect x="176" y="432" fill="#7c584d"/><rect x="184" y="432" fill="#7f5b50"/><rect x="192" y="432" fill="#825e53"/><rect x="200" y="432" fill="#846055"/><rect x="208" y="432" fill="#856156"/><rect x="216" y="432" fill="#866256"/><rect x="224" y="432" fill="#866257"/><rect x="232" y="432" fill="#866257"/><rect x="240" y="432" fill="#866256"/><rect x="248" y="432" fill="#866256"/><rect x="256" y="432" fill="#856155"/><rect x="264" y="432" fill="#856155"/><rect x="272" y="432" fill="#856055"/><rect x="280" y="432" fill="#845f55"/><rect x="288" y="432" fill="#845e54"/><rect x="296" y="432" fill="#835d54"/><rect x="304" y="432" fill="#815b52"/><rect x="312" y="432" fill="#7f5850"/><rect x="320" y="432" fill="#7c554d"/><rect x="328" y="432" fill="#785149"/><rect x="336" y="432" fill="#744c45"/><rect x="344" y="432" fill="#6f4841"/><rect x="352" y="432" fill="#6b433d"/><rect x="360" y="432" fill="#663f39"/><rect x="368" y="432" fill="#623b36"/><rect x="376" y="432" fill="#5e3732"/><rect x="384" y="432" fill="#5a332f"/><rect x="392" y="432" fill="#562f2b"/><rect x="400" y="432" fill="#522a27"/><rect x="408" y="432" fill="#4d2623"/><rect x="416" y="432" fill="#4a2320"/><rect x="424" y="432" fill="#4c2522"/><rect x="432" y="432" fill="#4e2724"/><rect x="440" y="432" fill="#4f2925"/><rect x="448" y="432" fill="#512b27"/><rect x="64" y="440" fill="#5f3531"/><rect x="72" y="440" fill="#5d332f"/><rect x="80" y="440" fill="#5b312d"/><rect x="88" y="440" fill="#592e2b"/><rect x="96" y="440" fill="#562c29"/><rect x="104" y="440" fill="#542a27"/><rect x="112" y="440" fill="#582e2a"/><rect x="120" y="440" fill="#5b322d"/><rect x="128" y="440" fill="#5e3630"/><rect x="136" y="440" fill="#613933"/><rect x="144" y="440" fill="#643d37"/><rect x="152" y="440" fill="#68413a"/><rect x="160" y="440" fill="#6c463e"/><rect x="168" y="440" fill="#6f4a42"/><rect x="176" y="440" fill="#734f45"/><rect x="184" y="440" fill="#775249"/><rect x="192" y="440" fill="#7a564c"/><rect x="200" y="440" fill="#7d584e"/><rect x="208" y="440" fill="#7e5a50"/><rect x="216" y="440" fill="#7f5b51"/><rect x="224" y="440" fill="#805b51"/><rect x="232" y="440" fill="#7f5b51"/><rect x="240" y="440" fill="#7f5b51"/><rect x="248" y="440" fill="#7f5b51"/><rect x="256" y="440" fill="#7f5a50"/><rect x="264" y="440" fill="#7e5a50"/><rect x="272" y="440" fill="#7e5950"/><rect x="280" y="440" fill="#7e5850"/><rect x="288" y="440" fill="#7d574f"/><rect x="296" y="440" fill="#7c564e"/><rect x="304" y="440" fill="#7a544c"/><rect x="312" y="440" fill="#78514a"/><rect x="320" y="440" fill="#744d47"/><rect x="328" y="440" fill="#704943"/><rect x="336" y="440" fill="#6c443e"/><rect x="344" y="440" fill="#673f3a"/><rect x="352" y="440" fill="#623a35"/><rect x="360" y="440" fill="#5e3531"/><rect x="368" y="440" fill="#59312d"/><rect x="376" y="440" fill="#552d2a"/><rect x="384" y="440" fill="#512926"/><rect x="392" y="440" fill="#4d2523"/><rect x="400" y="440" fill="#49211f"/><rect x="408" y="440" fill="#471f1d"/><rect x="416" y="440" fill="#49211f"/><rect x="424" y="440" fill="#4a2320"/><rect x="432" y="440" fill="#4c2522"/><rect x="440" y="440" fill="#4e2724"/><rect x="448" y="440" fill="#4f2925"/><rect x="72" y="448" fill="#5b312d"/><rect x="80" y="448" fill="#592f2b"/><rect x="88" y="448" fill="#572c29"/><rect x="96" y="448" fill="#552a27"/><rect x="104" y="448" fill="#522825"/><rect x="112" y="448" fill="#4f2523"/><rect x="120" y="448" fill="#512724"/><rect x="128" y="448" fill="#532b27"/><rect x="136" y="448" fill="#562e29"/><rect x="144" y="448" fill="#59322d"/><rect x="152" y="448" fill="#5d3630"/><rect x="160" y="448" fill="#613b34"/><rect x="168" y="448" fill="#654038"/><rect x="176" y="448" fill="#6a443d"/><rect x="184" y="448" fill="#6e4941"/><rect x="192" y="448" fill="#714d44"/><rect x="200" y="448" fill="#745047"/><rect x="208" y="448" fill="#765249"/><rect x="216" y="448" fill="#77534a"/><rect x="224" y="448" fill="#77534a"/><rect x="232" y="448" fill="#77534b"/><rect x="240" y="448" fill="#77534b"/><rect x="248" y="448" fill="#77534b"/><rect x="256" y="448" fill="#77524a"/><rect x="264" y="448" fill="#76524a"/><rect x="272" y="448" fill="#76514a"/><rect x="280" y="448" fill="#755049"/><rect x="288" y="448" fill="#754f48"/><rect x="296" y="448" fill="#744d47"/><rect x="304" y="448" fill="#734c46"/><rect x="312" y="448" fill="#704943"/><rect x="320" y="448" fill="#6c453f"/><rect x="328" y="448" fill="#68403b"/><rect x="336" y="448" fill="#633a36"/><rect x="344" y="448" fill="#5e3531"/><rect x="352" y="448" fill="#59302d"/><rect x="360" y="448" fill="#542b28"/><rect x="368" y="448" fill="#502724"/><rect x="376" y="448" fill="#4c2321"/><rect x="384" y="448" fill="#481f1d"/><rect x="392" y="448" fill="#441b1a"/><rect x="400" y="448" fill="#441c1a"/><rect x="408" y="448" fill="#451e1c"/><rect x="416" y="448" fill="#47201d"/><rect x="424" y="448" fill="#49221f"/><rect x="432" y="448" fill="#4a2421"/><rect x="440" y="448" fill="#4c2522"/><rect x="80" y="456" fill="#572d2a"/><rect x="88" y="456" fill="#552b28"/><rect x="96" y="456" fill="#532825"/><rect x="104" y="456" fill="#502623"/><rect x="112" y="456" fill="#4d2321"/><rect x="120" y="456" fill="#4a201e"/><rect x="128" y="456" fill="#481f1c"/><rect x="136" y="456" fill="#4b221f"/><rect x="144" y="456" fill="#4e2622"/><rect x="152" y="456" fill="#512a26"/><rect x="160" y="456" fill="#552f2a"/><rect x="168" y="456" fill="#5a342e"/><rect x="176" y="456" fill="#5f3933"/><rect x="184" y="456" fill="#633f37"/><rect x="192" y="456" fill="#68433b"/><rect x="200" y="456" fill="#6b473f"/><rect x="208" y="456" fill="#6d4941"/><rect x="216" y="456" fill="#6e4a42"/><rect x="224" y="456" fill="#6e4a42"/><rect x="232" y="456" fill="#6e4a43"/><rect x="240" y="456" fill="#6e4a43"/><rect x="248" y="456" fill="#6e4943"/><rect x="256" y="456" fill="#6d4943"/><rect x="264" y="456" fill="#6d4843"/><rect x="272" y="456" fill="#6d4742"/><rect x="280" y="456" fill="#6c4641"/><rect x="288" y="456" fill="#6c4540"/><rect x="296" y="456" fill="#6b443f"/><rect x="304" y="456" fill="#6a423e"/><rect x="312" y="456" fill="#67403b"/><rect x="320" y="456" fill="#633b37"/><rect x="328" y="456" fill="#5e3632"/><rect x="336" y="456" fill="#59302d"/><rect x="344" y="456" fill="#542b28"/><rect x="352" y="456" fill="#4e2523"/><rect x="360" y="456" fill="#4a211f"/><rect x="368" y="456" fill="#451c1b"/><rect x="376" y="456" fill="#421817"/><rect x="384" y="456" fill="#3f1615"/><rect x="392" y="456" fill="#401817"/><rect x="400" y="456" fill="#421a19"/><rect x="408" y="456" fill="#441c1a"/><rect x="416" y="456" fill="#461e1c"/><rect x="424" y="456" fill="#47201e"/><rect x="88" y="464" fill="#532926"/><rect x="96" y="464" fill="#512724"/><rect x="104" y="464" fill="#4e2421"/><rect x="112" y="464" fill="#4b211f"/><rect x="120" y="464" fill="#481f1c"/><rect x="128" y="464" fill="#451c19"/><rect x="136" y="464" fill="#421917"/><rect x="144" y="464" fill="#421a17"/><rect x="152" y="464" fill="#451e1b"/><rect x="160" y="464" fill="#4a231f"/><rect x="168" y="464" fill="#4e2824"/><rect x="176" y="464" fill="#532e28"/><rect x="184" y="464" fill="#58332d"/><rect x="192" y="464" fill="#5c3831"/><rect x="200" y="464" fill="#603b35"/><rect x="208" y="464" fill="#623e37"/><rect x="216" y="464" fill="#623e38"/><rect x="224" y="464" fill="#633f39"/><rect x="232" y="464" fill="#633f39"/><rect x="240" y="464" fill="#633e3a"/><rect x="248" y="464" fill="#633e3a"/><rect x="256" y="464" fill="#633e3a"/><rect x="264" y="464" fill="#623d39"/><rect x="272" y="464" fill="#623c38"/><rect x="280" y="464" fill="#613b37"/><rect x="288" y="464" fill="#613a37"/><rect x="296" y="464" fill="#603935"/><rect x="304" y="464" fill="#5f3734"/><rect x="312" y="464" fill="#5d3531"/><rect x="320" y="464" fill="#59302d"/><rect x="328" y="464" fill="#542b28"/><rect x="336" y="464" fill="#4e2523"/><rect x="344" y="464" fill="#491f1e"/><rect x="352" y="464" fill="#431a19"/><rect x="360" y="464" fill="#3f1515"/><rect x="368" y="464" fill="#3b1111"/><rect x="376" y="464" fill="#3c1212"/><rect x="384" y="464" fill="#3d1414"/><rect x="392" y="464" fill="#3f1616"/><rect x="400" y="464" fill="#411817"/><rect x="408" y="464" fill="#431a19"/><rect x="416" y="464" fill="#451d1b"/><rect x="104" y="472" fill="#4c2220"/><rect x="112" y="472" fill="#49201d"/><rect x="120" y="472" fill="#461d1b"/><rect x="128" y="472" fill="#431a18"/><rect x="136" y="472" fill="#401816"/><rect x="144" y="472" fill="#3e1613"/><rect x="152" y="472" fill="#3c1412"/><rect x="160" y="472" fill="#3e1714"/><rect x="168" y="472" fill="#431c19"/><rect x="176" y="472" fill="#47211d"/><rect x="184" y="472" fill="#4c2722"/><rect x="192" y="472" fill="#502b26"/><rect x="200" y="472" fill="#532f29"/><rect x="208" y="472" fill="#55312b"/><rect x="216" y="472" fill="#56322d"/><rect x="224" y="472" fill="#56322d"/><rect x="232" y="472" fill="#56322e"/><rect x="240" y="472" fill="#56322e"/><rect x="248" y="472" fill="#56322f"/><rect x="256" y="472" fill="#56312f"/><rect x="264" y="472" fill="#55302e"/><rect x="272" y="472" fill="#552f2d"/><rect x="280" y="472" fill="#552f2c"/><rect x="288" y="472" fill="#542e2c"/><rect x="296" y="472" fill="#542d2a"/><rect x="304" y="472" fill="#532b29"/><rect x="312" y="472" fill="#502826"/><rect x="320" y="472" fill="#4d2422"/><rect x="328" y="472" fill="#481f1e"/><rect x="336" y="472" fill="#431a19"/><rect x="344" y="472" fill="#3e1413"/><rect x="352" y="472" fill="#380f0e"/><rect x="360" y="472" fill="#380e0e"/><rect x="368" y="472" fill="#391010"/><rect x="376" y="472" fill="#3b1111"/><rect x="384" y="472" fill="#3c1313"/><rect x="392" y="472" fill="#3e1514"/><rect x="400" y="472" fill="#401716"/><rect x="408" y="472" fill="#421918"/><rect x="112" y="480" fill="#471e1b"/><rect x="120" y="480" fill="#441b19"/><rect x="128" y="480" fill="#421917"/><rect x="136" y="480" fill="#3f1714"/><rect x="144" y="480" fill="#3d1513"/><rect x="152" y="480" fill="#3c1412"/><rect x="160" y="480" fill="#3b1412"/><rect x="168" y="480" fill="#3b1412"/><rect x="176" y="480" fill="#3b1512"/><rect x="184" y="480" fill="#3f1a16"/><rect x="192" y="480" fill="#431e1a"/><rect x="200" y="480" fill="#46211d"/><rect x="208" y="480" fill="#47231f"/><rect x="216" y="480" fill="#482420"/><rect x="224" y="480" fill="#482421"/><rect x="232" y="480" fill="#482421"/><rect x="240" y="480" fill="#472321"/><rect x="248" y="480" fill="#472321"/><rect x="256" y="480" fill="#472221"/><rect x="264" y="480" fill="#472221"/><rect x="272" y="480" fill="#472120"/><rect x="280" y="480" fill="#472120"/><rect x="288" y="480" fill="#47201f"/><rect x="296" y="480" fill="#471f1e"/><rect x="304" y="480" fill="#451e1d"/><rect x="312" y="480" fill="#431b1a"/><rect x="320" y="480" fill="#401717"/><rect x="328" y="480" fill="#3c1313"/><rect x="336" y="480" fill="#390f0f"/><rect x="344" y="480" fill="#380e0e"/><rect x="352" y="480" fill="#380e0e"/><rect x="360" y="480" fill="#380e0e"/><rect x="368" y="480" fill="#390f0f"/><rect x="376" y="480" fill="#3a1010"/><rect x="384" y="480" fill="#3c1212"/><rect x="392" y="480" fill="#3d1413"/><rect x="400" y="480" fill="#3f1615"/><rect x="128" y="488" fill="#401815"/><rect x="136" y="488" fill="#3e1613"/><rect x="144" y="488" fill="#3c1412"/><rect x="152" y="488" fill="#3b1412"/><rect x="160" y="488" fill="#3b1412"/><rect x="168" y="488" fill="#3b1512"/><rect x="176" y="488" fill="#3b1512"/><rect x="184" y="488" fill="#3b1513"/><rect x="192" y="488" fill="#3b1512"/><rect x="200" y="488" fill="#3a1512"/><rect x="208" y="488" fill="#3a1512"/><rect x="216" y="488" fill="#3a1613"/><rect x="224" y="488" fill="#3a1614"/><rect x="232" y="488" fill="#391513"/><rect x="240" y="488" fill="#381413"/><rect x="248" y="488" fill="#371312"/><rect x="256" y="488" fill="#371211"/><rect x="264" y="488" fill="#371212"/><rect x="272" y="488" fill="#381312"/><rect x="280" y="488" fill="#391313"/><rect x="288" y="488" fill="#391312"/><rect x="296" y="488" fill="#391212"/><rect x="304" y="488" fill="#381010"/><rect x="312" y="488" fill="#391011"/><rect x="320" y="488" fill="#391111"/><rect x="328" y="488" fill="#391010"/><rect x="336" y="488" fill="#391010"/><rect x="344" y="488" fill="#380f0f"/><rect x="352" y="488" fill="#380e0e"/><rect x="360" y="488" fill="#380e0e"/><rect x="368" y="488" fill="#380f0e"/><rect x="376" y="488" fill="#39100f"/><rect x="384" y="488" fill="#3b1111"/><rect x="144" y="496" fill="#3c1412"/><rect x="152" y="496" fill="#3b1412"/><rect x="160" y="496" fill="#3b1412"/><rect x="168" y="496" fill="#3b1512"/><rect x="176" y="496" fill="#3b1512"/><rect x="184" y="496" fill="#3b1513"/><rect x="192" y="496" fill="#3a1512"/><rect x="200" y="496" fill="#391412"/><rect x="208" y="496" fill="#381311"/><rect x="216" y="496" fill="#36110f"/><rect x="224" y="496" fill="#340f0e"/><rect x="232" y="496" fill="#320d0c"/><rect x="240" y="496" fill="#2f0b0a"/><rect x="248" y="496" fill="#2d0908"/><rect x="256" y="496" fill="#2d0808"/><rect x="264" y="496" fill="#2e0909"/><rect x="272" y="496" fill="#300a0a"/><rect x="280" y="496" fill="#320c0c"/><rect x="288" y="496" fill="#340d0d"/><rect x="296" y="496" fill="#360f0f"/><rect x="304" y="496" fill="#371010"/><rect x="312" y="496" fill="#391010"/><rect x="320" y="496" fill="#391111"/><rect x="328" y="496" fill="#391010"/><rect x="336" y="496" fill="#391010"/><rect x="344" y="496" fill="#390f0f"/><rect x="352" y="496" fill="#380e0e"/><rect x="360" y="496" fill="#380e0e"/><rect x="368" y="496" fill="#380e0e"/><rect x="160" y="504" fill="#3b1412"/><rect x="168" y="504" fill="#3b1512"/><rect x="176" y="504" fill="#3b1512"/><rect x="184" y="504" fill="#3b1513"/><rect x="192" y="504" fill="#3a1512"/><rect x="200" y="504" fill="#391412"/><rect x="208" y="504" fill="#381311"/><rect x="216" y="504" fill="#36110f"/><rect x="224" y="504" fill="#340f0e"/><rect x="232" y="504" fill="#310d0c"/><rect x="240" y="504" fill="#2f0b0a"/><rect x="248" y="504" fill="#2d0908"/><rect x="256" y="504" fill="#2d0808"/><rect x="264" y="504" fill="#2e0909"/><rect x="272" y="504" fill="#300a0a"/><rect x="280" y="504" fill="#320c0c"/><rect x="288" y="504" fill="#340d0d"/><rect x="296" y="504" fill="#350e0f"/><rect x="304" y="504" fill="#370f10"/><rect x="312" y="504" fill="#381010"/><rect x="320" y="504" fill="#391111"/><rect x="328" y="504" fill="#391011"/><rect x="336" y="504" fill="#391010"/><rect x="344" y="504" fill="#390f0f"/><rect x="352" y="504" fill="#380f0f"/><rect x="184" y="512" fill="#3b1513"/><rect x="192" y="512" fill="#3a1512"/><rect x="200" y="512" fill="#391411"/><rect x="208" y="512" fill="#371310"/><rect x="216" y="512" fill="#35110f"/><rect x="224" y="512" fill="#330f0d"/><rect x="232" y="512" fill="#310d0c"/><rect x="240" y="512" fill="#2f0b0a"/><rect x="248" y="512" fill="#2d0908"/><rect x="256" y="512" fill="#2d0808"/><rect x="264" y="512" fill="#2e0909"/><rect x="272" y="512" fill="#2f0a0a"/><rect x="280" y="512" fill="#310b0c"/><rect x="288" y="512" fill="#330d0d"/><rect x="296" y="512" fill="#350e0e"/><rect x="304" y="512" fill="#370f0f"/><rect x="312" y="512" fill="#381010"/><rect x="320" y="512" fill="#391111"/><rect x="328" y="512" fill="#391111"/></g></g></g>
<path d="M743.75 335.20L743.72 339.41L743.62 343.63L743.47 347.84L743.25 352.05L742.97 356.26L742.62 360.46L742.21 364.66L741.74 368.86L741.20 373.05L740.60 377.23L739.93 381.40L739.20 385.57L738.40 389.72L737.54 393.86L736.61 398.00L735.61 402.11L734.54 406.22L733.41 410.31L732.21 414.38L730.93 418.43L729.59 422.47L728.18 426.48L726.70 430.47L725.14 434.44L723.52 438.38L721.82 442.29L720.05 446.18L718.21 450.03L716.30 453.85L714.32 457.64L712.26 461.39L710.14 465.10L707.94 468.78L705.67 472.41L703.33 476.00L700.92 479.54L698.44 483.04L695.89 486.49L693.28 489.89L690.59 493.24L687.84 496.53L685.03 499.77L682.15 502.96L679.20 506.08L676.20 509.15L673.13 512.15L670.01 515.10L666.82 517.98L663.58 520.79L660.29 523.54L656.94 526.23L653.54 528.84L650.09 531.39L646.59 533.87L643.05 536.28L639.46 538.62L635.83 540.89L632.15 543.09L628.44 545.21L624.69 547.27L620.90 549.25L617.08 551.16L613.23 553.00L609.34 554.77L605.43 556.47L601.49 558.09L597.52 559.65L593.53 561.13L589.52 562.54L585.48 563.88L581.43 565.16L577.36 566.36L573.27 567.49L569.16 568.56L565.05 569.56L560.91 570.49L556.77 571.35L552.62 572.15L548.45 572.88L544.28 573.55L540.10 574.15L535.91 574.69L531.71 575.16L527.51 575.57L523.31 575.92L519.10 576.20L514.89 576.42L510.68 576.57L506.46 576.67L502.25 576.70L498.04 576.67L493.82 576.57L489.61 576.42L485.40 576.20L481.19 575.92L476.99 575.57L472.79 575.16L468.59 574.69L464.40 574.15L460.22 573.55L456.05 572.88L451.88 572.15L447.73 571.35L443.59 570.49L439.45 569.56L435.34 568.56L431.23 567.49L427.14 566.36L423.07 565.16L419.02 563.88L414.98 562.54L410.97 561.13L406.98 559.65L403.01 558.09L399.07 556.47L395.16 554.77L391.27 553.00L387.42 551.16L383.60 549.25L379.81 547.27L376.06 545.21L372.35 543.09L368.67 540.89L365.04 538.62L361.45 536.28L357.91 533.87L354.41 531.39L350.96 528.84L347.56 526.23L344.21 523.54L340.92 520.79L337.68 517.98L334.49 515.10L331.37 512.15L328.30 509.15L325.30 506.08L322.35 502.96L319.47 499.77L316.66 496.53L313.91 493.24L311.22 489.89L308.61 486.49L306.06 483.04L303.58 479.54L301.17 476.00L298.83 472.41L296.56 468.78L294.36 465.10L292.24 461.39L290.18 457.64L288.20 453.85L286.29 450.03L284.45 446.18L282.68 442.29L280.98 438.38L279.36 434.44L277.80 430.47L276.32 426.48L274.91 422.47L273.57 418.43L272.29 414.38L271.09 410.31L269.96 406.22L268.89 402.11L267.89 398.00L266.96 393.86L266.10 389.72L265.30 385.57L264.57 381.40L263.90 377.23L263.30 373.05L262.76 368.86L262.29 364.66L261.88 360.46L261.53 356.26L261.25 352.05L261.03 347.84L260.88 343.63L260.78 339.41L260.75 335.20L260.78 330.99L260.88 326.77L261.03 322.56L261.25 318.35L261.53 314.14L261.88 309.94L262.29 305.74L262.76 301.54L263.30 297.35L263.90 293.17L264.57 289.00L265.30 284.83L266.10 280.68L266.96 276.54L267.89 272.40L268.89 268.29L269.96 264.18L271.09 260.09L272.29 256.02L273.57 251.97L274.91 247.93L276.32 243.92L277.80 239.93L279.36 235.96L280.98 232.02L282.68 228.11L284.45 224.22L286.29 220.37L288.20 216.55L290.18 212.76L292.24 209.01L294.36 205.30L296.56 201.62L298.83 197.99L301.17 194.40L303.58 190.86L306.06 187.36L308.61 183.91L311.22 180.51L313.91 177.16L316.66 173.87L319.47 170.63L322.35 167.44L325.30 164.32L328.30 161.25L331.37 158.25L334.49 155.30L337.68 152.42L340.92 149.61L344.21 146.86L347.56 144.17L350.96 141.56L354.41 139.01L357.91 136.53L361.45 134.12L365.04 131.78L368.67 129.51L372.35 127.31L376.06 125.19L379.81 123.13L383.60 121.15L387.42 119.24L391.27 117.40L395.16 115.63L399.07 113.93L403.01 112.31L406.98 110.75L410.97 109.27L414.98 107.86L419.02 106.52L423.07 105.24L427.14 104.04L431.23 102.91L435.34 101.84L439.45 100.84L443.59 99.91L447.73 99.05L451.88 98.25L456.05 97.52L460.22 96.85L464.40 96.25L468.59 95.71L472.79 95.24L476.99 94.83L481.19 94.48L485.40 94.20L489.61 93.98L493.82 93.83L498.04 93.73L502.25 93.70L506.46 93.73L510.68 93.83L514.89 93.98L519.10 94.20L523.31 94.48L527.51 94.83L531.71 95.24L535.91 95.71L540.10 96.25L544.28 96.85L548.45 97.52L552.62 98.25L556.77 99.05L560.91 99.91L565.05 100.84L569.16 101.84L573.27 102.91L577.36 104.04L581.43 105.24L585.48 106.52L589.52 107.86L593.53 109.27L597.52 110.75L601.49 112.31L605.43 113.93L609.34 115.63L613.23 117.40L617.08 119.24L620.90 121.15L624.69 123.13L628.44 125.19L632.15 127.31L635.83 129.51L639.46 131.78L643.05 134.12L646.59 136.53L650.09 139.01L653.54 141.56L656.94 144.17L660.29 146.86L663.58 149.61L666.82 152.42L670.01 155.30L673.13 158.25L676.20 161.25L679.20 164.32L682.15 167.44L685.03 170.63L687.84 173.87L690.59 177.16L693.28 180.51L695.89 183.91L698.44 187.36L700.92 190.86L703.33 194.40L705.67 197.99L707.94 201.62L710.14 205.30L712.26 209.01L714.32 212.76L716.30 216.55L718.21 220.37L720.05 224.22L721.82 228.11L723.52 232.02L725.14 235.96L726.70 239.93L728.18 243.92L729.59 247.93L730.93 251.97L732.21 256.02L733.41 260.09L734.54 264.18L735.61 268.29L736.61 272.40L737.54 276.54L738.40 280.68L739.20 284.83L739.93 289.00L740.60 293.17L741.20 297.35L741.74 301.54L742.21 305.74L742.62 309.94L742.97 314.14L743.25 318.35L743.47 322.56L743.62 326.77L743.72 330.99Z" fill="none" stroke="url(#rimg)" stroke-width="1.2"/>
<path d="M745.25 335.20L745.22 339.44L745.12 343.68L744.97 347.92L744.75 352.16L744.46 356.39L744.11 360.62L743.70 364.85L743.22 369.07L742.68 373.28L742.08 377.49L741.41 381.69L740.67 385.88L739.86 390.06L738.99 394.23L738.06 398.38L737.05 402.53L735.98 406.66L734.84 410.77L733.62 414.87L732.34 418.95L730.99 423.01L729.57 427.04L728.08 431.06L726.51 435.05L724.88 439.01L723.17 442.95L721.39 446.86L719.54 450.73L717.61 454.58L715.62 458.39L713.55 462.16L711.41 465.90L709.20 469.59L706.91 473.25L704.56 476.86L702.13 480.42L699.64 483.94L697.08 487.41L694.44 490.83L691.74 494.20L688.97 497.52L686.14 500.78L683.24 503.98L680.28 507.12L677.26 510.21L674.17 513.23L671.03 516.19L667.83 519.09L664.57 521.92L661.25 524.69L657.88 527.39L654.46 530.03L650.99 532.59L647.47 535.08L643.91 537.51L640.30 539.86L636.64 542.15L632.95 544.36L629.21 546.50L625.44 548.57L621.63 550.56L617.78 552.49L613.91 554.34L610.00 556.12L606.06 557.83L602.10 559.46L598.11 561.03L594.09 562.52L590.06 563.94L586.00 565.29L581.92 566.57L577.82 567.79L573.71 568.93L569.58 570.00L565.43 571.01L561.28 571.94L557.11 572.81L552.93 573.62L548.74 574.36L544.54 575.03L540.33 575.63L536.12 576.17L531.90 576.65L527.67 577.06L523.44 577.41L519.21 577.70L514.97 577.92L510.73 578.07L506.49 578.17L502.25 578.20L498.01 578.17L493.77 578.07L489.53 577.92L485.29 577.70L481.06 577.41L476.83 577.06L472.60 576.65L468.38 576.17L464.17 575.63L459.96 575.03L455.76 574.36L451.57 573.62L447.39 572.81L443.22 571.94L439.07 571.01L434.92 570.00L430.79 568.93L426.68 567.79L422.58 566.57L418.50 565.29L414.44 563.94L410.41 562.52L406.39 561.03L402.40 559.46L398.44 557.83L394.50 556.12L390.59 554.34L386.72 552.49L382.87 550.56L379.06 548.57L375.29 546.50L371.55 544.36L367.86 542.15L364.20 539.86L360.59 537.51L357.03 535.08L353.51 532.59L350.04 530.03L346.62 527.39L343.25 524.69L339.93 521.92L336.67 519.09L333.47 516.19L330.33 513.23L327.24 510.21L324.22 507.12L321.26 503.98L318.36 500.78L315.53 497.52L312.76 494.20L310.06 490.83L307.42 487.41L304.86 483.94L302.37 480.42L299.94 476.86L297.59 473.25L295.30 469.59L293.09 465.90L290.95 462.16L288.88 458.39L286.89 454.58L284.96 450.73L283.11 446.86L281.33 442.95L279.62 439.01L277.99 435.05L276.42 431.06L274.93 427.04L273.51 423.01L272.16 418.95L270.88 414.87L269.66 410.77L268.52 406.66L267.45 402.53L266.44 398.38L265.51 394.23L264.64 390.06L263.83 385.88L263.09 381.69L262.42 377.49L261.82 373.28L261.28 369.07L260.80 364.85L260.39 360.62L260.04 356.39L259.75 352.16L259.53 347.92L259.38 343.68L259.28 339.44L259.25 335.20L259.28 330.96L259.38 326.72L259.53 322.48L259.75 318.24L260.04 314.01L260.39 309.78L260.80 305.55L261.28 301.33L261.82 297.12L262.42 292.91L263.09 288.71L263.83 284.52L264.64 280.34L265.51 276.17L266.44 272.02L267.45 267.87L268.52 263.74L269.66 259.63L270.88 255.53L272.16 251.45L273.51 247.39L274.93 243.36L276.42 239.34L277.99 235.35L279.62 231.39L281.33 227.45L283.11 223.54L284.96 219.67L286.89 215.82L288.88 212.01L290.95 208.24L293.09 204.50L295.30 200.81L297.59 197.15L299.94 193.54L302.37 189.98L304.86 186.46L307.42 182.99L310.06 179.57L312.76 176.20L315.53 172.88L318.36 169.62L321.26 166.42L324.22 163.28L327.24 160.19L330.33 157.17L333.47 154.21L336.67 151.31L339.93 148.48L343.25 145.71L346.62 143.01L350.04 140.37L353.51 137.81L357.03 135.32L360.59 132.89L364.20 130.54L367.86 128.25L371.55 126.04L375.29 123.90L379.06 121.83L382.87 119.84L386.72 117.91L390.59 116.06L394.50 114.28L398.44 112.57L402.40 110.94L406.39 109.37L410.41 107.88L414.44 106.46L418.50 105.11L422.58 103.83L426.68 102.61L430.79 101.47L434.92 100.40L439.07 99.39L443.22 98.46L447.39 97.59L451.57 96.78L455.76 96.04L459.96 95.37L464.17 94.77L468.38 94.23L472.60 93.75L476.83 93.34L481.06 92.99L485.29 92.70L489.53 92.48L493.77 92.33L498.01 92.23L502.25 92.20L506.49 92.23L510.73 92.33L514.97 92.48L519.21 92.70L523.44 92.99L527.67 93.34L531.90 93.75L536.12 94.23L540.33 94.77L544.54 95.37L548.74 96.04L552.93 96.78L557.11 97.59L561.28 98.46L565.43 99.39L569.58 100.40L573.71 101.47L577.82 102.61L581.92 103.83L586.00 105.11L590.06 106.46L594.09 107.88L598.11 109.37L602.10 110.94L606.06 112.57L610.00 114.28L613.91 116.06L617.78 117.91L621.63 119.84L625.44 121.83L629.21 123.90L632.95 126.04L636.64 128.25L640.30 130.54L643.91 132.89L647.47 135.32L650.99 137.81L654.46 140.37L657.88 143.01L661.25 145.71L664.57 148.48L667.83 151.31L671.03 154.21L674.17 157.17L677.26 160.19L680.28 163.28L683.24 166.42L686.14 169.62L688.97 172.88L691.74 176.20L694.44 179.57L697.08 182.99L699.64 186.46L702.13 189.98L704.56 193.54L706.91 197.15L709.20 200.81L711.41 204.50L713.55 208.24L715.62 212.01L717.61 215.82L719.54 219.67L721.39 223.54L723.17 227.45L724.88 231.39L726.51 235.35L728.08 239.34L729.57 243.36L730.99 247.39L732.34 251.45L733.62 255.53L734.84 259.63L735.98 263.74L737.05 267.87L738.06 272.02L738.99 276.17L739.86 280.34L740.67 284.52L741.41 288.71L742.08 292.91L742.68 297.12L743.22 301.33L743.70 305.55L744.11 309.78L744.46 314.01L744.75 318.24L744.97 322.48L745.12 326.72L745.22 330.96Z" fill="none" stroke="#121010" stroke-opacity="0.6" stroke-width="1"/>
<circle cx="768.3" cy="155.5" r="31.3" stroke="#7a6a40" stroke-width="1.05" fill="none"/>
<circle cx="768.5" cy="155.6" r="1.3" fill="#d0b8a4"/>
</svg>
<div id="top"><div class="mi" style="left:13.75px">Files (import/export)</div><div class="mi" style="left:109.8px">Scene</div><div class="mi" style="left:151.5px">History</div><div class="mi" style="left:197.5px">Background</div><div class="mi" style="left:261.25px">Camera</div><div class="mi" style="left:310.1px">Tablet pressure</div><div class="mi" style="left:388px">Language</div><div class="mi" style="left:443.5px">Extra UI</div><div class="mi" style="left:492px">About &amp; Help</div>
<div class="st" style="top:-0.8px">Vertex : 98306</div>
<div class="st" style="top:10.2px">Faces : 98304</div>
</div>
<div id="side"><div id="sb"></div>
<div class="fh" style="top:0px;border-top-color:#22262b"></div>
<div class="fh" style="top:22px"></div>
<div class="fh" style="top:44px;height:21px"></div>
</div>
<div id="ui" style="position:absolute;left:0;top:0;width:1200px;height:639px;will-change:transform">
<div class="ft" style="left:1087.4px;top:31px">RENDERING</div>
<div class="ft" style="left:1089px;top:53px">TOPOLOGY</div>
<div class="ft" style="left:1060.3px;top:75px">SCULPTING &amp; PAINTING</div>

<div class="ttl" style="left:1095.6px;top:95.3px">Tool</div>
<div class="sep" style="top:110px"></div>
<div class="lbl" style="top:119px">Tool</div>
<div class="sel" style="top:117px"></div>
<div class="seltx" style="left:1082.6px;top:119.5px">Smooth (-Shift)</div>
<div class="lbl" style="top:135px">Radius (-X)</div>
<div class="sl" style="top:133px"><div class="slf" style="width:8.2px"></div></div>
<div class="num" style="top:133px"></div>
<div class="numtx" style="left:1184.8px;top:136.5px">50</div>
<div class="lbl" style="top:151px">Intensity (-C)</div>
<div class="sl" style="top:149px"><div class="slf" style="width:72.7px"></div></div>
<div class="num" style="top:149px"></div>
<div class="numtx" style="left:1184.8px;top:152.5px">75</div>
<div class="lbl" style="top:167px">Relax only</div>
<div class="cb" style="top:167px"></div>
<div class="lbl" style="top:183px">Thin surface (front vertex only)</div>
<div class="cb" style="top:183px"></div>
<div class="ttl" style="left:1092.0px;top:203.3px">Alpha</div>
<div class="sep" style="top:217px"></div>
<div class="lbl" style="top:226px">Lock position</div>
<div class="cb" style="top:225.7px"></div>
<div class="lbl" style="top:241px">Texture</div>
<div class="sel" style="top:240.5px"></div>
<div class="seltx" style="left:1082.8px;top:243px">None</div>
<div class="sel" style="left:1011.5px;width:185.7px;top:257px;height:13px"></div>
<div class="seltx" style="left:1051.5px;top:259px">Import alpha tex (jpg, png...)</div>
<div class="ttl" style="left:1085.0px;top:277.3px">Common</div>
<div class="sep" style="top:291px"></div>
<div class="lbl" style="top:299px">Symmetry</div>
<div class="cb" style="top:299.6px;background:#0c0e12"></div>
<div class="lbl" style="top:316.5px">Continuous</div>
<div class="cb" style="top:316px"></div>
<svg style="position:absolute;left:0;top:0" width="1200" height="639">
<path d="M1018.8 32.7L1026.2 36L1018.8 39.3Z" fill="#eeeeee"/>
<path d="M1018.8 54.7L1026.2 58L1018.8 61.3Z" fill="#eeeeee"/>
<path d="M1019.4 76.3L1026.3 76.3L1022.85 83.1Z" fill="#eeeeee"/>
<path d="M1188.4 304.3L1190.6 307.8L1196.3 300.2" stroke="#f2f2f2" stroke-width="1.4" fill="none" stroke-linecap="round" stroke-linejoin="round"/>
<path d="M1189.3 122.4L1191.8 125L1194.3 122.4" stroke="#f0f0f0" stroke-width="1.6" fill="none"/>
<path d="M1189.3 245.6L1191.8 248.2L1194.3 245.6" stroke="#f0f0f0" stroke-width="1.6" fill="none"/>
</svg>
</div>
</body></html>
